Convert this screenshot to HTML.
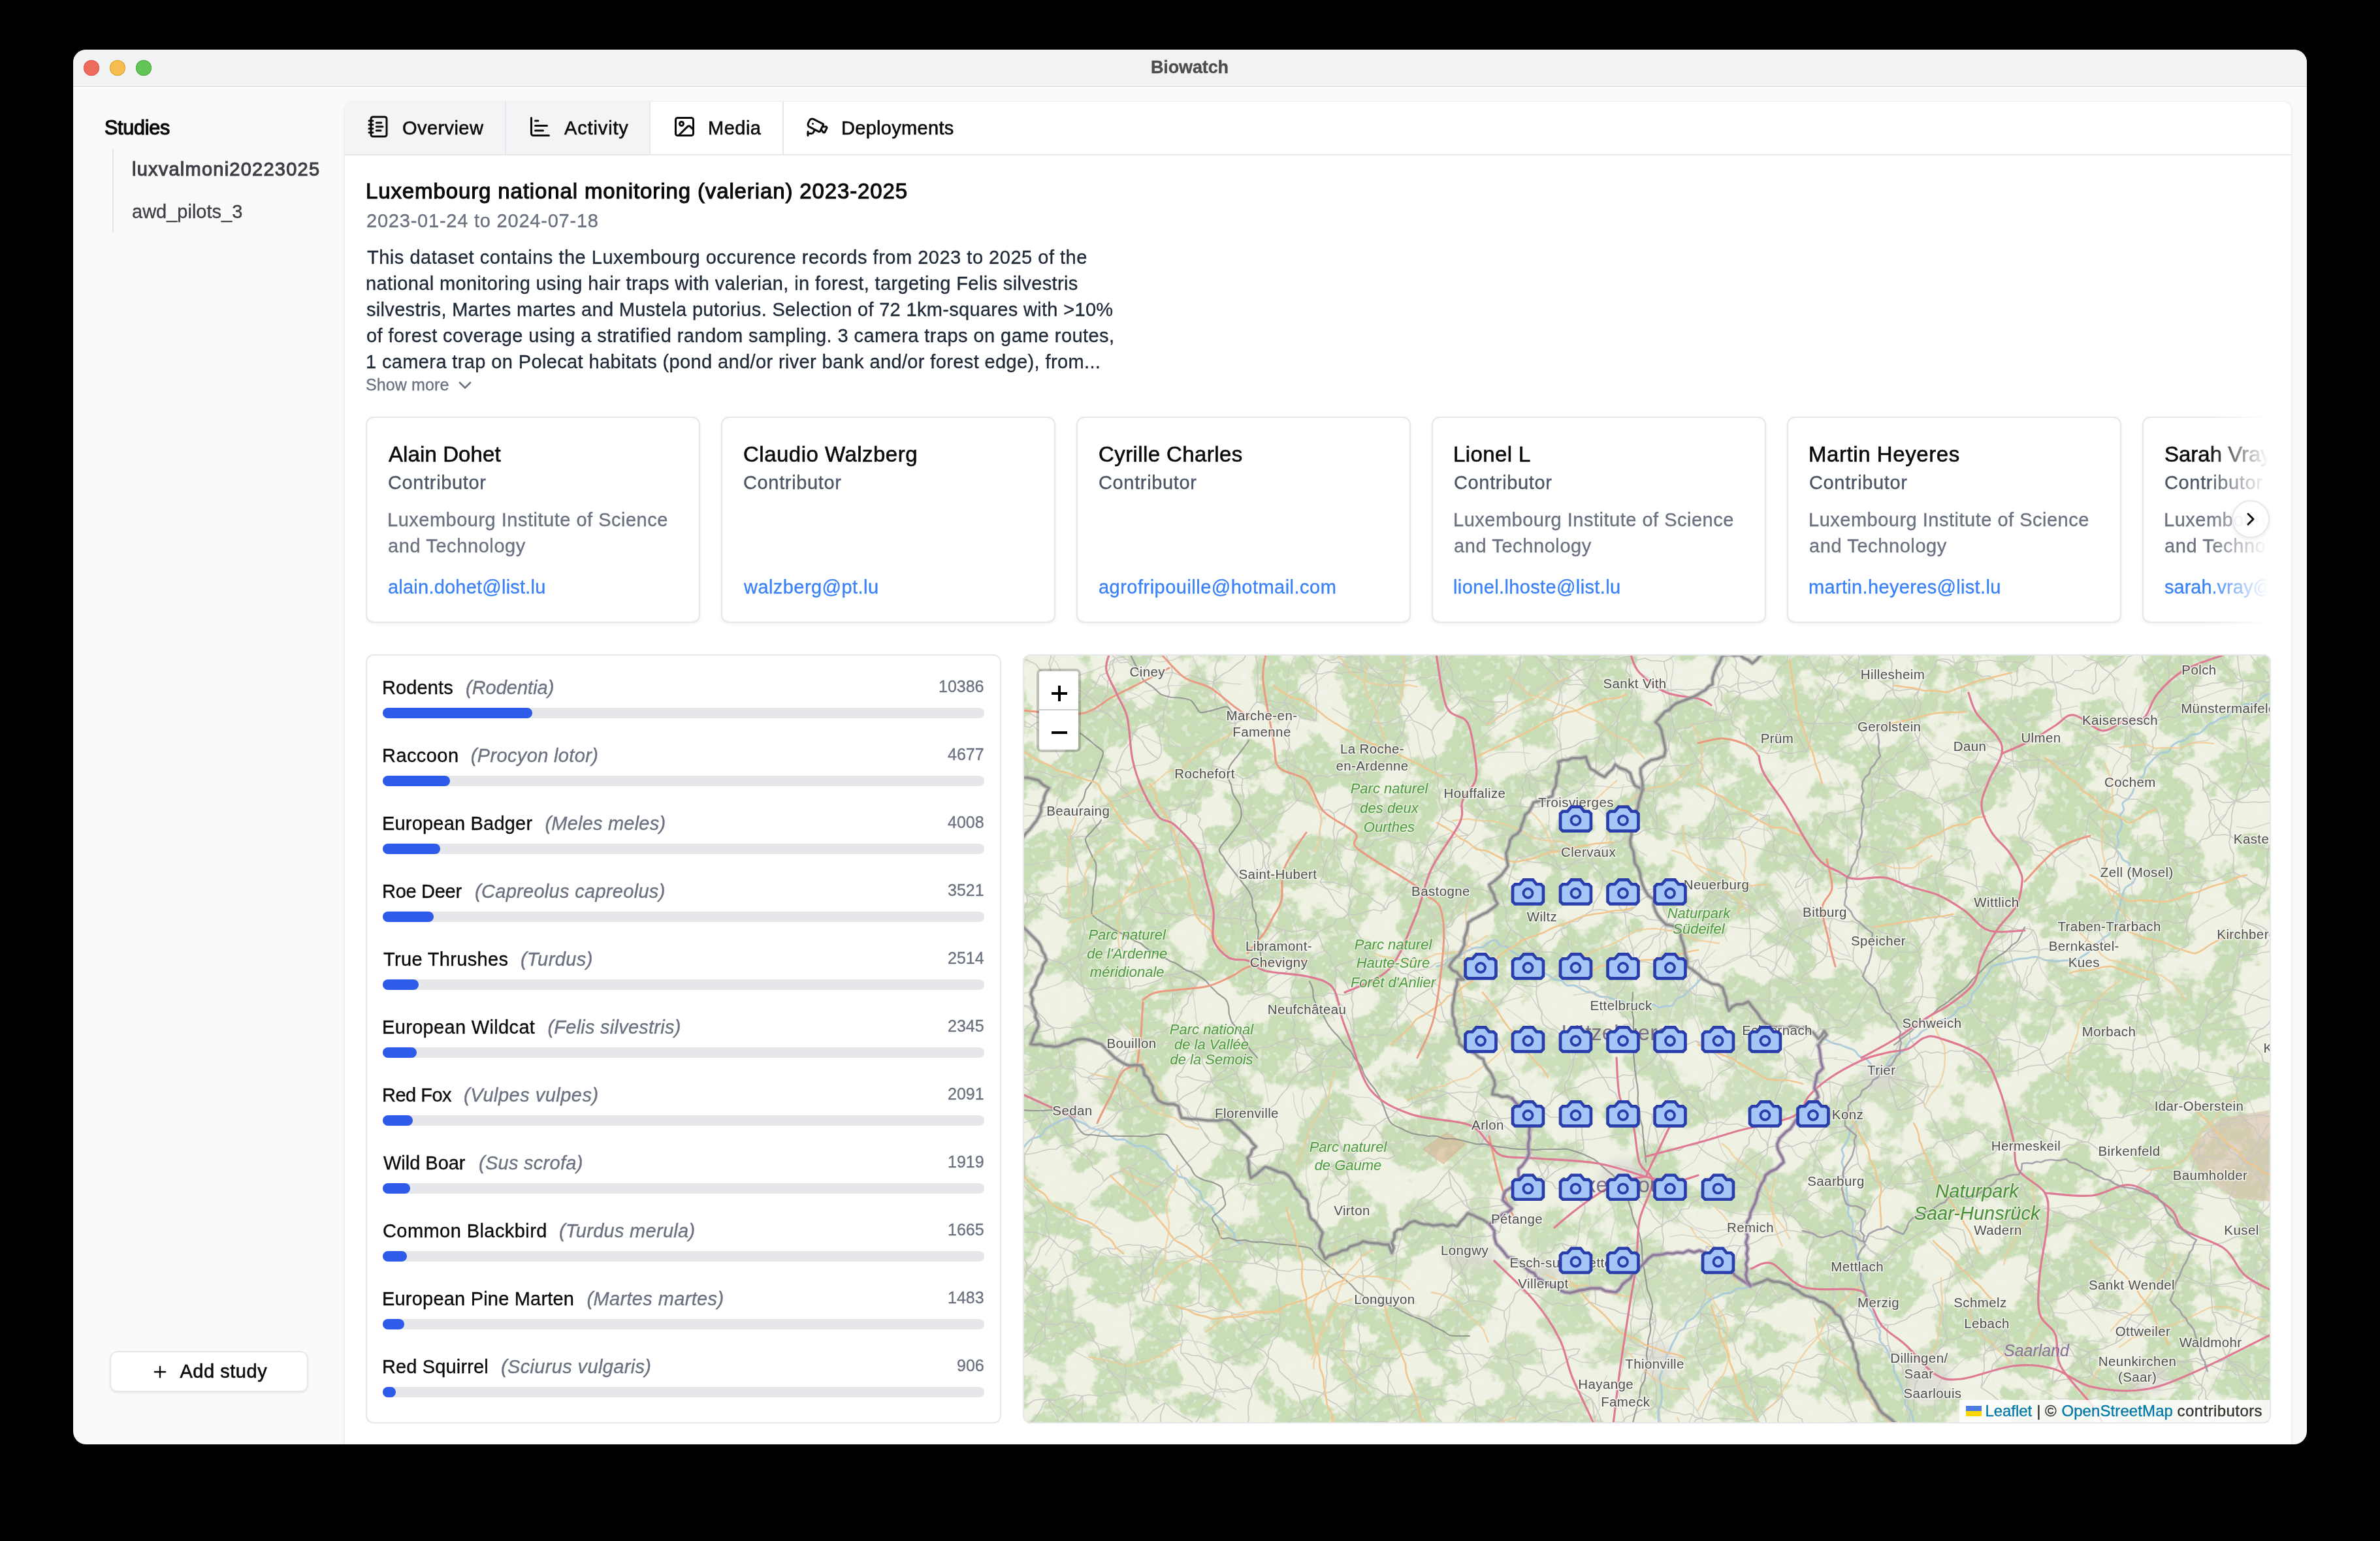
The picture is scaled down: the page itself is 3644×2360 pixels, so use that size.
<!DOCTYPE html>
<html><head><meta charset="utf-8"><title>Biowatch</title>
<style>
html,body{margin:0;padding:0;width:3644px;height:2360px;overflow:hidden;background:#000;}
#win{position:absolute;will-change:transform;left:112px;top:76px;width:3420px;height:2136px;border-radius:20px;overflow:hidden;background:#fafafa;}
.t{position:absolute;white-space:pre;font-family:"Liberation Sans",sans-serif;}
</style></head><body>
<div id="win">
<div style="position:absolute;left:0px;top:0px;width:3420px;height:56px;background:#f2f2f2;"></div>
<div style="position:absolute;left:0px;top:56px;width:3420px;height:1px;background:#d9d9d9;"></div>
<div style="position:absolute;left:16px;top:16px;width:24px;height:24px;border-radius:50%;background:#ee6a5f;box-shadow:inset 0 0 0 1px #d65a50"></div>
<div style="position:absolute;left:56px;top:16px;width:24px;height:24px;border-radius:50%;background:#f5be4f;box-shadow:inset 0 0 0 1px #d9a23c"></div>
<div style="position:absolute;left:96px;top:16px;width:24px;height:24px;border-radius:50%;background:#61c454;box-shadow:inset 0 0 0 1px #4fa843"></div>
<div style="position:absolute;left:60px;top:152px;width:2px;height:128px;background:#e4e4e7;"></div>
<div style="position:absolute;left:56px;top:1993px;width:304px;height:63px;background:#fff;border:2px solid #e5e7eb;border-radius:12px;box-sizing:border-box;box-shadow:0 2px 3px rgba(0,0,0,0.06);"></div>
<svg style="position:absolute;left:119.3px;top:2010.5px" width="28" height="28" viewBox="0 0 24 24" fill="none" stroke="#0a0a0a" stroke-width="2" stroke-linecap="round"><path d="M5 12h14"/><path d="M12 5v14"/></svg>
<div style="position:absolute;left:416px;top:80px;width:2980px;height:2084px;background:#fff;border-radius:12px 12px 0 0;box-shadow:0 0 0 1px rgba(0,0,0,0.03),0 2px 8px rgba(0,0,0,0.06);"></div>
<div style="position:absolute;left:416px;top:80px;width:467px;height:80px;background:#f3f4f6;border-radius:12px 0 0 0;"></div>
<div style="position:absolute;left:416px;top:160px;width:2980px;height:2px;background:#e5e7eb;"></div>
<div style="position:absolute;left:661px;top:80px;width:2px;height:80px;background:#e5e7eb;"></div>
<div style="position:absolute;left:882px;top:80px;width:2px;height:80px;background:#e5e7eb;"></div>
<div style="position:absolute;left:1086px;top:80px;width:2px;height:80px;background:#e5e7eb;"></div>
<svg style="position:absolute;left:449.5px;top:100px" width="36" height="36" viewBox="0 0 24 24" fill="none" stroke="#0a0a0a" stroke-width="2" stroke-linecap="round" stroke-linejoin="round"><path d="M2 6h4"/><path d="M2 10h4"/><path d="M2 14h4"/><path d="M2 18h4"/><rect width="16" height="20" x="4" y="2" rx="2"/><path d="M9.5 8h5"/><path d="M9.5 12H16"/><path d="M9.5 16H14"/></svg>
<svg style="position:absolute;left:697px;top:100px" width="36" height="36" viewBox="0 0 24 24" fill="none" stroke="#0a0a0a" stroke-width="2" stroke-linecap="round" stroke-linejoin="round"><path d="M3 3v16a2 2 0 0 0 2 2h16"/><path d="M7 16h8"/><path d="M7 11h12"/><path d="M7 6h3"/></svg>
<svg style="position:absolute;left:918px;top:100px" width="36" height="36" viewBox="0 0 24 24" fill="none" stroke="#0a0a0a" stroke-width="2" stroke-linecap="round" stroke-linejoin="round"><rect width="18" height="18" x="3" y="3" rx="2" ry="2"/><circle cx="9" cy="9" r="2"/><path d="m21 15-3.086-3.086a2 2 0 0 0-2.828 0L6 21"/></svg>
<svg style="position:absolute;left:1122px;top:100px" width="36" height="36" viewBox="0 0 24 24" fill="none" stroke="#0a0a0a" stroke-width="2" stroke-linecap="round" stroke-linejoin="round"><path d="M16.75 12h3.632a1 1 0 0 1 .894 1.447l-2.034 4.069a1 1 0 0 1-1.708.134l-2.124-2.97"/><path d="M17.106 9.053a1 1 0 0 1 .447 1.341l-3.106 6.211a1 1 0 0 1-1.342.447L3.61 12.3a2.92 2.92 0 0 1-1.3-3.91L3.69 5.6a2.92 2.92 0 0 1 3.92-1.3z"/><path d="M2 19h3.76a2 2 0 0 0 1.8-1.1L9 15"/><path d="M2 21v-4"/><path d="M7 9h.01"/></svg>
<svg style="position:absolute;left:584.0px;top:498.0px" width="32" height="32" viewBox="0 0 24 24" fill="none" stroke="#6b7280" stroke-width="2" stroke-linecap="round" stroke-linejoin="round"><path d="m6 9 6 6 6-6"/></svg>
<div style="position:absolute;left:448px;top:562px;width:2913px;height:330px;overflow:hidden"><div style="position:absolute;left:0px;top:0px;width:512px;height:316px;box-sizing:border-box;border:2px solid #e5e7eb;border-radius:12px;background:#fff;box-shadow:0 2px 4px rgba(0,0,0,0.05)"></div>
<div style="position:absolute;left:544px;top:0px;width:512px;height:316px;box-sizing:border-box;border:2px solid #e5e7eb;border-radius:12px;background:#fff;box-shadow:0 2px 4px rgba(0,0,0,0.05)"></div>
<div style="position:absolute;left:1088px;top:0px;width:512px;height:316px;box-sizing:border-box;border:2px solid #e5e7eb;border-radius:12px;background:#fff;box-shadow:0 2px 4px rgba(0,0,0,0.05)"></div>
<div style="position:absolute;left:1632px;top:0px;width:512px;height:316px;box-sizing:border-box;border:2px solid #e5e7eb;border-radius:12px;background:#fff;box-shadow:0 2px 4px rgba(0,0,0,0.05)"></div>
<div style="position:absolute;left:2176px;top:0px;width:512px;height:316px;box-sizing:border-box;border:2px solid #e5e7eb;border-radius:12px;background:#fff;box-shadow:0 2px 4px rgba(0,0,0,0.05)"></div>
<div style="position:absolute;left:2720px;top:0px;width:512px;height:316px;box-sizing:border-box;border:2px solid #e5e7eb;border-radius:12px;background:#fff;box-shadow:0 2px 4px rgba(0,0,0,0.05)"></div>
<div class="t" style="left:35.00px;top:33.00px;height:50px;line-height:50px;font-size:33px;font-weight:400;letter-spacing:0.100px;color:#0a0a0a;-webkit-text-stroke:0.6000000000000001px #0a0a0a;">Alain Dohet</div>
<div class="t" style="left:34.00px;top:79.40px;height:44px;line-height:44px;font-size:29px;font-weight:400;letter-spacing:0.650px;color:#4b5563;-webkit-text-stroke:0.35px #4b5563;">Contributor</div>
<div class="t" style="left:33.00px;top:136.00px;height:44px;line-height:44px;font-size:29px;font-weight:400;letter-spacing:0.500px;color:#6b7280;-webkit-text-stroke:0.35px #6b7280;">Luxembourg Institute of Science</div>
<div class="t" style="left:34.00px;top:176.00px;height:44px;line-height:44px;font-size:29px;font-weight:400;letter-spacing:0.592px;color:#6b7280;-webkit-text-stroke:0.35px #6b7280;">and Technology</div>
<div class="t" style="left:34.00px;top:239.40px;height:44px;line-height:44px;font-size:29px;font-weight:400;letter-spacing:0.222px;color:#3b82f6;-webkit-text-stroke:0.35px #3b82f6;">alain.dohet@list.lu</div>
<div class="t" style="left:578.00px;top:33.00px;height:50px;line-height:50px;font-size:33px;font-weight:400;letter-spacing:0.487px;color:#0a0a0a;-webkit-text-stroke:0.6000000000000001px #0a0a0a;">Claudio Walzberg</div>
<div class="t" style="left:578.00px;top:79.40px;height:44px;line-height:44px;font-size:29px;font-weight:400;letter-spacing:0.650px;color:#4b5563;-webkit-text-stroke:0.35px #4b5563;">Contributor</div>
<div class="t" style="left:579.00px;top:239.40px;height:44px;line-height:44px;font-size:29px;font-weight:400;letter-spacing:0.438px;color:#3b82f6;-webkit-text-stroke:0.35px #3b82f6;">walzberg@pt.lu</div>
<div class="t" style="left:1122.00px;top:33.00px;height:50px;line-height:50px;font-size:33px;font-weight:400;letter-spacing:0.400px;color:#0a0a0a;-webkit-text-stroke:0.6000000000000001px #0a0a0a;">Cyrille Charles</div>
<div class="t" style="left:1122.00px;top:79.40px;height:44px;line-height:44px;font-size:29px;font-weight:400;letter-spacing:0.650px;color:#4b5563;-webkit-text-stroke:0.35px #4b5563;">Contributor</div>
<div class="t" style="left:1122.00px;top:239.40px;height:44px;line-height:44px;font-size:29px;font-weight:400;letter-spacing:0.480px;color:#3b82f6;-webkit-text-stroke:0.35px #3b82f6;">agrofripouille@hotmail.com</div>
<div class="t" style="left:1665.00px;top:33.00px;height:50px;line-height:50px;font-size:33px;font-weight:400;letter-spacing:0.400px;color:#0a0a0a;-webkit-text-stroke:0.6000000000000001px #0a0a0a;">Lionel L</div>
<div class="t" style="left:1666.00px;top:79.40px;height:44px;line-height:44px;font-size:29px;font-weight:400;letter-spacing:0.650px;color:#4b5563;-webkit-text-stroke:0.35px #4b5563;">Contributor</div>
<div class="t" style="left:1665.00px;top:136.00px;height:44px;line-height:44px;font-size:29px;font-weight:400;letter-spacing:0.500px;color:#6b7280;-webkit-text-stroke:0.35px #6b7280;">Luxembourg Institute of Science</div>
<div class="t" style="left:1666.00px;top:176.00px;height:44px;line-height:44px;font-size:29px;font-weight:400;letter-spacing:0.592px;color:#6b7280;-webkit-text-stroke:0.35px #6b7280;">and Technology</div>
<div class="t" style="left:1665.00px;top:239.40px;height:44px;line-height:44px;font-size:29px;font-weight:400;letter-spacing:0.375px;color:#3b82f6;-webkit-text-stroke:0.35px #3b82f6;">lionel.lhoste@list.lu</div>
<div class="t" style="left:2209.00px;top:33.00px;height:50px;line-height:50px;font-size:33px;font-weight:400;letter-spacing:0.569px;color:#0a0a0a;-webkit-text-stroke:0.6000000000000001px #0a0a0a;">Martin Heyeres</div>
<div class="t" style="left:2210.00px;top:79.40px;height:44px;line-height:44px;font-size:29px;font-weight:400;letter-spacing:0.650px;color:#4b5563;-webkit-text-stroke:0.35px #4b5563;">Contributor</div>
<div class="t" style="left:2209.00px;top:136.00px;height:44px;line-height:44px;font-size:29px;font-weight:400;letter-spacing:0.500px;color:#6b7280;-webkit-text-stroke:0.35px #6b7280;">Luxembourg Institute of Science</div>
<div class="t" style="left:2210.00px;top:176.00px;height:44px;line-height:44px;font-size:29px;font-weight:400;letter-spacing:0.592px;color:#6b7280;-webkit-text-stroke:0.35px #6b7280;">and Technology</div>
<div class="t" style="left:2209.00px;top:239.40px;height:44px;line-height:44px;font-size:29px;font-weight:400;letter-spacing:0.333px;color:#3b82f6;-webkit-text-stroke:0.35px #3b82f6;">martin.heyeres@list.lu</div>
<div class="t" style="left:2754.00px;top:33.00px;height:50px;line-height:50px;font-size:33px;font-weight:400;letter-spacing:0.000px;color:#0a0a0a;-webkit-text-stroke:0.6000000000000001px #0a0a0a;">Sarah Vray</div>
<div class="t" style="left:2754.00px;top:79.40px;height:44px;line-height:44px;font-size:29px;font-weight:400;letter-spacing:0.650px;color:#4b5563;-webkit-text-stroke:0.35px #4b5563;">Contributor</div>
<div class="t" style="left:2753.00px;top:136.00px;height:44px;line-height:44px;font-size:29px;font-weight:400;letter-spacing:0.500px;color:#6b7280;-webkit-text-stroke:0.35px #6b7280;">Luxembourg Institute of Science</div>
<div class="t" style="left:2754.00px;top:176.00px;height:44px;line-height:44px;font-size:29px;font-weight:400;letter-spacing:0.592px;color:#6b7280;-webkit-text-stroke:0.35px #6b7280;">and Technology</div>
<div class="t" style="left:2754.00px;top:239.40px;height:44px;line-height:44px;font-size:29px;font-weight:400;letter-spacing:0.000px;color:#3b82f6;-webkit-text-stroke:0.35px #3b82f6;">sarah.vray@list.lu</div><div style="position:absolute;left:2820px;top:0;width:93px;height:330px;background:linear-gradient(to right,rgba(255,255,255,0),#fff)"></div></div>
<div style="position:absolute;left:3305px;top:690px;width:58px;height:58px;border-radius:50%;background:rgba(255,255,255,0.82);border:2px solid #e5e7eb;box-sizing:border-box;box-shadow:0 2px 6px rgba(0,0,0,0.08)"></div>
<svg style="position:absolute;left:3318.0px;top:703.0px" width="32" height="32" viewBox="0 0 24 24" fill="none" stroke="#0a0a0a" stroke-width="2.2" stroke-linecap="round" stroke-linejoin="round"><path d="m9 18 6-6-6-6"/></svg>
<div style="position:absolute;left:448px;top:926px;width:973px;height:1178px;background:#fff;border:2px solid #e5e7eb;border-radius:12px;box-sizing:border-box;"></div>
<div style="position:absolute;left:474px;top:1008px;width:921px;height:16px;background:#e5e7eb;border-radius:8px;"></div>
<div style="position:absolute;left:474px;top:1008px;width:228.83985645933012px;height:16px;background:#2f5bea;border-radius:8px;"></div>
<div style="position:absolute;left:474px;top:1112px;width:921px;height:16px;background:#e5e7eb;border-radius:8px;"></div>
<div style="position:absolute;left:474px;top:1112px;width:103.05064593301438px;height:16px;background:#2f5bea;border-radius:8px;"></div>
<div style="position:absolute;left:474px;top:1216px;width:921px;height:16px;background:#e5e7eb;border-radius:8px;"></div>
<div style="position:absolute;left:474px;top:1216px;width:88.3102392344498px;height:16px;background:#2f5bea;border-radius:8px;"></div>
<div style="position:absolute;left:474px;top:1320px;width:921px;height:16px;background:#e5e7eb;border-radius:8px;"></div>
<div style="position:absolute;left:474px;top:1320px;width:77.57992822966503px;height:16px;background:#2f5bea;border-radius:8px;"></div>
<div style="position:absolute;left:474px;top:1424px;width:921px;height:16px;background:#e5e7eb;border-radius:8px;"></div>
<div style="position:absolute;left:474px;top:1424px;width:55.39220095693781px;height:16px;background:#2f5bea;border-radius:8px;"></div>
<div style="position:absolute;left:474px;top:1528px;width:921px;height:16px;background:#e5e7eb;border-radius:8px;"></div>
<div style="position:absolute;left:474px;top:1528px;width:51.6685406698565px;height:16px;background:#2f5bea;border-radius:8px;"></div>
<div style="position:absolute;left:474px;top:1632px;width:921px;height:16px;background:#e5e7eb;border-radius:8px;"></div>
<div style="position:absolute;left:474px;top:1632px;width:46.072033492822925px;height:16px;background:#2f5bea;border-radius:8px;"></div>
<div style="position:absolute;left:474px;top:1736px;width:921px;height:16px;background:#e5e7eb;border-radius:8px;"></div>
<div style="position:absolute;left:474px;top:1736px;width:42.2822727272727px;height:16px;background:#2f5bea;border-radius:8px;"></div>
<div style="position:absolute;left:474px;top:1840px;width:921px;height:16px;background:#e5e7eb;border-radius:8px;"></div>
<div style="position:absolute;left:474px;top:1840px;width:36.68576555023924px;height:16px;background:#2f5bea;border-radius:8px;"></div>
<div style="position:absolute;left:474px;top:1944px;width:921px;height:16px;background:#e5e7eb;border-radius:8px;"></div>
<div style="position:absolute;left:474px;top:1944px;width:32.67566985645931px;height:16px;background:#2f5bea;border-radius:8px;"></div>
<div style="position:absolute;left:474px;top:2048px;width:921px;height:16px;background:#e5e7eb;border-radius:8px;"></div>
<div style="position:absolute;left:474px;top:2048px;width:19.96234449760766px;height:16px;background:#2f5bea;border-radius:8px;"></div>
<div style="position:absolute;left:1454px;top:926px;width:1911px;height:1178px;overflow:hidden;border-radius:12px;"><svg style="position:absolute;left:0;top:0" width="1911" height="1178" viewBox="1566 1002 1911 1178"><rect x="1566" y="1002" width="1911" height="1178" fill="#eff1e3"/><defs><filter id="fo1" x="1566" y="1002" width="1911" height="1178" filterUnits="userSpaceOnUse" color-interpolation-filters="sRGB"><feTurbulence type="fractalNoise" baseFrequency="0.014" numOctaves="6" seed="11" result="n"/><feColorMatrix in="n" type="matrix" values="0 0 0 0 0.784  0 0 0 0 0.863  0 0 0 0 0.714  14 0 0 0 -5.95" result="f"/><feComposite in="f" in2="SourceGraphic" operator="in"/></filter><filter id="fo2" x="1566" y="1002" width="1911" height="1178" filterUnits="userSpaceOnUse" color-interpolation-filters="sRGB"><feTurbulence type="fractalNoise" baseFrequency="0.014" numOctaves="6" seed="11" result="n"/><feColorMatrix in="n" type="matrix" values="0 0 0 0 0.784  0 0 0 0 0.863  0 0 0 0 0.714  14 0 0 0 -6.4" result="f"/><feComposite in="f" in2="SourceGraphic" operator="in"/></filter><filter id="fo3" x="1566" y="1002" width="1911" height="1178" filterUnits="userSpaceOnUse" color-interpolation-filters="sRGB"><feTurbulence type="fractalNoise" baseFrequency="0.014" numOctaves="6" seed="11" result="n"/><feColorMatrix in="n" type="matrix" values="0 0 0 0 0.784  0 0 0 0 0.863  0 0 0 0 0.714  14 0 0 0 -7.0" result="f"/><feComposite in="f" in2="SourceGraphic" operator="in"/></filter><filter id="speck" x="1566" y="1002" width="1911" height="1178" filterUnits="userSpaceOnUse" color-interpolation-filters="sRGB"><feTurbulence type="fractalNoise" baseFrequency="0.09" numOctaves="2" seed="5" result="n"/><feColorMatrix in="n" type="matrix" values="0 0 0 0 0.95  0 0 0 0 0.96  0 0 0 0 0.92  12 0 0 0 -6.9" result="f"/><feComposite in="f" in2="SourceGraphic" operator="in"/></filter><filter id="bl" x="-50%" y="-50%" width="200%" height="200%"><feGaussianBlur stdDeviation="60"/></filter><filter id="ub" x="-50%" y="-50%" width="200%" height="200%"><feGaussianBlur stdDeviation="6"/></filter><mask id="mdense" maskUnits="userSpaceOnUse" x="1566" y="1002" width="1911" height="1178"><g filter="url(#bl)" fill="#fff"><ellipse cx="1850" cy="1380" rx="320" ry="280"/><ellipse cx="2080" cy="1150" rx="200" ry="150"/><ellipse cx="1720" cy="1200" rx="220" ry="260"/><ellipse cx="1950" cy="1100" rx="200" ry="120"/><ellipse cx="2250" cy="1060" rx="320" ry="90"/><ellipse cx="3200" cy="1640" rx="260" ry="120"/><ellipse cx="3250" cy="1700" rx="230" ry="200"/><ellipse cx="2800" cy="1150" rx="200" ry="150"/></g></mask><mask id="msparse" maskUnits="userSpaceOnUse" x="1566" y="1002" width="1911" height="1178"><g filter="url(#bl)" fill="#fff"><ellipse cx="2480" cy="1760" rx="230" ry="220"/><ellipse cx="2450" cy="2050" rx="120" ry="150"/><ellipse cx="2860" cy="1660" rx="80" ry="80"/></g></mask></defs><rect x="1566" y="1002" width="1911" height="1178" fill="#fff" filter="url(#fo2)"/><rect x="1566" y="1002" width="1911" height="1178" fill="#fff" filter="url(#fo1)" mask="url(#mdense)"/><rect x="1566" y="1002" width="1911" height="1178" fill="#eef1e2" opacity="0.6" mask="url(#msparse)"/><rect x="1566" y="1002" width="1911" height="1178" fill="#fff" filter="url(#fo3)" mask="url(#msparse)"/><rect x="1566" y="1002" width="1911" height="1178" fill="#fff" filter="url(#speck)" opacity="0.45"/><path d="M2179 1760 L2215 1735 L2243 1752 L2210 1782Z" fill="#d8b190" opacity="0.55" stroke="#d9a97f" stroke-width="2"/><g fill="#dcd9d3" opacity="0.7" filter="url(#ub)"><ellipse cx="2485" cy="1805" rx="38" ry="30"/><ellipse cx="2880" cy="1650" rx="30" ry="22"/><ellipse cx="2250" cy="1925" rx="40" ry="18"/><ellipse cx="2370" cy="1945" rx="35" ry="15"/><ellipse cx="2540" cy="2085" rx="25" ry="30"/><ellipse cx="2950" cy="2110" rx="35" ry="40"/><ellipse cx="3290" cy="2110" rx="30" ry="25"/><ellipse cx="2278" cy="1735" rx="15" ry="12"/><ellipse cx="3060" cy="1395" rx="18" ry="12"/><ellipse cx="2750" cy="1405" rx="15" ry="12"/><ellipse cx="1645" cy="1705" rx="25" ry="15"/></g><path d="M2540 2180C2540 2178 2539 2173 2539 2170C2539 2167 2539 2163 2539 2160C2540 2157 2542 2153 2543 2150C2544 2147 2544 2143 2545 2140C2545 2137 2544 2133 2544 2130C2544 2127 2543 2123 2543 2120C2542 2117 2541 2113 2541 2110C2542 2106 2543 2103 2545 2100C2547 2097 2550 2094 2551 2091C2552 2087 2550 2083 2551 2079C2552 2075 2554 2072 2556 2069C2557 2066 2559 2063 2560 2059C2562 2056 2563 2053 2565 2050C2567 2046 2568 2043 2570 2040C2572 2037 2576 2037 2579 2034C2581 2032 2581 2027 2583 2025C2586 2022 2589 2021 2592 2019C2595 2017 2597 2014 2599 2012C2601 2009 2603 2006 2605 2004C2607 2001 2610 1999 2612 1996C2615 1994 2617 1992 2620 1990C2623 1988 2627 1987 2630 1986C2633 1984 2636 1982 2639 1981C2643 1980 2647 1981 2650 1980C2653 1978 2656 1975 2659 1974C2662 1972 2667 1974 2670 1973C2674 1972 2678 1970 2680 1969" fill="none" stroke="#a6c9dc" stroke-width="3" stroke-linecap="round" stroke-linejoin="round" opacity="0.9"/><path d="M2794 1591C2796 1592 2801 1595 2805 1597C2809 1599 2814 1599 2818 1600C2822 1602 2826 1604 2830 1605C2834 1606 2837 1607 2840 1609C2842 1611 2844 1615 2846 1617C2849 1619 2853 1619 2856 1621C2859 1623 2861 1626 2863 1628C2866 1631 2867 1635 2870 1637C2873 1639 2877 1641 2880 1640C2883 1639 2886 1635 2888 1632C2891 1629 2892 1625 2894 1622C2896 1619 2899 1617 2903 1615C2906 1613 2911 1612 2914 1610C2917 1607 2918 1603 2920 1600C2922 1597 2924 1594 2927 1592C2929 1590 2933 1590 2936 1587C2938 1585 2940 1582 2942 1580C2945 1578 2948 1577 2951 1575C2954 1574 2957 1572 2960 1570C2963 1568 2966 1565 2970 1563C2973 1562 2978 1562 2981 1560C2985 1559 2988 1557 2991 1554C2994 1551 2996 1546 2999 1544C3002 1542 3007 1542 3010 1540C3013 1538 3015 1535 3017 1532C3019 1529 3018 1525 3020 1522C3022 1519 3025 1517 3027 1514C3029 1512 3031 1509 3033 1506C3035 1503 3037 1500 3039 1497C3041 1495 3043 1492 3045 1489C3046 1486 3047 1482 3050 1480C3053 1478 3057 1478 3060 1477C3063 1476 3067 1476 3070 1475C3073 1474 3077 1473 3080 1472C3083 1471 3086 1469 3090 1469C3093 1468 3097 1468 3100 1468C3103 1468 3107 1467 3110 1466C3113 1466 3117 1465 3120 1466C3123 1466 3127 1469 3130 1470C3133 1471 3137 1471 3140 1471C3143 1472 3147 1472 3150 1472C3153 1472 3157 1471 3160 1471C3163 1471 3167 1471 3170 1471C3173 1471 3177 1471 3180 1470C3183 1469 3186 1466 3189 1464C3192 1462 3195 1461 3198 1458C3200 1455 3201 1451 3204 1449C3207 1446 3210 1445 3213 1443C3216 1441 3219 1439 3221 1436C3224 1434 3228 1433 3230 1430C3232 1427 3230 1422 3231 1419C3233 1416 3237 1414 3239 1411C3241 1408 3240 1404 3241 1400C3242 1397 3244 1394 3245 1390C3246 1387 3247 1384 3247 1380C3248 1377 3249 1374 3250 1370C3251 1366 3252 1362 3255 1359C3257 1356 3263 1355 3266 1352C3268 1348 3271 1343 3270 1340C3269 1337 3264 1336 3262 1334C3260 1331 3262 1325 3260 1322C3258 1320 3253 1319 3251 1317C3248 1314 3248 1311 3246 1308C3244 1305 3240 1303 3240 1300C3240 1297 3244 1294 3244 1290C3244 1287 3241 1283 3242 1280C3242 1277 3245 1274 3247 1270C3248 1267 3249 1264 3249 1260C3249 1257 3245 1253 3246 1250C3246 1246 3251 1244 3252 1240C3252 1237 3249 1233 3250 1230C3251 1227 3256 1226 3259 1223C3261 1220 3263 1217 3265 1214C3266 1211 3267 1207 3269 1204C3270 1200 3272 1197 3274 1195C3277 1192 3281 1190 3282 1187C3284 1184 3284 1179 3285 1176C3287 1173 3290 1170 3292 1168C3295 1165 3297 1162 3300 1160C3303 1158 3305 1154 3308 1153C3311 1152 3317 1153 3320 1151C3323 1150 3323 1144 3326 1142C3329 1139 3332 1138 3335 1136C3338 1135 3343 1135 3346 1133C3349 1131 3351 1127 3354 1126C3357 1124 3362 1125 3365 1124C3368 1123 3371 1121 3374 1118C3377 1116 3378 1112 3381 1110C3384 1108 3388 1107 3391 1106C3394 1104 3397 1101 3400 1100C3403 1099 3408 1099 3411 1097C3413 1095 3415 1090 3418 1088C3421 1086 3425 1087 3429 1086C3432 1084 3434 1080 3437 1079C3440 1077 3445 1079 3448 1078C3452 1077 3455 1076 3458 1074C3461 1072 3463 1068 3466 1066C3469 1064 3474 1063 3476 1062" fill="none" stroke="#a6c9dc" stroke-width="3" stroke-linecap="round" stroke-linejoin="round" opacity="0.9"/><path d="M2930 2180C2930 2178 2929 2173 2928 2169C2927 2166 2926 2162 2924 2159C2922 2156 2918 2154 2917 2151C2916 2147 2918 2143 2917 2139C2917 2136 2914 2133 2913 2129C2912 2126 2911 2123 2909 2119C2908 2116 2906 2113 2905 2110C2903 2106 2901 2103 2900 2100C2899 2097 2900 2092 2899 2089C2898 2086 2895 2083 2894 2079C2892 2076 2892 2072 2890 2069C2889 2066 2886 2063 2884 2060C2881 2057 2878 2054 2878 2051C2877 2047 2879 2042 2879 2039C2878 2035 2875 2033 2873 2029C2872 2026 2872 2022 2871 2019C2869 2016 2868 2012 2866 2009C2864 2006 2861 2003 2860 2000C2859 1997 2861 1993 2861 1989C2860 1986 2859 1983 2857 1980C2856 1977 2852 1974 2852 1970C2851 1967 2854 1963 2853 1960C2853 1956 2851 1953 2850 1950C2849 1947 2848 1943 2848 1940C2847 1937 2849 1933 2848 1930C2847 1926 2842 1924 2842 1920C2841 1917 2843 1913 2842 1910C2842 1907 2840 1904 2838 1900C2837 1897 2836 1894 2836 1890C2835 1887 2837 1883 2837 1880C2837 1876 2837 1873 2836 1870C2835 1866 2831 1864 2830 1860C2829 1857 2830 1853 2830 1850C2830 1847 2829 1843 2829 1840C2828 1837 2828 1833 2828 1830C2828 1827 2827 1823 2827 1820C2827 1817 2829 1813 2828 1810C2827 1806 2823 1804 2822 1800C2821 1797 2823 1793 2823 1790C2823 1787 2820 1784 2820 1780C2820 1777 2823 1773 2823 1770C2823 1766 2819 1763 2820 1760C2821 1757 2825 1754 2826 1751C2828 1747 2830 1744 2831 1740C2832 1737 2832 1733 2833 1729C2835 1726 2838 1723 2840 1720C2842 1717 2844 1713 2845 1710C2847 1707 2849 1702 2850 1700" fill="none" stroke="#a6c9dc" stroke-width="3" stroke-linecap="round" stroke-linejoin="round" opacity="0.9"/><path d="M1566 1760C1567 1758 1570 1753 1573 1750C1575 1748 1578 1745 1582 1743C1585 1742 1590 1742 1593 1740C1596 1737 1597 1733 1600 1730C1603 1727 1606 1726 1609 1724C1613 1722 1616 1720 1619 1719C1622 1717 1626 1715 1629 1714C1633 1713 1637 1712 1640 1712C1643 1712 1647 1715 1650 1717C1653 1718 1657 1719 1660 1721C1664 1722 1666 1726 1669 1727C1673 1729 1677 1729 1680 1730C1684 1731 1688 1732 1691 1733C1694 1735 1697 1738 1700 1740C1703 1742 1706 1744 1709 1745C1713 1746 1717 1744 1721 1745C1724 1746 1727 1749 1730 1750C1733 1752 1736 1754 1739 1755C1743 1756 1747 1754 1750 1755C1754 1756 1757 1758 1760 1760C1763 1762 1766 1763 1769 1765C1772 1767 1773 1771 1776 1773C1779 1775 1782 1776 1785 1778C1787 1781 1788 1785 1791 1787C1793 1790 1796 1791 1799 1794C1801 1796 1802 1800 1805 1802C1808 1803 1813 1803 1816 1805C1819 1807 1820 1811 1822 1813C1824 1816 1827 1818 1830 1820C1833 1822 1836 1823 1838 1826C1840 1829 1839 1834 1841 1837C1842 1840 1846 1841 1849 1844C1851 1846 1854 1848 1856 1850C1858 1853 1859 1857 1861 1859C1863 1862 1866 1864 1868 1866C1871 1869 1873 1871 1875 1874C1877 1876 1879 1879 1882 1881C1884 1884 1887 1886 1889 1888C1890 1891 1890 1896 1891 1899C1893 1902 1899 1904 1900 1905" fill="none" stroke="#a6c9dc" stroke-width="3" stroke-linecap="round" stroke-linejoin="round" opacity="0.9"/><path d="M2200 1480C2202 1479 2208 1479 2211 1477C2214 1475 2216 1471 2220 1469C2223 1468 2227 1468 2231 1466C2234 1465 2237 1462 2240 1460C2243 1458 2246 1456 2250 1455C2253 1453 2256 1452 2260 1451C2263 1451 2268 1452 2271 1450C2274 1449 2276 1445 2280 1443C2283 1441 2287 1439 2290 1440C2293 1441 2294 1446 2297 1448C2299 1450 2304 1449 2307 1450C2310 1452 2312 1455 2315 1457C2317 1459 2321 1460 2323 1462C2326 1464 2327 1468 2330 1470C2333 1472 2338 1472 2341 1474C2344 1477 2346 1480 2350 1483C2353 1485 2356 1487 2360 1489C2363 1490 2367 1491 2370 1493C2374 1495 2377 1499 2380 1500C2383 1501 2387 1500 2391 1502C2394 1503 2396 1508 2399 1509C2402 1511 2407 1508 2410 1509C2414 1510 2417 1512 2420 1514C2423 1516 2426 1518 2429 1519C2433 1520 2437 1519 2440 1520C2443 1521 2446 1525 2449 1526C2452 1527 2457 1526 2460 1527C2463 1527 2466 1529 2470 1530C2473 1531 2477 1532 2480 1533C2484 1534 2487 1535 2490 1536C2494 1537 2497 1540 2500 1540C2503 1540 2507 1538 2510 1539C2513 1539 2517 1541 2520 1541C2523 1541 2527 1537 2530 1538C2533 1538 2537 1542 2540 1543C2543 1543 2547 1541 2550 1541C2553 1540 2557 1542 2560 1540C2563 1538 2564 1532 2567 1530C2570 1527 2575 1527 2578 1525C2581 1523 2583 1519 2586 1517C2589 1514 2592 1512 2595 1509C2598 1506 2602 1501 2603 1500" fill="none" stroke="#a6c9dc" stroke-width="3" stroke-linecap="round" stroke-linejoin="round" opacity="0.9"/><path d="M3351 1760 L3400 1712 L3476 1700 L3476 1840 L3420 1835 L3370 1800Z" fill="#d9c2ac" opacity="0.6"/><path d="M3083 1873 3095 1874 3105 1881 3117 1882M2308 1074 2303 1082 2296 1089 2289 1096 2282 1102 2276 1109M2030 1010 2041 1011 2051 1005 2062 1007 2073 1004 2083 1004M3200 1598 3192 1602 3184 1608 3176 1613 3165 1612 3158 1618 3149 1623 3142 1628 3132 1631M1924 1075 1935 1075 1945 1073 1955 1076 1965 1076M1551 1526 1553 1536 1553 1547 1560 1555 1559 1566 1564 1575 1565 1586M1729 1603 1738 1599 1746 1595 1754 1590 1764 1588 1771 1581 1781 1580 1789 1574 1798 1572M1965 1076 1971 1067 1979 1062 1988 1058 1992 1049 2000 1044 2009 1039 2015 1032M2201 1187 2202 1196 2201 1205 2205 1214 2203 1223 2205 1232 2209 1241 2207 1250M1862 1099 1872 1102 1882 1106 1892 1109M3498 1536 3498 1546 3501 1556 3502 1567 3502 1577M3445 1596 3451 1602 3458 1609 3463 1616 3465 1626 3475 1630 3480 1637 3486 1644 3489 1653M1665 1650 1674 1653 1683 1652 1693 1653 1702 1654 1711 1653M3335 2084 3324 2089 3316 2097 3307 2104 3297 2108M2123 1247 2124 1258 2124 1269 2126 1280M3243 2140 3241 2150 3246 2160 3246 2170 3244 2181M1856 1173 1866 1175 1875 1179 1884 1183 1894 1187 1903 1193M2080 1302 2078 1311 2074 1319 2077 1329 2073 1338 2070 1346 2069 1355M1569 1768 1579 1767 1588 1765 1598 1762 1607 1760 1617 1760 1625 1754 1635 1754M1791 1241 1801 1240 1809 1233 1820 1233 1828 1228M3379 1734 3385 1742 3395 1743 3399 1753 3410 1754 3414 1764 3422 1767 3429 1774 3437 1778M1635 1754 1646 1758 1655 1765 1664 1772M2069 1355 2066 1364 2065 1373 2069 1383 2066 1391 2064 1400M1740 1304 1750 1304 1759 1302 1769 1301 1779 1299 1788 1296 1798 1292M1567 1815 1575 1824 1585 1829 1590 1840 1599 1846M2017 1428 2021 1437 2024 1446 2028 1456 2037 1463 2038 1473 2044 1482M3262 1832 3268 1840 3275 1846 3279 1856 3286 1862 3293 1869 3294 1880 3301 1887 3309 1894 3314 1902M3083 1422 3074 1427 3067 1434 3058 1439 3050 1445 3041 1450 3033 1454M2083 1004 2090 1012 2097 1019 2104 1027 2112 1033 2118 1041 2127 1047M1742 1332 1747 1339 1753 1346 1760 1352 1763 1361 1770 1367M1982 1476 1984 1487 1984 1498 1979 1508 1976 1519 1979 1529M1625 1405 1634 1407 1643 1404 1652 1406 1661 1406M3100 1958 3108 1965 3114 1973 3123 1979 3130 1986 3136 1995M3449 1888 3458 1883 3468 1882 3477 1878 3488 1878 3496 1872M3034 2034 3042 2039 3051 2042 3058 2049 3068 2052 3075 2059M3383 1970 3392 1968 3401 1967 3410 1966 3419 1964 3428 1962 3437 1966 3446 1962M1628 1477 1639 1470 1651 1464M1836 1607 1840 1617 1841 1628 1846 1637 1853 1645 1855 1656M1913 1609 1908 1618 1903 1626 1896 1634 1893 1644M1551 1526 1559 1532 1566 1539 1576 1541 1583 1549 1592 1553M1801 1647 1800 1657 1804 1667 1802 1677 1804 1687M2729 2138 2721 2146 2713 2152 2705 2158 2697 2166 2691 2174M1657 2138 1652 2146 1645 2152 1637 2158 1634 2167 1627 2174 1622 2182M3387 2009 3397 2011 3405 2016 3413 2022 3422 2024 3431 2028M2201 1187 2211 1187 2222 1188 2232 1185 2243 1186M1855 1656 1849 1664 1845 1674 1843 1684 1837 1693 1833 1702 1831 1712M1903 1250 1909 1258 1916 1265 1920 1274 1928 1280 1934 1288 1941 1295 1946 1303M3335 2084 3344 2087 3354 2085 3363 2085 3372 2090 3382 2090M3204 2106 3213 2112 3222 2117 3229 2125 3237 2131 3243 2140M2771 1751 2775 1760 2780 1769 2785 1778 2790 1787 2790 1798 2794 1807 2801 1815M3243 2140 3254 2137 3260 2127 3269 2122 3277 2116 3288 2114 3297 2108M2080 1302 2089 1298 2099 1295 2106 1286 2116 1284 2126 1280M1727 1788 1733 1796 1735 1807 1741 1815 1745 1825 1753 1832M1925 1275 1925 1285 1933 1294 1934 1304 1935 1314 1936 1324 1940 1334 1942 1343M2731 1851 2730 1863 2735 1873 2736 1884M3186 2189 3195 2185 3205 2184 3215 2187 3225 2186 3235 2185 3244 2181M2126 1280 2136 1283 2146 1286 2156 1287 2165 1292 2176 1290 2185 1296M3491 1433 3482 1435 3474 1439 3468 1448 3459 1451 3450 1452 3443 1458 3434 1462 3427 1467M2017 1428 2025 1424 2033 1420 2042 1416 2047 1407 2057 1406 2064 1400M1573 1945 1569 1954 1565 1963 1561 1972 1561 1983 1553 1991 1552 2001M2487 1006 2492 1016 2489 1027 2496 1036 2495 1047 2499 1056M2355 1457 2350 1466 2346 1475 2340 1484 2332 1490 2325 1498 2321 1507M3474 1929 3475 1938 3474 1948 3479 1956 3479 1965 3482 1974 3483 1983 3484 1992 3481 2001 3485 2010M3431 2028 3440 2031 3448 2035 3458 2037 3465 2043 3474 2047 3482 2050 3492 2051 3499 2057M2321 1507 2314 1514 2308 1522 2301 1529 2296 1538 2288 1543 2281 1551 2272 1556 2268 1565 2261 1572M1917 1520 1927 1524 1938 1522 1948 1524 1958 1529 1969 1527 1979 1529M2149 971 2158 974 2167 978 2176 981 2185 986 2193 992 2202 994 2212 996M2376 1097 2377 1108 2384 1117 2384 1128 2389 1137 2390 1148M1979 1529 1988 1528 1998 1528 2007 1527 2016 1524 2026 1526 2034 1521 2044 1522M2448 1128 2448 1138 2443 1148 2443 1158 2444 1169 2443 1179 2440 1189M2087 1029 2098 1033 2107 1037 2118 1040 2127 1047M2336 1186 2336 1196 2330 1205 2333 1216 2329 1225 2327 1235M1557 1649 1562 1657 1568 1665 1576 1670 1579 1680 1587 1686 1590 1695 1597 1703 1604 1709M2217 1674 2208 1677 2199 1680 2190 1681 2181 1683 2172 1686 2163 1689M1913 1609 1922 1607 1931 1604 1940 1604 1949 1601 1957 1596 1966 1595 1974 1591 1983 1589M1801 1647 1809 1650 1819 1649 1828 1653 1837 1655 1846 1656 1855 1656M3371 2122 3377 2130 3377 2141 3385 2148 3387 2158 3391 2166 3391 2177 3395 2186 3401 2194 3403 2204 3408 2212M3382 1226 3386 1237 3382 1248 3383 1258 3384 1269 3387 1279M1855 1656 1865 1655 1875 1652 1884 1647 1893 1644M3431 1706 3436 1715 3444 1721 3452 1727 3456 1736 3463 1743 3471 1749M3320 1313 3321 1324 3315 1333 3319 1344 3317 1354M1804 1687 1810 1694 1818 1699 1822 1708 1831 1712M2922 2186 2931 2188 2941 2187 2950 2192 2959 2191 2968 2195 2977 2199 2987 2198 2996 2200M3246 1362 3244 1372 3252 1380 3253 1390 3252 1400 3255 1409M1708 1008 1703 1016 1706 1027 1703 1036 1696 1043 1696 1053 1696 1063 1690 1071 1688 1080 1685 1089M3114 1848 3105 1853 3100 1862 3092 1868 3083 1873M3437 1778 3441 1787 3448 1794 3455 1801 3462 1808 3468 1815 3473 1824 3479 1831M2014 1913 2015 1925 2022 1935 2024 1947M1955 1945 1955 1954 1954 1963 1958 1972 1959 1981 1959 1991 1960 2000 1959 2009 1960 2018 1960 2027M2212 996 2212 1006 2216 1015 2221 1024 2224 1033 2224 1043 2233 1050 2235 1060 2237 1069M2094 1464 2088 1472 2087 1483 2083 1492 2080 1502 2076 1511 2071 1520M2969 1997 2973 2006 2976 2015 2974 2025 2977 2034 2980 2043 2981 2052M1885 2010 1889 2019 1897 2026 1901 2036 1906 2044 1911 2053 1918 2060M1573 1945 1581 1950 1588 1956 1596 1961 1606 1962 1613 1969M2895 996 2886 999 2879 1008 2870 1011 2862 1018 2855 1025 2846 1028M2487 1006 2498 1005 2507 1011 2518 1008 2528 1012 2538 1012 2548 1013M2892 2061 2894 2071 2904 2077 2906 2087 2913 2094 2914 2105 2920 2113M1892 1109 1888 1117 1883 1125 1879 1133 1872 1140 1870 1149 1867 1158 1858 1164 1856 1173M3058 1589 3058 1600 3061 1610 3061 1620 3061 1631 3059 1641M2499 1056 2508 1054 2517 1055 2526 1060 2535 1060 2544 1056 2554 1058M2081 1185 2085 1194 2092 1200 2098 1208 2101 1217 2110 1222 2112 1231 2119 1238 2123 1247M2448 1128 2455 1120 2464 1116 2471 1109 2477 1101M2336 1186 2343 1180 2353 1178 2359 1169 2368 1165 2374 1158 2382 1153 2390 1148M1988 1643 1981 1650 1975 1657 1971 1667 1964 1674 1958 1682 1953 1691 1944 1697M2512 2116 2520 2124 2521 2136 2528 2144 2535 2153M1828 1228 1823 1237 1817 1245 1817 1257 1808 1263 1807 1274 1802 1283 1798 1292M2945 1688 2948 1697 2956 1703 2958 1713 2963 1721 2966 1730 2973 1738 2976 1747M2447 2190 2458 2195 2463 2206 2473 2210M3382 1226 3393 1224 3403 1229 3413 1229 3423 1227M2918 1777 2911 1785 2904 1793 2897 1801 2894 1812 2887 1819M2327 1235 2337 1236 2347 1236 2357 1236M3479 1831 3476 1840 3473 1848 3466 1855 3460 1862 3458 1872 3453 1880 3449 1888M3320 1313 3328 1308 3338 1308 3345 1299 3355 1299 3363 1295 3370 1286 3379 1284 3387 1279M2865 1847 2862 1856 2855 1862 2849 1869 2842 1875 2839 1884M1748 1907 1754 1915 1764 1919 1770 1928M2552 1415 2549 1423 2553 1433 2549 1442 2552 1451 2551 1460 2548 1469 2547 1478M2202 1333 2212 1337 2220 1343 2229 1349 2239 1353 2247 1359M2014 1913 2024 1912 2032 1905 2042 1903 2052 1900 2061 1896 2070 1892 2080 1889M2502 1473 2499 1482 2496 1490 2490 1497 2488 1506 2485 1515 2477 1521 2474 1530 2471 1538M2627 973 2625 983 2627 993 2626 1003 2629 1012 2626 1022 2629 1032 2633 1042 2630 1052M1955 1945 1965 1946 1974 1947 1985 1944 1995 1944 2004 1945 2014 1945 2024 1947M2094 1464 2101 1470 2112 1471 2121 1474 2130 1478 2138 1482 2145 1490 2155 1492M3498 1536 3491 1543 3485 1551 3478 1559 3473 1568 3466 1574 3456 1579 3451 1588 3445 1596M1885 2010 1894 2014 1904 2013 1913 2017 1922 2020 1931 2023 1942 2020 1950 2027 1960 2027M2044 1522 2057 1524 2071 1520M2621 2129 2629 2134 2636 2140 2643 2145 2650 2152 2660 2155 2668 2158 2675 2165 2684 2169 2691 2174M1634 1191 1628 1198 1626 1207 1626 1217 1619 1224 1618 1233 1614 1241M3243 2140 3234 2144 3230 2154 3223 2159 3216 2166 3207 2170 3202 2178 3191 2181 3186 2189M3058 1589 3067 1593 3078 1592 3087 1595 3096 1597 3105 1602 3114 1603 3123 1607M1552 1225 1549 1235 1546 1244 1544 1253 1544 1263 1540 1273 1541 1283 1536 1291M2042 1602 2050 1598 2060 1596 2067 1591 2075 1585M2471 1161 2474 1170 2480 1179 2489 1184 2492 1195 2501 1200 2505 1210M3379 1734 3374 1742 3375 1752 3366 1759 3368 1770 3360 1776 3358 1786 3356 1794M3031 1641 3040 1641 3050 1642 3059 1641M3481 1228 3482 1237 3478 1246 3479 1255 3479 1265 3477 1274 3475 1283 3476 1292 3473 1301M1988 1643 2000 1641 2010 1636 2021 1631M2843 2178 2852 2182 2862 2180 2872 2182 2882 2182 2892 2181 2902 2187 2912 2187 2922 2186M3295 1790 3307 1795 3315 1804 3325 1811M3415 1280 3413 1290 3415 1299 3420 1308 3420 1317 3419 1327 3420 1336M2017 1428 2011 1436 2004 1443 1998 1451 1996 1462 1987 1467 1982 1476M2918 1777 2927 1774 2935 1770 2944 1767 2950 1759 2960 1758 2966 1749 2976 1747M3378 1349 3371 1357 3368 1366 3366 1376 3361 1385 3355 1393 3352 1402 3349 1411M2865 1847 2871 1837 2879 1829 2887 1819M2142 1908 2138 1919 2138 1931M3298 1413 3298 1422 3299 1432 3295 1442 3296 1451 3295 1461 3297 1471M2552 1415 2562 1414 2569 1406 2578 1406 2586 1400 2595 1399M3028 1013 3027 1022 3025 1031M3185 1970 3188 1979 3195 1986 3203 1993 3205 2003M3419 971 3426 978 3434 984 3439 992 3443 1000 3449 1008 3455 1015 3461 1023 3470 1028 3474 1037 3481 1043M3071 2034 3075 2046 3075 2059M2502 1473 2511 1473 2520 1473 2529 1476 2538 1476 2547 1478M2385 1010 2392 1016 2397 1024 2406 1027 2412 1034 2419 1040 2425 1047 2432 1053M3297 1471 3298 1480 3299 1490 3306 1499 3303 1509 3308 1518M1913 1609 1906 1615 1899 1621 1890 1625 1882 1630 1877 1638 1869 1643 1862 1650 1855 1656M2627 973 2638 978 2651 978M3136 1995 3141 2003 3144 2011 3144 2021 3151 2028 3149 2039 3155 2046 3158 2055M3040 2069 3037 2078 3038 2088 3038 2097 3035 2106 3035 2116 3033 2125M3273 1525 3273 1534 3270 1543 3273 1553 3273 1562 3271 1571 3271 1581 3269 1590 3266 1599 3266 1609M1855 1656 1845 1659 1837 1664 1829 1671 1820 1675 1811 1680 1804 1687M2012 1189 2007 1196 2000 1202 1996 1211 1992 1219 1986 1226M1634 1191 1644 1191 1653 1187 1662 1180 1672 1182 1681 1177 1691 1175M3097 1709 3101 1718 3106 1725 3114 1730 3118 1739 3126 1744 3129 1753 3136 1760M2565 1119 2575 1115 2585 1115 2594 1109 2604 1108 2614 1105 2624 1104M1727 1788 1718 1794 1707 1796 1698 1802 1690 1809M2036 1709 2039 1718 2045 1726 2049 1734 2049 1744 2051 1754 2056 1762 2061 1770 2064 1779M1986 1226 1979 1233 1972 1240 1964 1245 1954 1249 1949 1258 1941 1263 1934 1270 1925 1275M1552 1225 1561 1228 1569 1231 1578 1233 1588 1234 1596 1237 1606 1236 1614 1241M1805 1791 1797 1797 1790 1803 1782 1808 1775 1815 1768 1822 1759 1826 1753 1832M3379 1734 3389 1732 3395 1723 3407 1723 3413 1713 3424 1713 3431 1706M1838 1345 1841 1353 1842 1363 1847 1371 1848 1380 1855 1387 1857 1396 1861 1404M1607 1895 1601 1903 1593 1910 1590 1920 1586 1929 1580 1937 1573 1945M3295 1790 3306 1788 3315 1792 3325 1795 3336 1792 3345 1794 3356 1794M3415 1280 3423 1286 3433 1289 3445 1289 3454 1293 3463 1298 3473 1301M3262 1832 3271 1829 3279 1824 3289 1824 3297 1819 3306 1814 3316 1816 3325 1811M1718 1451 1720 1460 1724 1469 1723 1479 1725 1488 1728 1497 1730 1506 1730 1515M3378 1349 3389 1349 3400 1344 3409 1338 3420 1336M2222 1818 2228 1828 2236 1836 2242 1845 2251 1852M2965 1874 2972 1880 2976 1889 2984 1895 2992 1901 2998 1909 3002 1919 3010 1924 3014 1934 3021 1940M1613 1969 1603 1971 1596 1979 1587 1983 1577 1985 1570 1992 1562 1998 1552 2001M3185 1868 3194 1871 3201 1876 3208 1883 3217 1885 3223 1894 3231 1897 3240 1901 3248 1905 3255 1911M1791 1492 1792 1503 1797 1513 1795 1524M1659 1512 1661 1522 1665 1531 1671 1540 1676 1549 1677 1559 1682 1568M1922 991 1922 1000 1923 1009 1926 1019 1925 1028 1926 1037 1926 1047 1924 1056 1925 1066 1924 1075M1613 1574 1614 1584 1616 1593 1617 1603 1622 1612 1623 1621 1625 1631M3028 1013 3037 1012 3047 1011 3056 1013 3066 1014 3076 1013 3085 1014 3095 1015M1858 1044 1857 1053 1861 1062 1860 1072 1863 1081 1864 1090 1862 1099M3185 1970 3196 1968 3206 1962 3215 1956 3225 1953 3236 1952M2448 1128 2439 1132 2428 1133 2419 1137 2410 1143 2400 1146 2390 1148M3297 1471 3306 1467 3315 1465 3322 1457 3333 1458 3341 1452 3350 1448M1557 1649 1555 1659 1554 1669 1556 1679 1552 1688 1553 1698 1549 1708 1548 1718 1549 1728M2802 2071 2807 2080 2808 2090 2814 2098 2816 2108 2822 2117 2826 2126 2827 2136M1781 1098 1782 1108 1780 1117 1775 1125 1776 1135 1778 1144 1778 1153 1774 1162M3371 2122 3372 2131 3366 2140 3368 2150 3364 2158 3363 2167 3357 2176 3355 2185 3356 2194 3352 2203 3351 2212M3273 1525 3285 1522 3297 1522 3308 1518M2729 2138 2734 2145 2739 2153 2743 2162 2749 2169 2759 2173 2761 2183 2767 2190M3499 2057 3491 2062 3486 2069 3483 2079 3476 2085 3469 2090 3465 2099 3458 2105 3451 2111M1549 1728 1553 1736 1559 1743 1562 1752 1565 1760 1569 1768M1636 1287 1642 1295 1645 1304 1647 1314 1650 1323 1653 1332 1657 1340 1664 1348M3033 2125 3041 2130 3050 2136 3058 2143 3066 2150 3076 2154M2249 1279 2243 1285 2239 1294 2230 1298 2224 1305 2221 1314 2214 1320 2208 1326 2202 1333M3481 1709 3480 1719 3476 1729 3475 1740 3471 1749M1572 1371 1582 1375 1588 1384 1600 1385 1608 1392 1617 1398 1625 1405M2938 2189 2948 2189 2958 2190 2967 2194 2976 2197 2987 2195 2996 2200M1925 1275 1930 1286 1942 1292 1946 1303M3437 1778 3431 1786 3427 1796 3424 1806 3421 1816 3418 1826 3413 1835M2247 1359 2243 1369 2239 1378 2233 1386 2225 1394 2223 1405 2219 1414 2212 1422M1790 1399 1800 1402 1810 1398 1820 1402 1830 1400 1840 1403 1851 1403 1861 1404M3413 1835 3417 1844 3421 1851 3428 1858 3431 1867 3439 1873 3443 1881 3449 1888M3314 1902 3317 1912 3314 1923 3316 1933 3318 1943M2748 1360 2757 1356 2763 1348 2772 1345 2779 1338 2787 1333M3386 1907 3385 1916 3383 1925 3384 1934 3385 1943 3385 1952 3386 1961 3383 1970M2334 991 2331 1000 2327 1009 2327 1019 2323 1028 2319 1037 2315 1046 2313 1055 2308 1064 2308 1074M1960 2027 1952 2034 1945 2043 1933 2045 1925 2052 1918 2060M1791 1492 1801 1492 1811 1488 1820 1488 1830 1487 1840 1489M1659 1512 1669 1515 1679 1515 1689 1513 1700 1512 1710 1515 1720 1512 1730 1515M3318 1943 3312 1951 3314 1961 3308 1969 3306 1978 3302 1986 3298 1994 3295 2003 3294 2012M2237 1069 2245 1075 2251 1082 2255 1091 2262 1097 2268 1104 2276 1109M1922 991 1933 989 1942 984 1951 979 1961 976 1972 975M2158 1096 2151 1104 2150 1113 2148 1122 2141 1130 2138 1139 2140 1149 2134 1157M2042 1602 2035 1608 2025 1612 2018 1618 2011 1625 2004 1631 1997 1638 1988 1643M1613 1574 1623 1575 1633 1573 1643 1574 1653 1570 1662 1569 1672 1566 1682 1568M3264 2014 3259 2023 3254 2031 3248 2039 3242 2047 3239 2057M2192 1119 2194 1129 2197 1138 2193 1148 2199 1158 2196 1168 2197 1177 2201 1187M2081 1185 2077 1194 2077 1203 2076 1212 2072 1221 2071 1230M1809 2005 1818 2005 1828 2007 1837 2010 1847 2009 1857 2006 1866 2009 1876 2007 1885 2010M1682 1568 1690 1575 1698 1580 1705 1587 1714 1592 1721 1599 1729 1603M3198 2071 3200 2080 3199 2089 3202 2098 3204 2106M2336 1186 2346 1189 2354 1196 2365 1195 2373 1201 2383 1202 2392 1207 2401 1213 2410 1214M3263 1674 3272 1678 3280 1684 3290 1688 3297 1696M1625 1631 1631 1637 1642 1637 1649 1642 1656 1649 1665 1650M2217 1674 2225 1680 2233 1685 2239 1692 2247 1698 2255 1703M3295 2196 3304 2201 3314 2200 3323 2203 3333 2207 3342 2209 3351 2212M1549 1728 1558 1725 1566 1720 1576 1717 1585 1715 1594 1710 1604 1709M2043 1292 2041 1303 2033 1311 2030 1321 2026 1330 2026 1341 2021 1351M1748 1907 1746 1916 1750 1926 1748 1936 1749 1946 1746 1955M2552 1415 2544 1420 2541 1431 2532 1436 2529 1445 2523 1453 2514 1458 2509 1467 2502 1473M1780 1913 1770 1928M3437 1778 3447 1773 3456 1765 3463 1757 3471 1749M1899 1407 1901 1417 1908 1425 1910 1435 1910 1445 1916 1454M3114 1848 3122 1852 3132 1851 3141 1854 3149 1858 3159 1859 3166 1865 3176 1866 3185 1868M1746 1955 1749 1964 1749 1974 1748 1983 1751 1992M3372 1828 3382 1831 3392 1834 3402 1836 3413 1835M1967 1424 1968 1435 1973 1445 1979 1455 1981 1465 1982 1476M1840 1489 1836 1500 1830 1510M2030 1010 2039 1015 2050 1014 2058 1020 2068 1022 2078 1024 2087 1029M1659 2026 1664 2035 1670 2044 1675 2054 1682 2062 1685 2073M3314 1902 3323 1900 3332 1904 3341 1904 3350 1907 3359 1906 3368 1906 3377 1907 3386 1907M2651 978 2647 987 2646 997 2643 1006 2642 1016 2636 1024 2638 1035 2632 1043 2630 1052M2249 969 2259 969 2268 973 2278 974 2286 979 2295 984 2305 986 2315 986 2324 990 2334 991M1916 1454 1918 1463 1916 1473 1916 1482 1914 1492 1919 1501 1916 1511 1917 1520M1795 1524 1796 1533 1795 1543 1799 1552 1797 1562 1798 1572M1965 1076 1975 1078 1983 1084 1990 1091 2000 1093 2007 1098 2015 1104M3386 1907 3395 1905 3404 1903 3413 1899 3421 1895 3430 1893 3439 1888 3449 1888M2334 991 2342 994 2350 999 2360 998 2368 1003 2377 1007 2385 1010M2205 1035 2212 1041 2217 1049 2225 1055 2231 1062 2237 1069M2417 1598 2416 1607 2411 1616 2409 1625 2408 1634 2405 1643 2402 1652 2396 1660 2396 1670M3318 1943 3326 1949 3337 1949 3346 1955 3355 1959 3364 1963 3373 1968 3383 1970M1553 2153 1555 2162 1560 2171 1568 2178 1570 2187M2237 1069 2247 1068 2257 1069 2267 1074 2277 1074 2287 1075 2298 1075 2308 1074M2158 1096 2164 1104 2174 1108 2183 1113 2192 1119M1606 2143 1607 2154 1614 2162 1619 2171 1622 2182M3264 2014 3274 2014 3284 2014 3294 2012M3502 2125 3497 2134 3488 2141 3485 2152 3477 2160 3473 2170M1711 1653 1712 1663 1714 1672 1715 1681 1717 1690 1721 1698M2296 1713 2288 1720 2282 1729 2277 1739 2270 1747 2265 1756M1908 1695 1920 1694 1932 1696 1944 1697M3198 2071 3208 2067 3219 2066 3229 2061 3239 2057M2540 1173 2532 1179 2525 1187 2519 1195 2511 1202 2505 1210M2366 1301 2372 1310 2381 1316 2385 1326 2394 1332M1691 1726 1684 1734 1680 1744 1677 1755 1670 1763 1664 1772M1853 1748 1863 1752 1873 1754 1881 1762 1892 1762 1901 1768 1910 1773M1740 1304 1742 1314 1747 1323 1750 1332 1755 1341 1760 1350 1767 1358 1770 1367M3142 2119 3150 2115 3159 2113 3168 2112 3177 2110 3186 2110 3196 2109 3204 2106M2071 1230 2080 1231 2089 1235 2097 1238 2107 1238 2114 1246 2123 1247M2298 1370 2301 1379 2303 1388 2307 1396 2305 1406 2308 1415 2313 1423M1798 1292 1805 1299 1808 1309 1814 1315 1819 1324 1825 1331 1831 1338 1838 1345M1784 1812 1792 1816 1798 1823 1805 1829 1813 1833 1821 1838 1828 1844 1834 1850 1843 1854M2430 1308 2422 1316 2411 1319 2403 1327 2394 1332M2043 1292 2053 1293 2061 1300 2070 1302 2080 1302M2251 1852 2245 1860 2239 1868 2232 1875 2227 1883 2222 1892M2313 1423 2309 1432 2304 1441 2298 1449M1599 1846 1601 1856 1603 1866 1601 1876 1605 1886 1607 1895M3449 1888 3455 1895 3459 1904 3464 1913 3466 1922 3474 1929M1780 1913 1789 1910 1795 1900 1803 1894 1814 1892 1822 1886 1828 1877 1837 1872M2021 1351 2030 1351 2040 1351 2050 1354 2059 1357 2069 1355M3185 1970 3176 1972 3169 1978 3162 1985 3153 1989 3144 1990 3136 1995M1899 1407 1908 1410 1919 1409 1928 1413 1937 1419 1948 1418 1957 1422 1967 1424M2385 1010 2388 1019 2387 1029 2393 1037 2394 1046M1746 1955 1751 1947 1758 1941 1766 1936 1770 1928M1628 1477 1634 1484 1639 1492 1645 1499 1651 1506 1659 1512M1967 1424 1977 1427 1987 1426 1997 1423 2007 1425 2017 1428M2192 1512 2194 1521 2202 1528 2206 1537 2208 1546 2210 1556 2215 1564 2221 1572M3446 1962 3454 1969 3457 1979 3466 1985 3472 1994 3480 2001 3485 2010M2444 1012 2443 1023 2438 1033 2433 1042 2432 1053M2078 2005 2071 2011 2069 2021 2062 2027 2058 2035 2051 2042 2048 2050 2039 2055 2035 2063M2308 1074 2308 1084 2304 1094M1551 1526 1558 1533 1565 1540 1575 1543 1581 1551 1590 1555 1596 1564 1604 1570 1613 1574M2267 1554 2263 1563 2261 1572M1916 1454 1926 1455 1935 1460 1944 1464 1953 1469 1964 1467 1972 1474 1982 1476M3075 2059 3070 2068 3066 2076 3058 2083 3051 2090 3049 2101 3043 2108 3038 2117 3033 2125M1795 1524 1804 1520 1813 1518 1821 1511 1830 1510M3387 2009 3392 2017 3394 2027 3394 2036 3399 2045 3404 2053 3403 2063 3406 2072 3410 2080M2394 1046 2389 1056 2388 1067 2386 1077 2381 1087 2376 1097M1751 1992 1761 1994 1770 1998 1780 1998 1790 1999 1800 2000 1809 2005M2937 1133 2928 1136 2921 1143 2914 1150 2905 1153 2899 1162 2890 1166 2883 1172M3335 2084 3341 2093 3350 2098 3358 2105 3363 2115 3371 2122M1685 2073 1693 2079 1703 2080 1712 2087 1722 2089M1553 2153 1564 2153 1575 2150 1584 2144 1595 2143 1606 2143M2883 1172 2878 1180 2878 1190 2875 1199 2870 1208 2870 1217 2865 1226 2865 1235M2161 1662 2160 1675 2163 1689M1798 1572 1805 1579 1815 1584 1820 1593 1828 1600 1836 1607M3243 2140 3248 2149 3258 2152 3264 2160 3271 2166 3275 2176 3284 2180 3286 2191 3295 2196M2243 1186 2245 1196 2250 1205 2258 1212 2262 1222 2266 1231 2272 1240M1606 2143 1616 2145 1626 2141 1636 2138 1646 2136 1657 2138M2105 1724 2099 1732 2094 1741 2086 1747 2083 1757 2077 1765 2068 1770 2064 1779M1965 1760 1962 1769 1957 1777 1959 1787 1951 1794 1952 1804 1949 1813M2207 1250 2203 1259 2200 1269 2193 1277 2187 1285 2185 1296M1570 2187 1580 2185 1590 2185 1601 2186 1611 2182 1622 2182M3408 2212 3416 2207 3423 2201 3432 2196 3441 2191 3450 2187 3456 2179 3465 2176 3473 2170M2768 1315 2765 1324 2762 1334 2759 1343 2752 1351 2748 1360M2366 1301 2375 1303 2384 1302 2393 1307 2402 1305 2411 1306 2421 1306 2430 1308M2034 1790 2033 1801 2027 1810 2023 1820 2022 1830 2019 1840 2017 1851M1691 1726 1699 1720 1706 1712 1712 1703 1721 1698M2069 1355 2075 1362 2083 1368 2093 1369 2100 1376 2107 1381 2116 1386 2122 1393M1907 1902 1911 1910 1914 1919 1920 1926 1922 1935M1791 1492 1782 1494 1775 1501 1766 1504 1757 1507 1748 1510 1738 1510 1730 1515M2162 1346 2155 1353 2150 1362 2142 1369 2137 1378 2127 1383 2122 1393M2741 1430 2733 1437 2725 1443 2716 1448 2707 1453 2698 1457 2690 1463 2680 1466M1841 1927 1838 1936 1837 1946 1840 1956 1836 1966 1836 1976 1836 1986 1835 1995M2044 1482 2051 1488 2055 1497 2060 1504 2064 1513 2071 1520M2270 1470 2281 1465 2288 1455 2298 1449M1809 2005 1810 2015 1808 2024 1805 2034 1807 2044 1811 2053 1808 2063 1808 2072M2714 1042 2717 1051 2721 1059 2728 1066 2728 1076 2735 1083 2738 1092 2740 1101M2385 1010 2395 1010 2405 1013 2415 1009 2424 1011 2434 1011 2444 1012M1836 1607 1844 1612 1851 1620 1860 1624 1870 1626 1876 1635 1886 1636 1893 1644M1722 2089 1724 2100 1723 2110 1723 2120 1720 2131M2444 1012 2454 1008 2465 1009 2477 1010 2487 1006M2419 2066 2414 2074 2404 2077 2399 2085 2391 2090 2383 2096 2377 2103 2369 2108M2651 1102 2653 1111 2663 1116 2665 1125 2673 1131 2674 1142 2681 1148M2538 1613 2532 1621 2527 1628 2519 1634 2511 1639 2505 1646M1657 2138 1658 2148 1657 2158 1656 2168 1659 2178 1659 2188M2740 1101 2735 1108 2730 1116 2723 1122 2720 1130 2714 1137 2711 1146 2706 1154M2394 1046 2403 1049 2413 1048 2423 1049 2432 1053M2606 1170 2608 1180 2614 1189 2621 1197 2624 1206 2627 1216M2276 1109 2287 1106 2293 1097 2304 1094M1855 1656 1861 1664 1869 1669 1878 1673 1884 1680 1892 1685 1902 1687 1908 1695M2221 1572 2231 1572 2241 1570 2251 1574 2261 1572M2098 1109 2104 1117 2108 1126 2114 1134 2122 1141 2130 1148 2134 1157M1720 2131 1725 2139 1727 2148 1731 2157 1738 2165 1742 2174 1745 2183M3335 2084 3344 2085 3354 2082 3363 2080 3373 2084 3382 2080 3391 2078 3401 2083 3410 2080M2532 1212 2531 1222 2536 1231 2534 1241 2537 1250 2537 1259 2538 1269M1804 1687 1810 1695 1817 1702 1820 1712 1827 1719 1837 1724 1842 1732 1847 1741 1853 1748M2161 1662 2170 1666 2179 1668 2189 1669 2198 1670 2208 1671 2217 1674M2036 1709 2046 1713 2056 1711 2066 1713 2075 1719 2085 1723 2095 1723 2105 1724M2627 1216 2626 1225 2624 1234 2620 1242 2616 1250 2617 1260 2614 1269 2608 1276 2608 1286M1727 1788 1737 1790 1745 1798 1755 1801 1764 1806 1774 1810 1784 1812M2105 1724 2113 1719 2121 1713 2131 1710 2137 1703 2145 1697 2156 1695 2163 1689M1805 1791 1809 1800 1814 1807 1818 1815 1824 1823 1830 1830 1833 1839 1839 1846 1843 1854M2034 1790 2043 1784 2054 1784 2064 1779M2505 1364 2501 1372 2495 1379 2491 1388 2487 1397M1607 1895 1615 1902 1621 1909 1631 1913 1640 1917 1648 1923 1653 1932 1662 1936M2185 1296 2194 1292 2203 1288 2213 1290 2221 1284 2230 1281 2240 1280 2249 1279M1695 1911 1701 1920 1711 1923 1718 1928 1725 1936 1733 1941 1738 1950 1746 1955M2238 1948 2244 1956 2244 1965 2248 1974 2248 1983 2250 1992M1907 1902 1917 1900 1927 1900 1937 1897 1948 1900 1958 1897M2162 1346 2172 1344 2182 1339 2192 1337 2202 1333M2355 1457 2356 1466 2357 1475 2357 1484 2353 1493 2352 1502 2353 1511M2237 1069 2232 1078 2225 1084 2216 1089 2210 1097 2203 1103 2197 1111 2192 1119M2188 2020 2193 2028 2192 2038 2198 2046 2197 2056 2202 2065M2432 1053 2438 1060 2445 1066 2451 1073 2456 1082 2466 1086 2473 1092 2477 1101M1841 1927 1850 1930 1859 1931 1868 1928 1877 1932 1886 1932 1895 1932 1904 1934 1913 1935 1922 1935M3212 1014 3203 1016 3195 1022 3187 1027 3177 1027 3171 1035 3162 1039 3154 1044 3145 1045M2791 982 2801 985 2812 986 2823 983 2833 985 2844 986M2129 2080 2126 2089 2130 2099 2125 2108 2126 2118 2125 2127 2125 2137M1809 2005 1817 2001 1826 1999 1835 1995M2353 1511 2352 1522 2354 1531 2356 1541 2361 1550 2360 1560 2363 1569M3198 2071 3192 2077 3183 2081 3177 2088 3170 2095 3161 2099 3155 2106 3149 2113 3142 2119M2448 1128 2455 1136 2458 1145 2464 1153 2471 1161M1835 1995 1844 2001 1855 2000 1864 2006 1875 2007 1885 2010M2297 1598 2302 1608 2305 1618 2307 1628 2313 1638 2318 1647M2217 1674 2206 1679 2196 1684 2185 1687M3410 2080 3418 2086 3428 2086 3436 2091 3443 2098 3451 2103 3459 2106 3468 2109 3476 2114 3484 2119 3494 2119 3502 2125M1808 2072 1817 2073 1826 2076 1835 2076 1844 2080 1853 2082 1861 2087 1871 2086M1657 2138 1666 2136 1675 2137 1684 2138 1693 2133 1702 2134 1711 2132 1720 2131M2740 1101 2750 1103 2759 1105 2768 1108 2778 1108M2263 1672 2261 1682 2260 1693 2255 1703M2844 1727 2834 1727 2825 1732 2816 1734 2807 1736 2798 1741 2790 1746 2780 1747 2771 1751M2681 1148 2693 1150 2706 1154M2720 2214 2730 2211 2739 2204 2749 2201 2759 2196 2767 2190M2627 1216 2633 1224 2638 1231 2641 1240 2646 1248M2325 1313 2335 1318 2345 1320 2355 1321 2366 1321 2375 1324 2384 1331 2394 1332M2538 1269 2546 1272 2555 1275 2563 1278 2573 1276 2582 1277 2590 1283 2600 1283 2608 1286M1967 1424 1957 1427 1950 1434 1943 1442 1934 1445 1925 1450 1916 1454M2505 1364 2514 1362 2523 1363 2532 1361 2541 1360M2438 1394 2448 1393 2458 1394 2468 1398 2477 1398 2487 1397M2895 996 2893 1006 2897 1016 2896 1026 2897 1036 2899 1046 2898 1056M1830 1510 1826 1518 1820 1527 1818 1537 1810 1544 1808 1554 1803 1563 1798 1572M2155 1492 2165 1496 2173 1503 2182 1508 2192 1512M2044 1522 2046 1532 2054 1539 2060 1547 2062 1557 2067 1566 2069 1576 2075 1585M2795 1465 2789 1472 2781 1477 2776 1485 2768 1490 2760 1495 2756 1505 2747 1509M2355 1457 2364 1458 2374 1458 2383 1460 2391 1466 2400 1469 2409 1466 2418 1471M2188 2020 2196 2014 2207 2013 2214 2006 2225 2006 2232 1998 2242 1997 2250 1992M2664 1604 2658 1612 2658 1623 2653 1632M2321 1507 2332 1509 2342 1510 2353 1511M1606 2143 1598 2148 1594 2158 1589 2166 1584 2174 1576 2180 1570 2187M2898 1056 2901 1065 2908 1071 2914 1078 2919 1086 2922 1095M2778 1108 2775 1118 2772 1129 2770 1140 2767 1151M2129 2080 2139 2081 2147 2073 2157 2076 2166 2073 2175 2071 2185 2071 2193 2066 2202 2065M2042 1602 2049 1610 2054 1620 2061 1628 2069 1635M2981 2052 2977 2060 2970 2066 2964 2073 2961 2082 2953 2087 2948 2095 2942 2102 2938 2110M2261 1572 2269 1580 2279 1585 2289 1590 2297 1598M2920 2113 2919 2122 2921 2131 2920 2140 2922 2149 2919 2159 2924 2168 2920 2177 2922 2186M1828 1228 1830 1237 1830 1246 1838 1254 1835 1264 1841 1272 1842 1281 1844 1290 1847 1298M2217 1674 2226 1674 2235 1672 2245 1673 2254 1673 2263 1672M2263 1672 2272 1667 2281 1662 2291 1659 2299 1654 2310 1653 2318 1647M2709 1248 2709 1258 2710 1267 2714 1276 2717 1285 2715 1296 2718 1305M2075 2176 2085 2177 2094 2179 2104 2178 2114 2177 2124 2178 2134 2180 2144 2179M3249 1712 3259 1708 3269 1707 3278 1703 3287 1699 3297 1696M1742 1332 1743 1341 1743 1351 1746 1360 1744 1370 1747 1380 1748 1389M1599 1846 1591 1852 1583 1858 1573 1862 1566 1869 1558 1877 1549 1882M1549 1882 1551 1892 1556 1900 1561 1908 1566 1917 1567 1926 1572 1935 1573 1945M1910 1773 1916 1780 1923 1786 1928 1794 1937 1799 1943 1805 1949 1813M2617 1366 2612 1375 2607 1383 2599 1390 2595 1399M3496 1872 3490 1881 3486 1890 3484 1900 3480 1910 3480 1921 3474 1929M2413 1908 2420 1916 2421 1928 2428 1937 2433 1947M3446 1962 3446 1972 3439 1980 3440 1990 3437 1999 3437 2009 3432 2018 3431 2028M2444 1012 2437 1020 2427 1024 2418 1027 2409 1033 2401 1038 2394 1046M2267 1554 2257 1557 2248 1560 2239 1564 2230 1570 2221 1572M3231 1031 3237 1039 3238 1049 3238 1059 3242 1068 3249 1076 3251 1085 3257 1094 3259 1103 3261 1113M2747 1509 2754 1516 2761 1523 2767 1531 2776 1536M2630 1052 2636 1061 2636 1073 2644 1081 2648 1091 2651 1102M2965 1011 2974 1009 2983 1010 2992 1015 3001 1015 3010 1009 3019 1014 3028 1013M2846 1028 2853 1035 2864 1036 2873 1040 2882 1045 2890 1050 2898 1056M3382 2090 3377 2100 3373 2110 3371 2122M2243 1186 2236 1192 2231 1200 2230 1210 2225 1218 2219 1225 2216 1234 2214 1243 2207 1250M2565 1119 2572 1125 2575 1134 2585 1139 2589 1147 2595 1155 2599 1164 2606 1170M3502 1577 3498 1586 3500 1596 3496 1605 3497 1615 3494 1624 3495 1634 3490 1643 3489 1653M2898 1056 2908 1058 2918 1056 2928 1055 2938 1057M2778 1108 2788 1108 2798 1108 2809 1108 2819 1106 2829 1110 2840 1107M2396 1670 2400 1679 2404 1689 2410 1697 2415 1706 2420 1715 2422 1725M3420 1649 3420 1659 3426 1668 3424 1678 3428 1687 3429 1697 3431 1706M2920 2113 2938 2110M2185 1296 2183 1304 2180 1314 2173 1320 2172 1330 2168 1339 2162 1346M2615 1719 2624 1721 2634 1718 2642 1722 2651 1722 2660 1721 2669 1725 2678 1727 2687 1726M1798 1292 1808 1292 1817 1297 1827 1297 1837 1300 1847 1298M1907 1902 1898 1906 1888 1909 1879 1914 1869 1914 1860 1920 1851 1925 1841 1927M2064 1400 2067 1410 2071 1419 2077 1427 2083 1436 2084 1446 2089 1455 2094 1464M2542 1766 2551 1762 2561 1760 2571 1762 2580 1755 2589 1754 2599 1753M3026 1358 3031 1368 3032 1378 3029 1390 3036 1400 3036 1411M2653 1285 2662 1286 2671 1291 2680 1295 2689 1298 2699 1301 2708 1304 2718 1305M1958 1897 1952 1907 1944 1913 1937 1920 1931 1929 1922 1935M1549 1882 1558 1886 1569 1887 1579 1887 1589 1888 1598 1892 1607 1895M2044 1482 2046 1492 2044 1502 2045 1512 2044 1522M2505 1834 2516 1833 2527 1832 2538 1831 2549 1832M2969 1402 2962 1408 2961 1418 2956 1426 2953 1434 2946 1441 2941 1449 2937 1457M2617 1366 2627 1364 2637 1364 2647 1366 2657 1364M1979 1529 1979 1539 1979 1549 1979 1559 1983 1569 1979 1579 1983 1589M3446 1962 3451 1952 3462 1947 3466 1937 3474 1929M3273 1525 3278 1533 3280 1543 3287 1550 3292 1559 3294 1569 3299 1577 3302 1586 3305 1596M1983 1589 1983 1598 1987 1606 1983 1616 1984 1625 1985 1634 1988 1643M2098 1109 2096 1118 2092 1127 2089 1137 2090 1147 2090 1157 2086 1166 2081 1175 2081 1185M1549 1728 1551 1737 1555 1747 1556 1757 1557 1767 1562 1776 1562 1786 1566 1795 1564 1806 1567 1815M2035 2063 2041 2071 2049 2079 2056 2086 2065 2092 2071 2100 2077 2108M1893 1644 1898 1654 1897 1665 1904 1674 1906 1684 1908 1695M2630 1052 2639 1049 2649 1053 2658 1047 2667 1046 2677 1046 2686 1043 2696 1047 2705 1044 2714 1042M1784 2148 1775 2154 1766 2160 1759 2167 1752 2175 1745 2183M3382 2090 3391 2087 3401 2085 3410 2080M1979 2119 1983 2129 1989 2138 1991 2148 1997 2157 2001 2167M1831 1712 1836 1722 1841 1731 1848 1739 1853 1748M3297 2108 3306 2109 3315 2114 3325 2112 3334 2114 3343 2119 3353 2117 3362 2121 3371 2122M2646 1248 2640 1257 2631 1264 2625 1273 2614 1276 2608 1286M1805 1791 1797 1798 1791 1805 1784 1812M3420 1649 3430 1652 3440 1648 3450 1652 3460 1651 3469 1653 3479 1650 3489 1653M3244 2181 3255 2183 3265 2185 3275 2188 3284 2195 3295 2196M2541 1360 2532 1363 2526 1370 2518 1375 2510 1380 2504 1388 2497 1394 2487 1397M1695 1911 1685 1915 1680 1925 1672 1931 1662 1936M3095 1287 3105 1289 3113 1293 3120 1303 3131 1302 3140 1307 3147 1314M2064 1400 2074 1401 2084 1399 2093 1396 2103 1393 2113 1395 2122 1393M1613 1969 1608 1978 1609 1989 1606 1999 1601 2008 1602 2018 1599 2028M2548 1013 2549 1022 2552 1031 2552 1040 2550 1049 2554 1058M3026 1358 3036 1358 3045 1362 3053 1370 3063 1370M1791 1492 1801 1497 1812 1498 1822 1503 1830 1510M2418 1471 2409 1476 2403 1483 2394 1487 2386 1493 2378 1497 2370 1503 2361 1506 2353 1511M2044 1482 2053 1476 2063 1474 2073 1470 2084 1469 2094 1464M2499 1056 2497 1067 2492 1075 2484 1082 2479 1091 2477 1101M2969 1402 2979 1406 2989 1403 2998 1405 3008 1405 3017 1408 3026 1410 3036 1411M2129 2080 2119 2082 2113 2092 2102 2092 2094 2098 2085 2103 2077 2108M1599 2028 1600 2039 1600 2051M1858 1044 1861 1053 1868 1060 1871 1068 1877 1075 1881 1083 1885 1092 1888 1100 1892 1109M3485 2010 3486 2020 3492 2028 3494 2038 3499 2047 3499 2057M2907 1458 2917 1458 2927 1459 2937 1457M1559 2086 1558 2095 1556 2105 1559 2115 1556 2124 1553 2134 1551 2143 1553 2153M3410 2080 3417 2088 3428 2091 3436 2097 3442 2107 3451 2111M2477 1101 2476 1111 2474 1121 2476 1131 2475 1141 2475 1151 2471 1161M2125 2137 2117 2141 2112 2149 2104 2154 2098 2161 2090 2166 2084 2172 2075 2176M1983 1589 1992 1592 2003 1591 2012 1598 2022 1600 2032 1602 2042 1602M3499 2057 3497 2067 3498 2076 3503 2086 3502 2096 3501 2105 3503 2115 3502 2125M2440 1189 2433 1196 2425 1202 2419 1210 2410 1214M2098 1109 2108 1107 2118 1107 2128 1105 2138 1100 2147 1096 2158 1096M2012 1189 2022 1188 2032 1190 2042 1187 2052 1186 2062 1188 2071 1186 2081 1185M2325 1313 2319 1322 2315 1331 2312 1342 2310 1352 2306 1362 2298 1370M1986 1226 1996 1227 2005 1230 2014 1234 2023 1241 2034 1240 2042 1246M2218 1793 2212 1800 2206 1807 2201 1815 2195 1822 2188 1829 2180 1834 2172 1839 2169 1848 2161 1854M1805 1791 1812 1786 1819 1779 1826 1774 1833 1767 1839 1760 1847 1755 1853 1748M2247 1359 2247 1369 2247 1378 2245 1387 2243 1396M1753 1832 1760 1827 1767 1820 1775 1815 1784 1812M2212 1422 2210 1432 2215 1440 2218 1450 2216 1459 2216 1468M2656 1794 2666 1790 2673 1781 2681 1775 2690 1769 2699 1764 2707 1758M3413 1835 3420 1840 3429 1844 3438 1847 3445 1852 3455 1853 3463 1858 3470 1864 3479 1867 3488 1868 3496 1872M1695 1911 1706 1913 1716 1908 1726 1906 1737 1907 1748 1907M2155 1492 2157 1501 2154 1510 2153 1519 2153 1528 2156 1537M2607 1832 2616 1830 2626 1830 2635 1824 2646 1827 2654 1819 2664 1818 2674 1819 2683 1816M2334 991 2340 997 2346 1004 2355 1008 2361 1015 2367 1022 2373 1028 2380 1034 2385 1042 2394 1046M1960 2027 1958 2036 1957 2045 1949 2052 1946 2061 1942 2069 1942 2079M1613 1969 1622 1966 1629 1957 1638 1953 1647 1949 1654 1941 1662 1936M2548 1013 2557 1009 2565 1002 2574 999 2584 997 2592 991 2601 987 2609 980 2619 978 2627 973M2216 1468 2214 1478 2207 1486 2203 1495 2197 1503 2192 1512M2071 1520 2069 1529 2072 1538 2070 1548 2071 1557 2073 1566 2072 1576 2075 1585M2237 1069 2247 1071 2256 1075 2264 1082 2274 1085 2284 1089 2294 1092 2304 1094M1552 2001 1560 2006 1568 2010 1576 2015 1583 2020 1591 2025 1599 2028M2898 1056 2889 1060 2884 1069 2878 1077 2871 1083 2862 1088 2856 1096 2849 1103 2840 1107M3212 1014 3220 1024 3231 1031M2156 1537 2151 1546 2145 1554 2138 1562 2132 1569 2128 1579 2121 1586M2042 1602 2037 1609 2030 1615 2025 1623 2021 1631M1599 2028 1609 2028 1619 2029 1629 2024 1639 2024 1649 2026 1659 2026M2938 1057 2931 1066 2932 1077 2928 1087 2922 1095M1860 2130 1857 2140 1851 2148 1842 2155 1839 2164 1835 2173 1829 2181M2075 1585 2071 1595 2070 1605 2073 1615 2071 1625 2069 1635M1942 2079 1939 2088 1935 2096 1927 2102 1923 2110 1919 2118 1915 2127M1915 2127 1917 2136 1913 2145 1911 2155 1911 2164 1912 2174 1909 2183 1910 2192M1559 2086 1567 2079 1576 2073 1582 2063 1592 2058 1600 2051M2535 2153 2527 2159 2516 2158 2508 2162 2499 2167 2490 2170 2484 2178 2473 2178 2466 2185 2455 2185 2447 2190M3075 1133 3084 1137 3091 1142 3097 1150 3105 1155 3115 1158 3122 1163M2021 1631 2022 1641 2025 1650 2025 1661 2029 1670 2031 1680 2035 1689 2034 1700 2036 1709M2071 1230 2079 1235 2085 1242 2092 1248 2101 1253 2104 1263 2112 1268 2119 1274 2126 1280M2709 1248 2700 1252 2692 1257 2685 1264 2678 1271 2668 1273 2662 1282 2653 1285M2440 1189 2447 1181 2456 1175 2462 1166 2471 1161M1944 1697 1950 1705 1953 1714 1956 1723 1954 1734 1961 1741 1965 1750 1965 1760M2043 1292 2048 1301 2048 1311 2052 1320 2055 1329 2063 1337 2063 1347 2069 1355M3451 2111 3461 2115 3472 2114 3482 2117 3492 2121 3502 2125M2357 1236 2366 1232 2374 1227 2383 1223 2393 1222 2402 1218 2410 1214M1910 1773 1906 1783 1903 1793 1898 1802 1896 1813M3351 2212 3361 2211 3370 2209 3380 2213 3389 2214 3398 2211 3408 2212M2325 1313 2336 1312 2346 1309 2355 1304 2366 1301M1843 1854 1841 1864 1837 1872M1780 1913 1788 1918 1797 1916 1806 1917 1814 1923 1823 1925 1833 1923 1841 1927M3241 1216 3250 1222 3261 1224 3272 1224 3281 1230 3291 1232 3300 1237M2021 1351 2027 1357 2034 1364 2039 1372 2044 1381 2050 1388 2058 1393 2064 1400M2657 1364 2647 1366 2640 1376 2630 1378 2622 1385 2612 1388 2604 1394 2595 1399M2247 1359 2258 1361 2268 1362 2278 1365 2288 1370 2298 1370M2487 1914 2481 1921 2471 1922 2462 1926 2455 1931 2447 1936 2441 1943 2433 1947M3193 1279 3203 1284 3213 1287 3223 1291 3232 1295 3241 1302M2212 1422 2222 1418 2227 1408 2234 1401 2243 1396M1837 1872 1835 1882 1841 1890 1837 1900 1843 1909 1841 1918 1841 1927M2651 978 2651 988 2655 997 2655 1006 2659 1015 2657 1025 2663 1034 2661 1044 2661 1053 2665 1062M2471 1538 2477 1546 2483 1553 2491 1559 2496 1568M2155 1492 2164 1487 2173 1486 2182 1484 2191 1481 2199 1475 2208 1474 2216 1468M2748 989 2745 998 2737 1003 2736 1013 2728 1019 2722 1026 2718 1034 2714 1042M2630 1052 2631 1063 2625 1073 2628 1084 2627 1094 2624 1104M2216 1468 2227 1466 2238 1468 2249 1468 2259 1470 2270 1470M2417 1598 2424 1605 2427 1614 2433 1621 2439 1627 2445 1635 2449 1643 2455 1650M1685 2073 1688 2082 1695 2089 1698 2099 1705 2106 1712 2113 1717 2121 1720 2131M2665 1062 2661 1072 2655 1081 2652 1091 2651 1102M2565 1119 2562 1128 2555 1136 2555 1147 2550 1155 2546 1165 2540 1173M1918 2060 1927 2065 1936 2070 1942 2079M2156 1537 2164 1530 2173 1524 2183 1518 2192 1512M2396 1670 2388 1676 2379 1682 2373 1690 2365 1697 2356 1702M1606 2143 1612 2151 1621 2155 1630 2161 1638 2166 1644 2175 1653 2180 1659 2188M2258 2152 2251 2158 2244 2163 2237 2169 2233 2178 2225 2183 2217 2188 2212 2195M1860 2130 1869 2127 1878 2127 1888 2131 1897 2129 1906 2126 1915 2127M2075 1585 2084 1588 2093 1588 2102 1584 2112 1585 2121 1586M2296 1713 2301 1722 2308 1728 2316 1734 2322 1742 2329 1748 2336 1755M2540 1173 2536 1182 2535 1192 2533 1202 2532 1212M1777 2186 1787 2186 1798 2182 1808 2181 1819 2180 1829 2181M3116 1223 3114 1233 3111 1242 3106 1250 3103 1259 3102 1269 3097 1278 3095 1287M2021 1631 2030 1633 2040 1632 2050 1635 2059 1634 2069 1635M2505 1210 2504 1220 2504 1230 2504 1240 2502 1250 2501 1260 2500 1271 2496 1280M2430 1308 2437 1317 2440 1328 2449 1336 2454 1345M2251 1852 2251 1863 2253 1874 2252 1885 2255 1896M1910 1773 1919 1772 1928 1769 1938 1768 1946 1763 1955 1761 1965 1760M2313 1423 2320 1428 2328 1433 2335 1439 2340 1448 2347 1453 2355 1457M3063 1370 3058 1379 3054 1387 3045 1393 3040 1401 3036 1411M2222 1892 2224 1902 2222 1911 2221 1921 2220 1931 2224 1940 2223 1950 2222 1960M1843 1854 1850 1847 1860 1844 1866 1836 1874 1832 1880 1824 1888 1818 1896 1813M2454 1345 2453 1356 2451 1366 2446 1375 2440 1384 2438 1394M2907 1458 2900 1465 2894 1472 2888 1480 2883 1489 2877 1496 2872 1505 2864 1511M1896 1813 1907 1812 1917 1815 1928 1815 1938 1812 1949 1813M2138 1931 2137 1941 2136 1951 2135 1960 2132 1970 2131 1980 2129 1989 2126 1998M2390 1423 2382 1429 2377 1438 2368 1442 2361 1449 2355 1457M2222 1960 2217 1968 2215 1978 2207 1985 2202 1993 2200 2003 2192 2010 2188 2020M1837 1872 1845 1878 1855 1878 1863 1885 1873 1885 1881 1890 1889 1896 1897 1900 1907 1902M2078 2005 2076 2015 2081 2024 2079 2034 2082 2044 2081 2054 2084 2064 2081 2073M2267 1554 2272 1563 2277 1572 2284 1581 2292 1588 2297 1598M2035 2063 2033 2073 2032 2083 2031 2094 2032 2104 2030 2114 2030 2124 2026 2134M2748 989 2759 985 2770 988 2780 981 2791 982M2937 1133 2940 1144 2946 1153 2952 1163M2630 1052 2639 1053 2647 1060 2656 1058 2665 1062M2417 1598 2426 1593 2435 1593 2444 1588 2452 1584 2461 1580 2470 1578 2480 1577 2487 1569 2496 1568M2081 2073 2077 2085 2081 2097 2077 2108M2665 1062 2675 1058 2685 1057 2695 1052 2705 1048 2714 1042M2883 1172 2888 1181 2896 1187 2902 1195 2908 1203 2916 1209M2161 1662 2168 1672 2175 1680 2185 1687M2396 1670 2406 1667 2416 1665 2425 1659 2434 1655 2444 1651 2455 1650M2026 2134 2018 2141 2012 2150 2008 2160 2001 2167M2624 1104 2637 1103 2651 1102M2865 1235 2864 1245 2857 1252 2856 1262 2850 1269 2851 1280 2847 1288 2843 1296M2105 1724 2110 1732 2116 1739 2118 1749 2126 1755 2132 1762 2135 1771M2455 1650 2465 1650 2475 1651 2485 1646 2495 1647 2505 1646M2296 1713 2306 1713 2316 1711 2326 1707 2336 1707 2346 1704 2356 1702M2207 1250 2215 1256 2225 1260 2232 1268 2239 1275 2249 1279M2952 1163 2947 1171 2939 1178 2936 1187 2929 1194 2923 1202 2916 1209M2540 1173 2549 1174 2559 1173 2568 1172 2578 1173 2587 1172 2596 1168 2606 1170M2768 1315 2778 1324 2787 1333M2034 1790 2043 1795 2047 1804 2054 1811 2062 1816M2656 1794 2646 1798 2640 1807 2632 1814 2624 1820 2615 1826 2607 1832M2356 1702 2366 1705 2374 1711 2385 1711 2394 1714 2403 1718 2412 1723 2422 1725M2265 1756 2275 1755 2285 1759 2295 1758 2306 1754 2316 1756 2326 1753 2336 1755M2843 1296 2844 1306 2846 1315 2845 1325 2842 1335 2843 1344M2505 1210 2518 1211 2532 1212M2707 1758 2705 1768 2696 1776 2694 1787 2689 1796 2688 1807 2683 1816M2607 1832 2599 1838 2590 1842 2585 1851 2574 1852 2569 1862 2561 1868 2552 1871 2545 1877M2336 1755 2344 1761 2348 1770 2358 1772 2363 1780 2370 1786M2430 1308 2437 1304 2447 1303 2454 1297 2463 1296 2471 1290 2480 1289 2487 1283 2496 1280M1907 1902 1914 1907 1920 1914 1928 1919 1933 1928 1941 1932 1949 1937 1955 1945M2251 1852 2261 1852 2270 1849 2279 1849 2288 1847 2298 1846 2307 1844 2316 1840M2496 1280 2507 1278 2516 1272 2527 1269 2538 1269M2741 1430 2739 1440 2735 1448 2730 1457 2726 1465 2721 1473 2718 1483 2711 1490M2791 982 2797 991 2806 997 2816 1000 2823 1008 2830 1016 2840 1020 2846 1028M2222 1892 2233 1892 2244 1895 2255 1896M1599 2028 1594 2036 1586 2044 1584 2054 1579 2063 1571 2070 1563 2076 1559 2086M2255 1896 2265 1893 2276 1894 2287 1891 2296 1887M2711 1490 2720 1495 2729 1500 2739 1503 2747 1509M2390 1423 2399 1420 2405 1412 2415 1411 2423 1405 2430 1399 2438 1394M2844 986 2841 997 2847 1007 2845 1018 2846 1028M2222 1960 2230 1954 2238 1948M2078 2005 2088 2006 2097 2000 2106 2001 2116 1998 2126 1998M3025 1031 3034 1036 3046 1035 3054 1043 3065 1042 3074 1046 3084 1050M2682 1551 2680 1560 2678 1569 2674 1578 2669 1586 2670 1596 2664 1604M2298 1449 2308 1449 2317 1451 2327 1453 2336 1457 2345 1458 2355 1457M3410 2080 3414 2089 3423 2094 3427 2102 3429 2111 3434 2119 3440 2126 3447 2133 3451 2141 3456 2149 3464 2154 3470 2161 3473 2170M2538 1613 2544 1621 2551 1629 2555 1637 2558 1647 2563 1655 2570 1662 2574 1671M1808 2072 1815 2079 1821 2086 1829 2093 1834 2101 1840 2108 1844 2118 1852 2124 1860 2130M2807 1053 2804 1063 2795 1070 2792 1080 2786 1088 2783 1099 2778 1108M2740 1101 2745 1109 2749 1118 2752 1127 2757 1135 2761 1144 2767 1151M2126 1998 2135 2000 2144 2004 2153 2006 2161 2013 2170 2015 2179 2018 2188 2020M2035 2063 2044 2066 2053 2068 2063 2069 2073 2069 2081 2073M2505 1646 2500 1654 2502 1665 2494 1672 2494 1682 2492 1691 2488 1699M2081 2073 2091 2078 2101 2073 2110 2080 2119 2080 2129 2080M1979 2119 1988 2122 1998 2125 2007 2129 2017 2131 2026 2134M2574 1671 2568 1679 2557 1681 2550 1687 2544 1695 2537 1702 2529 1707M2422 1725 2422 1737 2424 1748 2425 1760M2026 2134 2036 2132 2044 2127 2051 2121 2060 2117 2068 2111 2077 2108M1910 2192 1920 2189 1930 2190 1939 2183 1950 2183 1960 2184 1970 2180M2865 1235 2872 1229 2883 1228 2890 1222 2900 1220 2907 1212 2916 1209M1970 2180 1979 2173 1990 2170 2001 2167M2916 1209 2926 1212 2935 1218 2944 1223 2955 1222 2964 1228 2973 1232M3241 1302 3237 1312 3226 1317 3222 1326 3215 1334M2843 1296 2853 1297 2863 1297 2872 1300 2881 1305 2891 1304 2901 1308M2541 1360 2547 1368 2557 1371 2564 1378 2572 1383 2581 1386 2589 1391 2595 1399M2787 1333 2796 1334 2805 1338 2815 1339 2824 1340 2834 1344 2843 1344M3113 1424 3107 1432 3099 1438 3091 1444 3084 1451 3076 1457M2741 1430 2749 1424 2758 1421 2768 1417 2777 1414 2787 1412 2796 1407 2806 1406M2188 2020 2196 2025 2200 2034 2209 2039 2212 2048 2221 2052 2226 2060 2235 2064 2240 2073M3212 1014 3208 1024 3209 1034 3209 1044 3203 1053 3205 1063M2806 1406 2816 1410 2826 1412 2837 1411 2846 1415M2680 1466 2689 1471 2694 1480 2705 1482 2711 1490M3272 995 3267 1003 3258 1006 3253 1014 3246 1020 3238 1025 3231 1031M2891 2029 2882 2031 2873 2035 2864 2037 2856 2043 2848 2046 2839 2049M3145 1045 3148 1053 3149 1063 3149 1072 3155 1080 3155 1089 3156 1098M2632 1530 2640 1533 2647 1540 2658 1538 2665 1544 2675 1545 2682 1551M2844 986 2854 991 2865 988 2875 993 2885 996 2895 996M3075 1133 3079 1143 3081 1154 3082 1165M2938 1613 2932 1621 2923 1624 2916 1631 2906 1634 2901 1644 2892 1648M2892 1648 2892 1657 2894 1666 2898 1674 2900 1683 2903 1691 2905 1700M2538 1613 2547 1609 2557 1604 2567 1602 2577 1602 2587 1598 2596 1594M2807 1053 2814 1046 2824 1046 2831 1039 2839 1035 2846 1028M3012 1179 3017 1187 3019 1197 3024 1205 3029 1213M2369 2108 2379 2111 2387 2114 2394 2121 2403 2124 2412 2128 2420 2132 2428 2137 2436 2142M2263 1672 2270 1679 2278 1687 2283 1696 2290 1704 2296 1713M2596 1594 2606 1597 2616 1596 2625 1598 2635 1601 2644 1604 2654 1603 2664 1604M2844 1727 2841 1736 2843 1745 2843 1755 2842 1764 2844 1773 2845 1782M2973 1232 2976 1242 2975 1253 2976 1263 2976 1273 2978 1284 2976 1294M2318 1647 2325 1654 2327 1664 2335 1670 2341 1677 2345 1686 2351 1694 2356 1702M2318 2187 2328 2185 2338 2182 2347 2178 2357 2175 2366 2169M2574 1671 2587 1669 2600 1672M1602 1369 1595 1375 1592 1385 1587 1393 1577 1397 1571 1405 1567 1413M2488 1699 2499 1700 2509 1702 2520 1703 2529 1707M1745 2183 1754 2184 1764 2181 1773 2184 1782 2180 1792 2180 1801 2183 1810 2181 1820 2182 1829 2181M2976 1294 2973 1305 2971 1316 2966 1326 2964 1336M2218 1793 2223 1801 2228 1809 2235 1817 2239 1825 2244 1834 2246 1844 2251 1852M2161 1854 2171 1858 2178 1866 2186 1873 2195 1877 2204 1882 2214 1885 2222 1892M2366 1808 2376 1811 2382 1820 2393 1821 2401 1827 2409 1832 2417 1838 2426 1843M2846 1415 2845 1425 2845 1435 2842 1444 2838 1453 2837 1463 2838 1473M1770 1928 1766 1936 1765 1946 1765 1956 1757 1964 1759 1975 1755 1983 1751 1992M2665 1062 2658 1069 2649 1075 2643 1082 2636 1089 2632 1099 2624 1104M2965 1011 2974 1012 2983 1015 2990 1022 2998 1025 3009 1022 3016 1030 3025 1031M2604 2012 2604 2022 2600 2031 2598 2041 2601 2051 2597 2061 2595 2070M3212 1014 3221 1013 3229 1009 3237 1004 3247 1006 3255 999 3263 996 3272 995M3418 1515 3412 1523 3406 1530 3399 1536 3393 1543 3385 1550 3379 1557 3372 1564 3368 1572M2328 1974 2336 1966 2338 1954 2342 1945 2348 1935 2355 1927M2530 2069 2531 2079 2533 2088 2532 2097 2530 2107 2534 2116 2536 2125 2536 2134 2536 2144 2535 2153M3272 995 3282 990 3293 989 3302 983 3312 980 3322 978M3145 1045 3155 1047 3165 1051 3174 1055 3185 1055 3195 1059 3205 1063M2776 1536 2776 1547 2782 1556 2784 1566 2787 1576M2840 1107 2847 1114 2851 1123 2855 1132 2860 1141 2864 1149 2872 1156 2879 1163 2883 1172M2250 1992 2260 1992 2269 1994 2278 1997 2286 2002 2295 2005 2303 2008M3205 1063 3213 1057 3216 1046 3225 1039 3231 1031M3442 1166 3439 1174 3436 1183 3432 1191 3433 1201 3428 1209 3425 1218 3423 1227M2356 1702 2353 1711 2347 1719 2347 1729 2344 1738 2340 1747 2336 1755M2731 1605 2732 1614 2734 1623 2733 1632 2737 1641M2892 1648 2900 1652 2909 1654 2918 1654 2927 1656 2936 1658 2945 1660 2953 1663M2202 2065 2211 2068 2221 2068 2230 2073 2240 2073M3156 1098 3164 1104 3173 1108 3183 1111 3190 1117 3199 1122 3206 1128M2866 1189 2874 1192 2884 1193 2891 1200 2900 1201 2908 1205 2916 1209M1664 1772 1670 1778 1673 1788 1680 1793 1687 1800 1690 1809M3082 1165 3092 1167 3102 1164 3112 1165 3122 1163M2973 1232 2982 1227 2992 1225 3001 1221 3010 1218 3019 1214 3029 1213M3115 2198 3125 2197 3135 2194 3145 2192 3156 2195 3166 2194 3175 2188 3186 2189M2793 1248 2802 1253 2806 1263 2814 1269 2820 1276 2829 1282 2836 1289 2843 1296M2505 1834 2512 1841 2519 1848 2527 1854 2531 1863 2538 1870 2545 1877M2617 1366 2626 1368 2635 1372 2644 1377 2652 1382 2662 1383 2672 1385 2681 1389M3317 1354 3316 1364 3308 1373 3307 1383 3304 1393 3299 1402 3298 1413M2976 1294 2986 1296 2997 1297 3008 1301 3018 1302M2801 1815 2810 1821 2820 1823 2827 1831 2838 1833 2846 1839 2856 1843 2865 1847M3255 1409 3248 1417 3243 1426 3240 1435 3238 1445 3231 1453M2912 1360 2920 1354 2930 1352 2937 1346 2947 1345 2955 1340 2964 1336M2487 1914 2496 1916 2502 1924 2510 1930 2518 1934 2526 1938 2535 1941 2543 1947M2736 1884 2746 1885 2756 1887 2766 1888 2776 1891M2846 1415 2855 1418 2864 1419 2873 1423 2881 1428 2890 1431 2899 1432 2908 1434M3322 978 3321 988 3325 997 3324 1007 3319 1016 3320 1026 3322 1036 3318 1045 3322 1055 3323 1065 3320 1074M2654 1945 2663 1947 2672 1948 2680 1952 2690 1951 2698 1955 2707 1957M3148 1542 3145 1552 3140 1560 3139 1571 3136 1580 3133 1589 3129 1598 3123 1607M2795 1465 2806 1465 2816 1469 2827 1469 2838 1473M3386 995 3383 1005 3379 1015 3371 1022 3367 1031 3363 1041 3359 1050M2604 2012 2614 2012 2624 2015 2633 2016 2643 2012 2653 2016 2663 2013 2672 2016M3382 2090 3390 2093 3398 2097 3407 2099 3417 2099 3424 2106 3434 2106 3443 2106 3451 2111M2308 2081 2317 2084 2326 2087 2333 2095 2343 2097 2352 2099 2360 2106 2369 2108M3320 1074 3315 1085 3306 1093 3302 1104M2258 2152 2267 2157 2274 2163 2283 2168 2293 2170 2301 2176 2308 2183 2318 2187M3261 1113 3264 1123 3262 1134 3265 1145 3263 1155 3264 1166M3442 1166 3452 1169 3462 1170 3472 1174 3482 1172 3492 1176 3502 1178M2272 1240 2266 1247 2261 1254 2259 1263 2256 1272 2249 1279M2731 1605 2741 1601 2750 1596 2760 1593 2768 1585 2779 1583 2787 1576M1622 2182 1631 2181 1641 2183 1650 2187 1659 2188M2064 1779 2062 1788 2062 1797 2066 1807 2062 1816M1721 1698 1731 1699 1740 1694 1749 1696 1758 1691 1767 1690 1777 1693 1786 1689 1795 1688 1804 1687M2185 1296 2190 1305 2196 1313 2196 1324 2202 1333M3095 1287 3103 1291 3110 1298 3114 1309 3125 1311 3131 1318 3135 1329 3144 1333M2017 1851 2019 1861 2017 1871 2015 1882 2012 1892 2015 1903 2014 1913M2473 2210 2483 2210 2491 2206 2501 2207 2509 2202 2518 2202 2527 2199 2536 2198 2545 2196 2555 2196M1958 1897 1959 1907 1957 1917 1956 1926 1958 1936 1955 1945M3387 1279 3396 1279 3406 1278 3415 1280M3317 1354 3327 1351 3337 1355 3347 1352 3357 1351 3367 1352 3378 1349M1543 994 1546 1003 1544 1013 1545 1022 1547 1032 1548 1041 1545 1051 1545 1060 1545 1069 1547 1079 1549 1088 1549 1097 1546 1107 1549 1116M2839 1884 2842 1894 2838 1905 2842 1914 2841 1924 2845 1934 2847 1944 2845 1954M1778 979 1779 990 1785 1000 1788 1010 1793 1019 1795 1030M2844 986 2837 993 2837 1004 2830 1011 2824 1019 2823 1029 2816 1036 2814 1046 2807 1053M3255 1409 3265 1412 3276 1413 3287 1413 3298 1413M3504 1015 3507 1025 3502 1034 3504 1043 3505 1053 3502 1062 3502 1071 3500 1081 3502 1090M2763 1971 2768 1979 2776 1986 2776 1997 2781 2005 2787 2012 2794 2019 2798 2028M3190 1455 3201 1454 3211 1452 3221 1454 3231 1453M3095 1015 3102 1022 3111 1026 3121 1028 3129 1033 3136 1041 3145 1045M1983 1589 1988 1596 1997 1601 2000 1612 2006 1619 2013 1625 2021 1631M3322 978 3331 981 3341 980 3350 983 3358 990 3367 992 3377 992 3386 995M1871 2086 1870 2095 1866 2104 1862 2112 1862 2121 1860 2130M3148 1542 3156 1540 3166 1541 3174 1537 3183 1535 3192 1533 3201 1532 3211 1534M3386 995 3393 988 3401 981 3412 978 3419 971M1784 2148 1781 2157 1777 2166 1777 2176 1777 2186M3320 1074 3327 1068 3337 1066 3344 1061 3350 1052 3359 1050M2646 1248 2649 1257 2650 1266 2654 1275 2653 1285M2529 1707 2530 1717 2526 1726 2525 1736 2523 1745 2523 1755 2521 1764 2518 1773 2514 1782 2513 1792M3261 1113 3271 1109 3282 1109 3291 1104 3302 1104M2425 1760 2419 1767 2411 1773 2403 1777 2398 1786 2389 1790 2380 1795 2373 1801 2366 1808M2163 1689 2174 1691 2185 1687M3059 1641 3068 1638 3078 1641 3087 1640 3096 1637 3105 1633 3114 1632 3123 1631 3132 1631M2272 1240 2281 1240 2290 1240 2300 1237 2309 1234 2318 1234 2327 1235M1536 1291 1539 1301 1544 1309 1546 1318 1551 1327 1555 1336 1560 1344 1561 1354 1567 1362 1572 1371M2064 1779 2074 1780 2084 1778 2094 1773 2104 1776 2114 1773 2125 1775 2135 1771M2541 1360 2541 1369 2545 1378 2546 1387 2548 1396 2553 1405 2552 1415M3473 1301 3471 1311 3472 1322 3471 1332 3472 1342 3470 1352 3468 1362M2017 1851 2023 1843 2031 1838 2040 1833 2049 1830 2055 1821 2062 1816M2487 1397 2489 1406 2489 1416 2495 1425 2494 1435 2497 1444 2500 1454 2501 1463 2502 1473M2976 1747 2983 1754 2988 1761 2990 1771 3000 1776 3002 1787 3009 1793M1958 1897 1968 1898 1976 1903 1986 1905 1996 1905 2004 1911 2014 1913M2418 1471 2417 1481 2421 1490 2419 1499 2418 1509M2887 1819 2897 1821 2906 1813 2916 1813 2927 1813 2937 1810 2947 1809M3349 1411 3347 1421 3350 1430 3352 1439 3350 1448M1922 1935 1933 1938 1944 1941 1955 1945M1543 994 1553 997 1560 1004 1568 1009 1577 1013 1586 1017 1592 1026 1601 1031 1610 1035M2839 1884 2848 1885 2855 1893 2865 1893 2874 1897 2883 1898 2893 1900 2900 1906 2909 1909M1748 1030 1758 1028 1767 1030 1776 1030 1786 1031 1795 1030M2554 1058 2556 1068 2557 1078 2558 1088 2560 1099 2562 1109 2565 1119M2125 2137 2128 2146 2134 2153 2137 2162 2143 2169 2144 2179M1685 1089 1695 1093 1702 1099 1709 1107 1717 1113 1726 1117 1734 1123M1871 2086 1878 2081 1887 2078 1896 2076 1903 2069 1912 2067 1918 2060M3082 1165 3073 1170 3067 1179 3058 1184 3052 1193 3043 1198 3035 1204 3029 1213M3451 2111 3453 2120 3460 2127 3463 2136 3465 2144 3468 2153 3469 2162 3473 2170M2186 2143 2179 2148 2174 2157 2165 2160 2160 2169 2153 2174 2144 2179M2255 1703 2259 1713 2260 1724 2261 1735 2264 1745 2265 1756M2845 1782 2836 1786 2830 1792 2823 1799 2814 1802 2810 1811 2801 1815M1745 2183 1755 2185 1766 2183 1777 2186M2646 1248 2655 1246 2664 1247 2673 1245 2682 1251 2691 1246 2700 1249 2709 1248M2218 1793 2220 1806 2222 1818M1614 1241 1623 1240 1632 1243 1641 1244 1650 1241 1659 1239 1669 1241M3018 1302 3011 1308 3004 1314 2995 1316 2988 1322 2980 1327 2973 1333 2964 1336M2608 1286 2619 1284 2630 1283 2641 1284 2653 1285M2161 1854 2160 1864 2154 1872 2149 1881 2147 1890 2144 1899 2142 1908M2080 1889 2079 1900 2080 1909 2084 1919 2084 1929 2087 1938 2086 1948 2088 1958M2487 1397 2497 1399 2505 1403 2516 1402 2524 1408 2534 1409 2543 1410 2552 1415M2024 1947 2029 1957 2030 1969 2035 1979 2039 1989M2707 1957 2701 1965 2695 1973 2690 1981 2687 1991 2681 1999 2676 2007 2672 2016M2965 1011 2962 1022 2956 1031 2946 1038 2941 1047 2938 1057M3420 1336 3430 1341 3440 1345 3449 1352 3459 1356 3468 1362M3255 1911 3265 1912 3275 1909 3285 1907 3294 1902 3304 1904 3314 1902M2088 1958 2087 1968 2087 1977 2083 1987 2081 1996 2078 2005M2530 2069 2527 2079 2524 2089 2520 2098 2514 2106 2512 2116M2156 1537 2165 1540 2172 1545 2180 1550 2188 1555 2197 1558 2204 1565 2214 1565 2221 1572M2938 1057 2935 1067 2941 1076 2940 1086 2936 1095 2940 1105 2938 1114 2940 1124 2937 1133M2418 1509 2428 1512 2436 1519 2444 1525 2455 1526 2462 1534 2471 1538M3011 1540 3019 1546 3024 1555 3030 1563 3040 1567 3044 1576 3052 1582 3058 1589M1942 2079 1950 2084 1956 2090 1959 2100 1966 2107 1973 2113 1979 2119M2554 1058 2563 1056 2573 1056 2582 1057 2592 1056 2601 1055 2611 1057 2621 1054 2630 1052M2125 2137 2135 2139 2146 2137 2156 2139 2166 2138 2176 2140 2186 2143M2363 1569 2372 1575 2382 1578 2389 1585 2398 1590 2409 1592 2417 1598M2615 1719 2610 1727 2610 1737 2603 1744 2599 1753M2866 1189 2866 1198 2868 1207 2864 1217 2867 1226 2865 1235M2793 1248 2792 1258 2784 1266 2782 1276 2778 1286 2776 1296 2772 1305 2768 1315M2255 1703 2266 1703 2275 1707 2285 1710 2296 1713M2549 1832 2546 1843 2547 1855 2546 1866 2545 1877M2218 1793 2226 1786 2233 1780 2240 1772 2248 1766 2255 1760 2265 1756M2657 1364 2663 1374 2675 1379 2681 1389M2487 1914 2493 1921 2494 1931 2496 1941 2501 1949 2506 1958 2511 1966M2161 1854 2169 1848 2179 1845 2189 1841 2197 1835 2205 1830 2213 1822 2222 1818M2433 1947 2433 1957 2434 1967 2442 1976 2443 1986 2443 1997M2080 1889 2088 1894 2097 1897 2107 1897 2116 1901 2125 1902 2133 1907 2142 1908M2681 1389 2679 1398 2678 1408 2679 1418 2680 1428 2680 1437 2679 1447 2681 1457 2680 1466M2547 1478 2555 1487 2558 1498 2566 1506 2570 1517M2511 1966 2509 1976 2504 1985 2502 1995 2500 2005 2500 2016M2748 989 2756 995 2760 1005 2770 1008 2774 1018 2780 1026 2787 1032 2793 1040 2802 1044 2807 1053M2024 1947 2034 1947 2042 1952 2052 1952 2061 1951 2070 1953 2079 1956 2088 1958M1678 971 1687 975 1692 984 1699 989 1706 996 1711 1003 1720 1007 1728 1012 1736 1016 1740 1026 1748 1030M2600 1469 2603 1479 2610 1486 2615 1495 2616 1505 2623 1513 2627 1522 2632 1530M2088 1958 2096 1953 2103 1947 2112 1943 2121 1939 2129 1934 2138 1931M2308 2081 2313 2089 2317 2097 2316 2108 2322 2115 2327 2123 2328 2133 2333 2141M3320 1074 3312 1081 3302 1083 3294 1089 3288 1098 3279 1103 3269 1106 3261 1113M3123 1607 3115 1610 3107 1615 3099 1620 3090 1622 3083 1628 3074 1631 3068 1639 3059 1641M2360 2065 2360 2076 2362 2087 2366 2098 2369 2108M2039 1989 2048 1996 2058 1998 2068 2000 2078 2005M2258 2152 2259 2162 2259 2172 2261 2182 2266 2191 2266 2201M2496 1568 2495 1578 2499 1587 2502 1597 2503 1607 2503 1617 2502 1627 2506 1636 2505 1646M2455 1650 2460 1659 2464 1668 2473 1674 2477 1683 2481 1692 2488 1699M2333 2141 2332 2151 2327 2159 2321 2168 2320 2177 2318 2187M2922 1095 2927 1104 2931 1113 2932 1124 2937 1133M3026 1730 3017 1736 3006 1736 2996 1742 2986 1745 2976 1747M2505 1210 2510 1218 2515 1226 2522 1234 2525 1243 2530 1251 2535 1259 2538 1269M2866 1189 2874 1180 2883 1172M2336 1755 2342 1764 2344 1774 2353 1780 2357 1790 2361 1799 2366 1808M2793 1248 2802 1244 2811 1247 2820 1244 2829 1243 2838 1240 2847 1238 2856 1237 2865 1235M2251 1852 2258 1859 2266 1864 2272 1871 2280 1877 2288 1883 2296 1887M3009 1793 3000 1795 2991 1797 2983 1801 2974 1803 2964 1803 2955 1805 2947 1809M1729 1219 1737 1225 1746 1228 1757 1226 1765 1231 1774 1235 1782 1238 1791 1241M2599 1753 2606 1761 2614 1767 2623 1772 2632 1776 2641 1781 2649 1787 2656 1794M2718 1305 2728 1309 2738 1311 2749 1309 2758 1314 2768 1315M2370 1786 2371 1797 2366 1808M2222 1892 2227 1901 2228 1910 2229 1920 2231 1930 2237 1938 2238 1948M2549 1832 2559 1834 2568 1833 2578 1832 2587 1834 2597 1832 2607 1832M2454 1345 2461 1353 2468 1361 2472 1370 2475 1380 2480 1390 2487 1397M1778 979 1771 986 1768 996 1763 1004 1760 1014 1754 1022 1748 1030M3036 1411 3034 1421 3033 1432 3034 1443 3033 1454M2909 1909 2901 1914 2893 1920 2886 1927 2877 1932 2868 1935 2861 1943 2852 1947 2845 1954M2763 1971 2753 1975 2745 1983 2732 1982 2724 1989M2487 1914 2493 1906 2504 1904 2513 1900 2521 1894 2529 1888 2536 1881 2545 1877M2390 1423 2393 1432 2401 1438 2402 1448 2407 1456 2413 1463 2418 1471M2937 1457 2940 1467 2942 1477 2938 1487 2942 1496 2944 1506 2944 1516 2943 1526M2222 1960 2229 1968 2238 1974 2243 1984 2250 1992M3095 1015 3089 1023 3088 1033 3089 1042 3084 1050M2681 1389 2688 1395 2695 1401 2702 1406 2710 1410 2718 1415 2725 1421 2734 1424 2741 1430M2892 1548 2901 1556 2909 1564 2917 1572M2547 1478 2557 1475 2568 1475 2579 1471 2590 1473 2600 1469M3144 976 3146 986 3146 996 3142 1005 3142 1015 3142 1025 3142 1035 3145 1045M2511 1966 2518 1961 2528 1958 2536 1953 2543 1947M2748 989 2758 987 2767 991 2777 985 2787 989 2796 990 2806 988 2815 990 2825 985 2834 987 2844 986M2378 1998 2387 1995 2397 1999 2406 2000 2415 1997 2425 2000 2434 1994 2443 1997M2728 2091 2721 2097 2711 2096 2703 2100 2695 2104 2687 2108 2679 2113M2443 1997 2452 2001 2462 2003 2472 2006 2481 2011 2491 2012 2500 2016M2308 2081 2316 2077 2325 2074 2335 2076 2343 2071 2351 2066 2360 2065M2917 1572 2917 1583 2909 1590 2907 1600 2902 1609 2904 1620 2895 1628 2893 1637 2892 1648M2570 1517 2579 1517 2588 1518 2596 1524 2605 1524 2614 1525 2623 1527 2632 1530M2786 1658 2788 1667 2792 1676 2792 1686 2790 1696 2792 1706 2794 1715 2797 1725M2026 2134 2031 2142 2039 2147 2047 2151 2054 2158 2062 2163 2068 2170 2075 2176M3037 1135 3031 1143 3029 1153 3025 1163 3015 1169 3012 1179M2360 2065 2370 2068 2380 2068 2390 2066 2400 2068 2409 2066 2419 2066M1614 1241 1607 1247 1597 1250 1589 1254 1583 1262 1576 1268 1567 1271 1561 1279 1552 1283 1544 1287 1536 1291M2822 1663 2823 1672 2827 1682 2833 1690 2836 1699 2837 1709 2842 1717 2844 1727M2496 1568 2502 1577 2511 1582 2519 1589 2526 1597 2532 1605 2538 1613M2715 1693 2714 1703 2712 1712 2711 1721 2712 1730 2710 1739 2707 1748 2707 1758M2333 2141 2339 2133 2347 2127 2356 2123 2362 2115 2369 2108M1669 1241 1662 1248 1657 1256 1651 1263 1648 1273 1641 1280 1636 1287M2212 2195 2221 2195 2230 2197 2238 2201 2247 2200 2257 2199 2266 2201M2797 1725 2790 1730 2783 1737 2778 1745 2771 1751M2656 1794 2664 1803 2675 1808 2683 1816M2266 2201 2275 2201 2284 2199 2291 2193 2300 2189 2308 2187 2318 2187M2901 1308 2905 1317 2908 1328 2907 1339 2909 1350 2912 1360M2741 1430 2750 1433 2758 1438 2765 1443 2773 1448 2780 1454 2789 1458 2795 1465M3468 1362 3461 1369 3459 1379 3454 1386 3446 1393 3441 1400 3436 1409M2370 1786 2378 1779 2387 1775 2398 1774 2407 1770 2415 1763 2425 1760M2612 1909 2612 1919 2609 1929 2611 1939 2614 1949 2612 1959 2613 1969M1543 994 1544 1003 1542 1012 1541 1021 1541 1030 1541 1039 1536 1048 1536 1057 1536 1066M3036 1411 3045 1414 3054 1416 3064 1417 3074 1418 3083 1422M2665 1908 2660 1917 2658 1926 2656 1936 2654 1945M3504 1015 3499 1026 3488 1033 3481 1043M2613 1969 2611 1980 2610 1991 2604 2001 2604 2012M2500 2016 2497 2024 2497 2033 2498 2043 2496 2051M1536 1066 1540 1076 1541 1086 1541 1097 1548 1106 1549 1116M3434 1043 3434 1053 3433 1063 3433 1072 3432 1082 3436 1092 3433 1102M3095 1015 3103 1012 3109 1005 3114 996 3122 991 3131 988 3139 983 3144 976M3033 1454 3043 1457 3054 1454 3065 1457 3076 1457M2892 1548 2901 1544 2909 1541 2917 1536 2927 1535 2933 1527 2943 1526M2536 2022 2534 2032 2532 2041 2530 2050 2530 2060 2530 2069M2807 1053 2814 1060 2814 1070 2821 1077 2824 1085 2831 1092 2837 1099 2840 1107M3481 1043 3484 1053 3490 1062 3492 1072 3500 1080 3502 1090M3144 976 3154 979 3162 984 3168 992 3177 997 3185 1002 3194 1007 3203 1010 3212 1014M2596 1594 2604 1600 2613 1604 2621 1610 2628 1616 2636 1623 2645 1626 2653 1632M2943 1526 2952 1528 2963 1528 2972 1532 2982 1535 2992 1536 3002 1536 3011 1540M3433 1102 3434 1111 3437 1120 3439 1129 3439 1138 3440 1147 3441 1157 3442 1166M3084 1050 3094 1051 3104 1046 3114 1045 3125 1049 3135 1045 3145 1045M2574 1671 2582 1677 2584 1687 2590 1693 2597 1699 2604 1705 2610 1711 2615 1719M2917 1572 2924 1579 2924 1590 2929 1597 2932 1607 2938 1613M2786 1658 2795 1658 2804 1657 2813 1660 2822 1663M2436 2142 2439 2151 2440 2161 2441 2171 2443 2181 2447 2190M3365 1177 3369 1186 3373 1196 3373 1207 3379 1216 3382 1226M3037 1135 3047 1136 3056 1132 3065 1131 3075 1133M2606 2172 2616 2175 2625 2172 2635 2172 2644 2173 2654 2173 2663 2173 2672 2176 2682 2175 2691 2174M2822 1663 2832 1663 2842 1660 2852 1655 2862 1653 2872 1653 2882 1649 2892 1648M3300 1237 3305 1246 3307 1256 3308 1266 3313 1275 3312 1285 3314 1295 3320 1303 3320 1313M2952 1163 2962 1164 2972 1169 2983 1169 2992 1173 3002 1175 3012 1179M3193 1279 3196 1288 3201 1297 3206 1306 3210 1315 3213 1325 3215 1334M2797 1725 2806 1727 2816 1726 2825 1725 2835 1728 2844 1727M3241 1302 3244 1312 3240 1322 3243 1332 3243 1342 3243 1352 3246 1362M2513 1792 2521 1797 2525 1806 2531 1813 2537 1819 2545 1824 2549 1832M2707 1758 2716 1755 2725 1759 2734 1755 2744 1756 2753 1752 2762 1749 2771 1751M3006 1884 3009 1894 3010 1903 3015 1912 3015 1922 3019 1931 3021 1940M2683 1816 2692 1822 2699 1828 2706 1835 2714 1841 2724 1844 2731 1851M3113 1424 3118 1434 3120 1445 3123 1455M2391 1904 2396 1913 2407 1916 2410 1927 2420 1932 2427 1938 2433 1947M2731 1851 2741 1849 2748 1842 2758 1838 2767 1836 2775 1828 2784 1825 2793 1820 2801 1815M2959 1968 2962 1978 2966 1987 2969 1997M2612 1909 2622 1909 2633 1912 2643 1910 2654 1907 2665 1908M1543 994 1552 992 1562 995 1571 995 1580 994 1589 993 1598 998 1608 997M3203 1411 3200 1420 3198 1429 3196 1438 3190 1446 3190 1455M3076 1457 3080 1466 3082 1477 3085 1487 3092 1495 3093 1506 3098 1516M2328 1974 2335 1981 2346 1981 2354 1984 2362 1989 2370 1995 2378 1998M3272 995 3279 1002 3281 1012 3288 1018 3293 1026 3297 1034 3299 1044 3305 1051 3312 1058 3318 1065 3320 1074M2665 1908 2674 1907 2683 1904 2692 1900 2700 1894 2709 1892 2719 1891 2727 1887 2736 1884M2891 2029 2889 2040 2890 2051 2892 2061M1729 1603 1721 1609 1714 1615 1706 1622 1697 1626 1691 1635 1681 1638 1674 1646 1665 1650M2613 1969 2621 1964 2629 1958 2639 1957 2645 1948 2654 1945M2500 2016 2509 2020 2518 2020 2527 2020 2536 2022M3434 1043 3443 1042 3453 1044 3462 1043 3472 1045 3481 1043M2938 1613 2944 1622 2944 1633 2948 1643 2948 1653 2953 1663M2892 1648 2898 1655 2905 1661 2915 1665 2922 1671 2930 1676 2938 1682 2945 1688M3005 1610 3014 1616 3020 1624 3024 1634 3031 1641M1604 1709 1596 1716 1593 1726 1587 1733 1582 1742 1579 1751 1574 1760 1569 1768M3206 1128 3214 1134 3221 1141 3231 1144 3239 1149 3248 1154 3257 1158 3264 1166M2827 2136 2830 2147 2834 2157 2838 2168 2843 2178M3082 1165 3084 1175 3092 1181 3095 1191 3102 1198 3105 1207 3109 1216 3116 1223M2496 2051 2503 2058 2512 2061 2521 2066 2530 2069M3433 1102 3443 1101 3453 1097 3463 1094 3473 1095 3483 1093 3492 1092 3502 1090M3292 1156 3302 1156 3310 1164 3320 1161 3328 1169 3337 1171 3347 1169 3356 1172 3365 1177M2953 1663 2949 1675 2945 1688M1602 1369 1606 1379 1616 1385 1622 1394 1625 1405M2845 1782 2850 1791 2858 1796 2866 1800 2871 1809 2881 1812 2887 1819M2366 2169 2374 2174 2384 2175 2393 2178 2402 2178 2412 2178 2421 2182 2429 2187 2438 2190 2447 2190M2912 1360 2921 1365 2929 1372 2938 1376 2945 1384 2953 1390 2961 1396 2969 1402M1574 1454 1572 1463 1566 1471 1564 1480 1562 1490 1560 1499 1557 1508 1556 1518 1551 1526M3215 1334 3221 1343 3228 1350 3237 1356 3246 1362M2600 1469 2593 1476 2591 1486 2586 1494 2577 1500 2575 1509 2570 1517M2908 1434 2914 1442 2924 1444 2932 1449 2937 1457M1708 1008 1715 1015 1726 1014 1733 1019 1739 1028 1748 1030M2604 2012 2613 2018 2619 2026 2627 2033 2638 2036 2644 2045 2652 2051M1610 1035 1611 1045 1611 1056 1606 1065 1607 1076 1607 1086 1605 1096 1604 1106M2959 1968 2968 1964 2977 1960 2986 1957 2994 1951 3003 1947 3012 1943 3021 1940M3203 1411 3213 1410 3223 1410 3234 1410 3244 1412 3255 1409M3076 1457 3085 1456 3095 1457 3104 1458 3113 1454 3123 1455M1663 1065 1672 1071 1679 1080 1685 1089M3294 2012 3285 2017 3278 2025 3272 2033 3264 2039 3255 2044 3248 2051 3239 2057M1549 1116 1551 1126 1557 1135 1557 1145 1566 1152 1569 1162 1570 1172 1574 1181M2891 2029 2901 2028 2909 2024 2918 2021 2926 2014 2935 2011 2943 2006 2951 2003 2961 2002 2969 1997M2776 1536 2783 1544 2794 1547 2802 1554 2809 1562 2820 1564 2828 1571M3123 1455 3132 1453 3142 1454 3152 1457 3161 1455 3171 1458 3181 1452 3190 1455M3368 1572 3369 1583 3364 1593 3366 1604 3367 1614 3367 1624 3365 1635M2333 2141 2327 2149 2320 2154 2311 2157 2306 2165 2301 2173 2293 2177 2288 2185 2281 2191 2273 2196 2266 2201M3502 1090 3505 1100 3502 1109 3502 1119 3499 1129 3505 1139 3502 1148 3502 1158 3500 1168 3502 1178M3442 1166 3446 1174 3452 1182 3455 1190 3463 1196 3466 1205 3471 1212 3476 1220 3481 1228M2839 2049 2848 2050 2857 2053 2866 2054 2874 2058 2883 2061 2892 2061M2731 1605 2737 1612 2745 1618 2750 1627 2759 1630 2764 1640 2771 1646 2779 1651 2786 1658M3445 1596 3442 1605 3439 1614 3435 1623 3426 1630 3427 1641 3420 1649M3098 1516 3107 1519 3114 1525 3121 1531 3132 1531 3139 1538 3148 1542M3335 1669 3326 1673 3319 1679 3313 1687 3306 1692 3297 1696M2938 1613 2948 1610 2957 1613 2967 1611 2977 1614 2986 1609 2996 1610 3005 1610M2535 2153 2544 2154 2552 2160 2561 2163 2570 2164 2579 2167 2589 2165 2597 2171 2606 2172M1574 1181 1571 1191 1567 1200 1561 1208 1554 1215 1552 1225M2790 2114 2800 2117 2809 2124 2817 2131 2827 2136M2123 1247 2117 1255 2110 1261 2102 1269 2096 1277 2091 1285 2088 1296 2080 1302M3005 1610 3013 1604 3022 1601 3032 1601 3041 1597 3050 1593 3058 1589M3502 1178 3500 1187 3497 1195 3492 1203 3488 1211 3482 1218 3481 1228M3423 1227 3419 1237 3417 1248 3417 1258 3415 1269 3415 1280M2370 1786 2365 1795 2358 1802 2349 1806 2342 1813 2337 1821 2331 1828 2323 1834 2316 1840M2316 1840 2313 1850 2307 1859 2302 1867 2298 1877 2296 1887M2767 2190 2777 2189 2786 2188 2795 2184 2805 2185 2814 2181 2823 2179 2833 2178 2843 2178M2687 1726 2693 1733 2696 1742 2704 1748 2707 1758M1602 1369 1612 1368 1619 1361 1628 1357 1638 1359 1647 1356 1655 1352 1664 1348M3241 1793 3247 1802 3250 1813 3255 1823 3262 1832M2905 1700 2915 1699 2925 1696 2935 1692 2945 1688M3317 1354 3323 1361 3324 1371 3330 1379 3335 1387 3338 1396 3345 1403 3349 1411M2255 1896 2253 1905 2248 1913 2245 1921 2247 1931 2242 1939 2238 1948M3209 1854 3201 1859 3192 1861 3185 1868M3117 1882 3121 1891 3125 1899 3126 1910 3129 1919 3136 1926 3138 1936M2083 1004 2084 1017 2087 1029M1982 1476 1975 1484 1967 1490 1957 1492 1948 1496 1941 1502 1934 1510 1927 1516 1917 1520M1574 1454 1583 1457 1591 1463 1600 1467 1609 1470 1619 1473 1628 1477M3322 978 3326 987 3334 995 3338 1004 3339 1015 3344 1023 3351 1031 3352 1042 3359 1050M2015 1032 2015 1041 2017 1050 2017 1059 2014 1068 2015 1077 2016 1086 2015 1095 2015 1104M1678 971 1686 977 1689 987 1696 993 1701 1002 1708 1008M2943 1526 2937 1535 2934 1545 2927 1554 2921 1563 2917 1572M3386 995 3394 1001 3401 1008 3405 1017 3412 1024 3420 1030 3425 1039 3434 1043M3034 2034 3036 2043 3039 2051 3038 2060 3040 2069M1708 1008 1718 1007 1725 998 1734 995 1744 996 1752 990 1760 984 1770 983 1778 979M1974 1093 1976 1103 1971 1113 1972 1123 1974 1134 1974 1144 1969 1154 1970 1164M1610 1035 1619 1038 1629 1043 1635 1051 1645 1055 1655 1058 1663 1065M1836 1607 1829 1616 1820 1622 1814 1631 1809 1641 1801 1647M3418 1515 3427 1517 3436 1520 3445 1523 3454 1525 3462 1529 3471 1531 3480 1534 3490 1532 3498 1536M3320 1074 3330 1077 3338 1085 3348 1089 3358 1091M1903 1193 1901 1202 1902 1212 1905 1221 1902 1231 1903 1240 1903 1250M1549 1116 1559 1117 1568 1112 1577 1114 1586 1107 1595 1105 1604 1106M2822 1663 2817 1671 2813 1680 2813 1690 2809 1699 2803 1707 2801 1716 2797 1725M2077 2108 2075 2118 2077 2128 2074 2137 2076 2147 2074 2156 2077 2166 2075 2176M3261 1113 3269 1120 3273 1130 3282 1137 3286 1147 3292 1156M1970 1164 1970 1173 1973 1182 1976 1191 1981 1199 1983 1208 1982 1217 1986 1226M1604 1106 1614 1105 1622 1101 1631 1099 1641 1100 1649 1095 1658 1092 1667 1094 1676 1089 1685 1089M3445 1596 3454 1591 3463 1587 3473 1584 3484 1586 3492 1577 3502 1577M3335 1669 3342 1663 3347 1656 3351 1647 3357 1640 3365 1635M1903 1250 1910 1258 1918 1266 1925 1275M1574 1181 1584 1181 1594 1182 1604 1185 1613 1190 1624 1187 1634 1191M3026 1730 3036 1736 3041 1745 3051 1751 3058 1760M3365 1635 3373 1640 3383 1642 3392 1643 3401 1646 3411 1648 3420 1649M1847 1298 1845 1307 1846 1317 1840 1326 1843 1336 1838 1345M2901 1308 2894 1315 2886 1320 2876 1323 2867 1327 2859 1332 2850 1337 2843 1344M3198 1247 3204 1256 3211 1263 3218 1270 3224 1277 3230 1286 3237 1293 3241 1302M1770 1367 1773 1377 1779 1384 1784 1392 1790 1399M3423 1227 3433 1229 3442 1229 3452 1228 3461 1229 3471 1228 3481 1228M2316 1840 2324 1834 2333 1830 2342 1826 2351 1821 2359 1815 2366 1808M2806 1406 2802 1415 2801 1425 2803 1436 2797 1445 2798 1455 2795 1465M3241 1793 3250 1792 3259 1794 3268 1794 3277 1788 3286 1791 3295 1790M1748 1389 1745 1399 1738 1406 1734 1415 1729 1423 1725 1432 1724 1443 1718 1451M2839 1884 2847 1890 2849 1901 2858 1907 2863 1915 2872 1921 2879 1928 2883 1938M3209 1854 3218 1851 3227 1849 3235 1843 3245 1840 3254 1837 3262 1832M1651 1464 1655 1474 1656 1483 1655 1493 1656 1503 1659 1512M3117 1882 3126 1880 3136 1876 3146 1878 3156 1876 3165 1870 3175 1871 3185 1868M2083 1004 2092 1001 2100 996 2109 993 2116 987 2125 985 2132 979 2141 976 2149 971M1592 1553 1599 1560 1605 1569 1613 1574M2536 2022 2528 2028 2519 2033 2510 2038 2503 2045 2496 2051M3481 1043 3474 1049 3470 1058 3461 1063 3459 1074 3451 1079 3445 1087 3440 1095 3433 1102M1871 991 1870 1000 1867 1008 1862 1016 1860 1025 1862 1035 1858 1044M3431 2028 3428 2037 3424 2045 3423 2055 3416 2062 3413 2071 3410 2080M3100 1958 3110 1952 3119 1948 3128 1940 3138 1936M2432 1053 2424 1059 2416 1066 2408 1072 2399 1076 2394 1086 2386 1093 2376 1097M1871 2086 1879 2092 1886 2100 1891 2108 1900 2113 1906 2122 1915 2127M2015 1032 2024 1032 2033 1029 2042 1029 2051 1032 2060 1030 2069 1029 2078 1030 2087 1029M3298 1413 3308 1412 3318 1410 3328 1414 3339 1413 3349 1411M1565 1586 1566 1595 1562 1604 1561 1613 1559 1622 1562 1631 1557 1640 1557 1649M2798 2028 2807 2032 2813 2038 2823 2041 2832 2043 2839 2049M1734 1123 1742 1128 1749 1135 1753 1143 1759 1151 1766 1157 1774 1162M3034 2034 3043 2034 3052 2032 3061 2034 3071 2034M1784 2148 1790 2154 1797 2161 1805 2166 1813 2171 1822 2175 1829 2181M1974 1093 1985 1093 1994 1100 2005 1102 2015 1104M2436 2142 2428 2146 2419 2148 2409 2150 2400 2153 2393 2160 2383 2162 2374 2164 2366 2169M2728 2091 2738 2092 2745 2100 2754 2102 2763 2105 2772 2109 2782 2109 2790 2114M1691 1175 1696 1184 1702 1192 1709 1198 1714 1206 1722 1213 1729 1219M2600 1672 2600 1682 2608 1690 2608 1701 2613 1709 2615 1719M1903 1193 1912 1191 1920 1186 1927 1180 1937 1180 1945 1175 1952 1169 1962 1168 1970 1164M2077 2108 2084 2114 2093 2118 2100 2125 2109 2127 2117 2133 2125 2137M2679 2113 2683 2122 2683 2131 2691 2138 2690 2148 2694 2156 2699 2164 2703 2172 2705 2181 2708 2189 2713 2197 2717 2206 2720 2214M2529 1707 2534 1717 2534 1727 2537 1736 2538 1746 2542 1755 2542 1766M3040 2069 3052 2068 3063 2062 3075 2059M1970 1164 1977 1171 1986 1176 1995 1180 2005 1182 2012 1189M3489 1653 3490 1663 3485 1671 3485 1681 3484 1690 3482 1699 3481 1709M2513 1792 2513 1803 2509 1813 2507 1823 2505 1834M2426 1843 2427 1852 2423 1861 2419 1870 2418 1880 2417 1889 2416 1899 2413 1908M2922 2186 2938 2189M3356 1794 3359 1803 3363 1812 3369 1819 3372 1828M3246 1362 3237 1367 3235 1378 3228 1384 3220 1389 3216 1398 3207 1403 3203 1411M2391 1904 2381 1907 2375 1918 2362 1919 2355 1927M3255 1911 3263 1918 3272 1921 3282 1925 3292 1927 3300 1935 3308 1941 3318 1943M2328 1974 2320 1981 2317 1992 2311 2000 2303 2008M1748 1389 1759 1390 1768 1397 1779 1399 1790 1399M2212 996 2207 1006 2207 1016 2206 1026 2205 1035M3123 1455 3121 1465 3117 1473 3111 1481 3109 1490 3103 1497 3104 1508 3098 1516M3436 1409 3443 1415 3452 1418 3460 1423 3466 1430 3475 1433 3482 1440 3490 1444 3497 1450M1651 1464 1660 1460 1670 1459 1680 1460 1690 1459 1700 1457 1709 1452 1718 1451M2127 1047 2134 1054 2137 1064 2143 1071 2147 1080 2154 1087 2158 1096M2303 2008 2303 2017 2307 2026 2306 2035 2305 2044 2305 2054 2305 2063 2310 2072 2308 2081M1871 991 1882 990 1892 991 1902 994 1912 993 1922 991M3431 2028 3440 2024 3449 2022 3457 2017 3467 2017 3476 2014 3485 2010M2240 2073 2243 2081 2245 2090 2248 2099 2245 2109 2252 2116 2251 2126 2253 2135 2256 2143 2258 2152M3206 1128 3201 1135 3194 1142 3192 1151 3187 1159 3184 1168 3177 1174M1565 1586 1574 1581 1584 1582 1594 1580 1604 1578 1613 1574M3158 2055 3166 2061 3172 2069 3177 2078 3186 2083 3189 2093 3197 2100 3204 2106M3058 1589 3053 1597 3051 1608 3046 1616 3042 1625 3035 1632 3031 1641M2953 1663 2945 1668 2938 1677 2929 1681 2921 1688 2912 1693 2905 1700M2186 2143 2190 2151 2197 2159 2198 2169 2206 2176 2209 2185 2212 2195M3122 1163 3120 1173 3122 1184 3121 1193 3116 1203 3119 1213 3116 1223M3076 2154 3084 2160 3088 2170 3096 2175 3100 2185 3110 2190 3115 2198M2600 1672 2609 1668 2614 1659 2623 1656 2629 1648 2636 1641 2645 1637 2653 1632M3089 1252 3093 1264 3091 1276 3095 1287M2706 1154 2716 1153 2726 1150 2737 1154 2747 1153 2757 1151 2767 1151M1557 1649 1567 1647 1577 1645 1585 1639 1596 1640 1605 1635 1615 1636 1625 1631M2042 1246 2044 1255 2043 1264 2041 1274 2043 1283 2043 1292M3144 1731 3153 1734 3162 1737 3170 1743 3179 1744 3188 1748 3197 1749M3018 1302 3020 1311 3024 1320 3022 1330 3024 1339 3026 1348 3026 1358M1946 1303 1943 1313 1941 1323 1945 1334 1942 1343M2513 1792 2519 1784 2528 1779 2535 1773 2542 1766M2964 1336 2963 1346 2965 1355 2968 1364 2969 1373 2969 1383 2971 1392 2969 1402M3431 1706 3441 1710 3451 1708 3461 1707 3471 1710 3481 1709M1910 1360 1908 1369 1903 1378 1903 1388 1899 1397 1899 1407M2776 1891 2777 1900 2772 1909 2770 1917 2767 1926 2766 1935 2766 1944 2765 1953 2766 1963 2763 1971M2908 1434 2905 1446 2907 1458M2707 1957 2711 1969 2716 1980 2724 1989M2391 1904 2402 1908 2413 1908M1708 1008 1700 1014 1699 1024 1693 1031 1684 1035 1680 1044 1676 1052 1668 1057 1663 1065M2838 1473 2843 1480 2850 1487 2853 1497 2859 1504 2864 1511M3325 1811 3333 1817 3343 1819 3354 1819 3362 1827 3372 1828M2088 1958 2095 1964 2103 1970 2108 1977 2114 1984 2121 1990 2126 1998M2672 2016 2670 2027 2661 2033 2657 2042 2652 2051M1663 1065 1656 1073 1647 1078 1637 1081 1629 1088 1620 1092 1611 1098 1604 1106M1972 975 1980 981 1985 991 1988 1001 1997 1007 2004 1014 2007 1025 2015 1032M2212 996 2220 993 2227 987 2234 980 2241 975 2249 969M2595 2070 2599 2079 2602 2088 2608 2095 2610 2104 2615 2112 2615 2122 2621 2129M1924 1075 1935 1078 1945 1080 1954 1086 1965 1088 1974 1093M2864 1511 2858 1519 2853 1528 2848 1536 2845 1546 2837 1553 2833 1562 2828 1571M2127 1047 2136 1043 2146 1045 2156 1042 2166 1042 2175 1038 2185 1038 2194 1034 2205 1035M2652 2051 2656 2060 2658 2070 2664 2078 2666 2088 2674 2094 2673 2106 2679 2113M2535 2153 2541 2161 2541 2171 2544 2180 2550 2188 2555 2196M1665 1650 1671 1658 1679 1663 1685 1669 1692 1675 1699 1681 1707 1687 1714 1692 1721 1698M2240 2073 2250 2073 2259 2074 2269 2075 2278 2080 2289 2076 2298 2081 2308 2081M2621 2129 2617 2140 2613 2151 2609 2161 2606 2172M3502 1178 3495 1184 3488 1190 3479 1193 3470 1197 3461 1200 3456 1210 3446 1211 3440 1219 3432 1223 3423 1227M3206 1128 3216 1126 3225 1125 3234 1120 3243 1117 3252 1113 3261 1113M2737 1641 2735 1651 2727 1658 2725 1667 2721 1675 2718 1685 2715 1693M2186 2143 2195 2144 2204 2142 2213 2147 2222 2144 2231 2146 2240 2151 2249 2148 2258 2152M3423 1227 3416 1233 3411 1240 3407 1249 3401 1256 3397 1264 3392 1271 3387 1279M3122 1163 3131 1167 3141 1165 3150 1167 3158 1172 3168 1170 3177 1174M2687 1726 2684 1735 2678 1742 2678 1752 2670 1759 2667 1768 2662 1776 2658 1784 2656 1794M2081 1185 2091 1182 2099 1176 2107 1171 2117 1168 2124 1159 2134 1157M3241 1793 3237 1802 3230 1809 3225 1818 3225 1829 3218 1837 3215 1846 3209 1854M2144 2179 2154 2182 2163 2183 2172 2188 2183 2188 2192 2191 2202 2191 2212 2195M3089 1252 3095 1244 3104 1239 3110 1231 3116 1223M3295 1790 3291 1800 3282 1807 3274 1814 3270 1824 3262 1832M2042 1246 2051 1239 2062 1235 2071 1230M3117 1882 3115 1892 3114 1901 3109 1910 3106 1920 3108 1930 3104 1939 3104 1949 3100 1958M2964 1336 2972 1341 2982 1342 2991 1344 3000 1347 3009 1350 3018 1353 3026 1358M1910 1360 1921 1355 1933 1351 1942 1343M2776 1891 2784 1887 2794 1890 2803 1889 2812 1890 2821 1889 2830 1886 2839 1884M1748 1907 1758 1911 1770 1909 1780 1913M2545 1877 2545 1887 2547 1897 2546 1907 2543 1917 2541 1927 2546 1937 2543 1947M2511 1966 2515 1975 2517 1986 2521 1995 2525 2005 2533 2013 2536 2022M1861 1404 1870 1405 1880 1407 1889 1406 1899 1407M3034 2034 3025 2037 3017 2041 3008 2042 3000 2048 2991 2051 2981 2052M2707 1957 2716 1961 2725 1965 2734 1967 2744 1967 2753 1970 2763 1971M3211 1534 3212 1543 3206 1552 3203 1561 3206 1571 3206 1580 3204 1589 3200 1598M3419 971 3421 980 3426 989 3426 998 3426 1007 3427 1016 3428 1025 3430 1035 3434 1043M3071 2034 3066 2043 3059 2048 3054 2057 3047 2062 3040 2069M2672 2016 2680 2009 2690 2009 2698 2003 2708 2001 2715 1993 2724 1989M3297 1471 3292 1479 3287 1488 3287 1499 3279 1506 3277 1516 3273 1525M3123 1607 3127 1619 3132 1631M3359 1050 3357 1060 3358 1070 3359 1081 3358 1091M2595 2070 2605 2067 2615 2065 2623 2059 2633 2057 2642 2053 2652 2051M2864 1511 2869 1519 2875 1527 2880 1534 2888 1540 2892 1548M2333 2141 2342 2147 2350 2155 2356 2164 2366 2169M3302 1104 3301 1115 3301 1126 3295 1135 3297 1146 3292 1156M2938 2110 2933 2119 2931 2129 2931 2138 2930 2148 2931 2158 2923 2166 2924 2176 2922 2186M2787 1576 2797 1576 2808 1573 2818 1574 2828 1571M3264 1166 3257 1173 3258 1183 3251 1190 3247 1198 3243 1207 3241 1216M2621 2129 2630 2126 2640 2124 2650 2123 2660 2122 2669 2116 2679 2113M3097 1709 3090 1715 3084 1722 3081 1732 3074 1737 3071 1747 3062 1751 3058 1760M2737 1641 2747 1642 2756 1650 2766 1652 2776 1656 2786 1658M3198 1247 3196 1258 3195 1268 3193 1279M2555 2196 2563 2192 2573 2189 2580 2182 2590 2183 2597 2174 2606 2172M1770 1367 1761 1373 1755 1381 1748 1389M3009 1793 3015 1800 3022 1807 3029 1812 3035 1819 3042 1826M2687 1726 2693 1717 2702 1710 2706 1700 2715 1693M3147 1314 3145 1323 3144 1333M2947 1809 2950 1818 2952 1828 2952 1837 2957 1846 2961 1855 2961 1865 2965 1874M2909 1909 2902 1915 2896 1923 2890 1931 2883 1938M1592 1553 1586 1562 1577 1568 1570 1576 1565 1586M2845 1954 2843 1964 2846 1974 2843 1984 2843 1994 2846 2004 2843 2014M1795 1030 1791 1040 1788 1049 1791 1060 1788 1069 1785 1079 1782 1089 1781 1098M3083 1422 3080 1433 3080 1445 3076 1457M1922 991 1915 996 1908 1003 1903 1011 1895 1016 1888 1022 1881 1028 1873 1032 1866 1038 1858 1044M2798 2028 2800 2038 2798 2049 2801 2060 2802 2071M1734 1123 1733 1133 1728 1141 1722 1148 1717 1157 1714 1166 1711 1174 1708 1183M3211 1534 3219 1530 3229 1533 3238 1533 3246 1527 3255 1525 3264 1524 3273 1525M2843 2014 2842 2026 2841 2038 2839 2049M2728 2091 2731 2100 2726 2110 2727 2119 2727 2129 2729 2138M2802 2071 2800 2082 2795 2092 2795 2104 2790 2114M3037 1135 3045 1143 3056 1146 3066 1151 3071 1161 3082 1165M2679 2113 2681 2123 2680 2134 2687 2143 2684 2154 2687 2165 2691 2174M1708 1183 1716 1191 1716 1203 1725 1210 1729 1219M3359 1050 3368 1051 3378 1049 3387 1046 3396 1046 3405 1043 3415 1046 3424 1045 3434 1043M1614 1241 1619 1250 1621 1260 1625 1270 1632 1278 1636 1287M3200 1598 3210 1599 3219 1599 3229 1600 3237 1606 3247 1606 3256 1607 3266 1609M2729 2138 2728 2148 2726 2157 2723 2166 2722 2176 2726 2186 2722 2195 2723 2205 2720 2214M1669 1241 1672 1250 1676 1258 1679 1267 1684 1275M3302 1104 3311 1101 3320 1097 3330 1099 3339 1093 3348 1091 3358 1091M3132 1631 3139 1637 3147 1643 3157 1645 3163 1653 3170 1660 3179 1663M3264 1166 3274 1165 3282 1158 3292 1156M3481 1709 3477 1717 3471 1724 3467 1732 3462 1740 3458 1748 3454 1756 3446 1762 3443 1770 3437 1778M3356 1794 3345 1799 3334 1804 3325 1811M3097 1709 3106 1715 3115 1720 3126 1721 3134 1728 3144 1731M1572 1371 1573 1381 1567 1392 1571 1403 1567 1413M3198 1247 3207 1242 3215 1235 3223 1227 3232 1221 3241 1216M3009 1793 3017 1787 3026 1782 3033 1775 3041 1770 3051 1767 3058 1760M3255 1911 3249 1918 3246 1927 3243 1935 3242 1945 3236 1952M3147 1314 3155 1308 3164 1303 3170 1296 3180 1292 3186 1284 3193 1279M2731 1851 2737 1860 2746 1864 2753 1871 2759 1880 2769 1884 2776 1891M2612 1909 2619 1915 2624 1923 2632 1928 2641 1932 2646 1940 2654 1945M1567 1413 1568 1424 1571 1433 1571 1444 1574 1454M3436 1409 3433 1418 3434 1428 3432 1438 3428 1447 3429 1457 3427 1467M3042 1826 3051 1826 3059 1820 3068 1816 3078 1817 3087 1816 3095 1812M2909 1909 2917 1904 2925 1898 2932 1893 2940 1888 2950 1885 2957 1878 2965 1874M2249 969 2246 979 2238 986 2234 996 2226 1002 2219 1009 2214 1018 2210 1027 2205 1035M2127 1047 2125 1057 2118 1065 2115 1074 2110 1082 2108 1092 2102 1100 2098 1109M3491 1433 3497 1450M1608 997 1609 1006 1606 1016 1609 1026 1610 1035M3236 1952 3231 1960 3226 1969 3222 1978 3217 1987 3213 1996 3205 2003M1536 1066 1545 1070 1553 1076 1560 1083 1571 1085 1578 1093 1586 1098 1596 1100 1604 1106M2965 1874 2975 1875 2985 1880 2996 1881 3006 1884M2845 1954 2855 1952 2863 1944 2873 1942 2883 1938M2205 1035 2200 1044 2192 1050 2188 1059 2182 1066 2175 1073 2171 1082 2165 1090 2158 1096M1795 1030 1804 1033 1812 1037 1822 1034 1831 1037 1840 1040 1849 1043 1858 1044M3427 1467 3426 1477 3424 1486 3420 1496 3420 1505 3418 1515M3083 1422 3093 1424 3103 1422 3113 1424M3158 2055 3158 2065 3155 2074 3150 2082 3151 2092 3144 2100 3143 2109 3142 2119M2798 2028 2807 2025 2817 2025 2825 2020 2833 2014 2843 2014M1734 1123 1742 1116 1752 1112 1763 1109 1772 1105 1781 1098M3384 1530 3379 1540 3379 1552 3374 1563 3368 1572M3266 1609 3266 1618 3263 1627 3267 1637 3262 1646 3266 1655 3265 1665 3263 1674M2843 2014 2853 2017 2862 2020 2873 2021 2882 2027 2891 2029M3076 2154 3081 2162 3081 2173 3087 2181 3087 2192 3094 2199 3095 2209M2728 2091 2737 2086 2747 2088 2756 2085 2766 2082 2775 2080 2783 2074 2794 2075 2802 2071M1691 1175 1699 1181 1708 1183M3305 1596 3309 1605 3314 1614 3314 1624 3320 1632 3323 1642 3326 1651 3329 1661 3335 1669M3179 1663 3183 1673 3191 1680 3196 1688 3197 1699 3204 1707 3210 1716M2436 2142 2441 2150 2445 2159 2449 2168 2452 2178 2460 2184 2464 2194 2467 2203 2473 2210M3365 1177 3372 1183 3380 1188 3385 1197 3394 1201 3401 1208 3407 1215 3414 1222 3423 1227M2802 2071 2811 2065 2821 2061 2829 2053 2839 2049M2679 2113 2687 2117 2694 2124 2705 2124 2711 2132 2719 2136 2729 2138M1708 1183 1717 1178 1728 1180 1736 1173 1746 1172 1756 1170 1765 1167 1774 1162M2336 1186 2341 1196 2342 1207 2350 1215 2352 1226 2357 1236M3263 1674 3261 1684 3257 1693 3255 1703 3249 1712M3144 1731 3141 1741 3139 1750 3136 1760M2071 1230 2069 1240 2064 1248 2060 1257 2058 1267 2049 1273 2047 1283 2043 1292M1946 1303 1939 1310 1934 1318 1933 1329 1925 1335 1918 1342 1914 1351 1910 1360M1669 1241 1678 1239 1686 1235 1695 1233 1703 1227 1712 1226 1720 1222 1729 1219M3210 1716 3208 1728 3202 1738 3197 1749M3382 1226 3390 1234 3391 1246 3397 1254 3402 1263 3412 1270 3415 1280M2691 2174 2695 2183 2703 2190 2708 2199 2715 2205 2720 2214M1910 1360 1903 1366 1895 1371 1889 1378 1880 1383 1874 1390 1867 1397 1861 1404M1636 1287 1645 1282 1655 1281 1665 1281 1675 1280 1684 1275M3320 1313 3329 1317 3335 1326 3346 1327 3352 1336 3360 1342 3370 1343 3378 1349M1942 1343 1935 1350 1934 1361 1925 1367 1920 1374 1914 1382 1908 1390 1905 1399 1899 1407M1572 1371 1582 1368 1592 1372 1602 1369M3095 1812 3094 1822 3089 1832 3092 1843 3089 1853 3085 1863 3083 1873M1780 1913 1771 1920 1768 1931 1761 1940 1751 1945 1746 1955M3114 1848 3113 1860 3118 1871 3117 1882M3203 1411 3209 1419 3214 1427 3220 1436 3224 1446 3231 1453M3436 1409 3445 1414 3455 1416 3464 1420 3472 1426 3482 1428 3491 1433M2030 1010 2020 1019 2015 1032M1659 2026 1651 2029 1643 2034 1634 2037 1626 2043 1616 2041 1610 2050 1600 2051M1924 1075 1918 1082 1913 1090 1905 1095 1899 1102 1892 1109M1729 1603 1726 1613 1722 1624 1720 1634 1714 1643 1711 1653M1965 1076 1972 1083 1974 1093M1608 997 1616 993 1626 993 1634 987 1643 983 1651 978 1661 977 1670 975 1678 971M3205 2003 3215 2004 3225 2008 3235 2007 3244 2011 3255 2010 3264 2014M3427 1467 3435 1464 3444 1462 3454 1462 3462 1459 3471 1458 3480 1455 3489 1453 3497 1450M2892 2061 2896 2070 2907 2073 2912 2082 2920 2087 2923 2097 2930 2104 2938 2110M3158 2055 3169 2057 3179 2062 3188 2068 3198 2071M3005 1610 3015 1613 3024 1618 3032 1627 3041 1631 3050 1637 3059 1641M3384 1530 3393 1527 3400 1520 3409 1517 3418 1515M1604 1709 1607 1718 1613 1725 1617 1733 1623 1740 1630 1747 1635 1754M3266 1609 3275 1605 3286 1604 3294 1597 3305 1596M1856 1173 1853 1183 1848 1192 1843 1201 1839 1210 1833 1219 1828 1228M3305 1596 3314 1592 3322 1588 3333 1588 3341 1582 3350 1579 3360 1577 3368 1572M1569 1768 1569 1778 1568 1787 1569 1796 1568 1806 1567 1815M1791 1241 1790 1251 1795 1261 1793 1272 1794 1282 1798 1292M1691 1726 1681 1729 1672 1735 1664 1742 1654 1746 1645 1751 1635 1754M3263 1674 3273 1672 3283 1672 3293 1669 3304 1674 3314 1671 3324 1672 3335 1669M1740 1304 1738 1313 1739 1322 1742 1332M3095 2209 3106 2205 3115 2198M1567 1815 1564 1824 1565 1835 1557 1843 1555 1853 1555 1863 1555 1873 1549 1882M3210 1716 3219 1712 3229 1713 3239 1711 3249 1712M1664 1348 1666 1357 1666 1367 1660 1377 1665 1386 1659 1396 1661 1406M2918 1777 2924 1786 2931 1794 2937 1803 2947 1809M3479 1831 3485 1841 3490 1851 3492 1862 3496 1872M3136 1760 3146 1757 3156 1758 3166 1753 3177 1754 3187 1749 3197 1749M3197 1749 3206 1755 3214 1762 3219 1771 3228 1777 3234 1785 3241 1793M3095 1812 3100 1821 3102 1831 3111 1838 3114 1848M1661 1406 1658 1415 1661 1426 1658 1435 1656 1445 1654 1455 1651 1464M3383 1970 3385 1980 3386 1990 3387 1999 3387 2009M1972 975 1982 978 1989 984 1996 992 2005 994 2015 998 2021 1007 2030 1010" fill="none" stroke="#c6c6c1" stroke-width="1.7" stroke-linejoin="round" opacity="0.9"/><path d="M2185 1180 2180 1163 2175 1149 2172 1135 2170 1121 2162 1106M2365 1286 2350 1274 2335 1268 2319 1262 2309 1249 2297 1238M2324 2152 2343 2154 2366 2146 2387 2147 2404 2150 2421 2150M2278 1647 2291 1654 2304 1662 2320 1672 2336 1682 2349 1688 2362 1694 2374 1703M2257 1295 2275 1310 2294 1327 2306 1338 2321 1347 2336 1349 2350 1354M1881 1405 1892 1391 1904 1378 1918 1370 1930 1359 1954 1354 1970 1352 1986 1352 2001 1353 2015 1353 2028 1360 2042 1363 2055 1369M2472 1784 2488 1787 2504 1791 2517 1796 2530 1801 2549 1811 2565 1824 2577 1831 2591 1836 2604 1842 2620 1845 2636 1852 2657 1858 2675 1861 2694 1860 2708 1860 2722 1858 2736 1859M2515 1198 2496 1204 2476 1207 2453 1204 2427 1203 2414 1197 2402 1189 2388 1185 2367 1183M2009 1277 1988 1286 1977 1298 1965 1308 1946 1323 1934 1339 1925 1358 1910 1367 1896 1377 1882 1380 1869 1386 1854 1386 1840 1385 1825 1385M2867 1661 2858 1676 2849 1690 2848 1707 2851 1727 2857 1742 2872 1755 2897 1763M1615 2032 1604 2022 1595 2011 1586 1999 1578 1987 1569 1975 1556 1968 1544 1959 1537 1946 1529 1934M2162 1172 2159 1152 2153 1133 2144 1120 2143 1104 2140 1089 2132 1076 2126 1061 2114 1052 2101 1044 2093 1025 2082 1007 2076 985 2068 967M3041 1629 3045 1613 3052 1598 3061 1581 3073 1567 3080 1546 3084 1526 3088 1507 3088 1492 3085 1478M2963 2168 2962 2150 2963 2132 2969 2119 2976 2107 2989 2099 3000 2088 3011 2079 3037 2074 3056 2063 3071 2048M2759 2063 2780 2048 2797 2039 2816 2031 2834 2011 2851 1999 2864 1996 2878 1993 2895 1991M3374 1852 3356 1849 3338 1844 3320 1847 3307 1852 3294 1859 3282 1865 3263 1868 3248 1866 3234 1862 3219 1861 3195 1853 3177 1846 3162 1847 3148 1850 3133 1851M2808 1622 2828 1624 2843 1631 2857 1633 2872 1635 2895 1645 2912 1655 2931 1663 2949 1664 2968 1664M3282 1782 3287 1769 3292 1756 3295 1742 3302 1728 3305 1713 3311 1698 3317 1679 3314 1659 3309 1640 3303 1627 3294 1615 3288 1601 3285 1585M2189 1613 2177 1601 2162 1595 2147 1593 2133 1594M1619 2055 1633 2061 1646 2070 1661 2078 1677 2088 1690 2095 1704 2102 1717 2108 1731 2113 1743 2121 1759 2134 1776 2146M3367 1308 3352 1295 3339 1290 3325 1286 3303 1288 3289 1298 3273 1305M3064 2059 3076 2082 3088 2097 3100 2111 3113 2124 3132 2132 3151 2142 3168 2142 3186 2145 3204 2142 3221 2138 3247 2146 3272 2152M1742 1433 1735 1447 1731 1463 1724 1479 1718 1495 1703 1507 1690 1521 1673 1526 1659 1534M3055 1321 3063 1336 3069 1353 3068 1380 3066 1395 3065 1410 3064 1435 3067 1454 3069 1474 3078 1493 3088 1511M2080 1022 2100 1024 2120 1028 2140 1023 2159 1016 2183 1007 2196 1002 2210 999 2224 995 2241 986M2573 1283 2591 1292 2603 1304 2613 1318 2626 1335 2637 1348 2649 1361M2083 1949 2100 1940 2115 1930 2134 1921 2145 1913 2159 1907 2171 1901M1769 1967 1750 1976 1730 1982 1706 1980 1685 1984 1667 1994 1648 2004 1630 2009 1616 2004 1601 2002 1586 1999M3165 1019 3153 1008 3136 987 3127 976 3116 966 3108 953 3100 937 3089 923 3071 913M2080 1006 2066 1014 2051 1018 2039 1027 2027 1035 2016 1044 1998 1063 1992 1089 1989 1104 1985 1118M1950 1597 1968 1603 1993 1614 2009 1617 2026 1622 2040 1621 2054 1615 2069 1614 2088 1618M3272 1926 3262 1915 3252 1904 3239 1893 3224 1884 3205 1878 3186 1874 3172 1867 3159 1861 3142 1854 3126 1846M2532 2074 2538 2055 2546 2037 2554 2023 2566 2012 2581 2002 2597 1995 2618 1988 2632 1975 2643 1961 2656 1951 2669 1943M2766 1740 2755 1730 2748 1717 2734 1712 2722 1705 2709 1698 2698 1684 2686 1670 2675 1655 2662 1640 2649 1625 2641 1605M3012 1274 2996 1252 2984 1239 2974 1224 2968 1209 2961 1193 2957 1177 2945 1158 2936 1135M2651 1017 2663 1030 2675 1039 2688 1046 2705 1063 2719 1075 2732 1089 2739 1103 2743 1118M2162 1103 2142 1106 2123 1111 2109 1107 2095 1104 2074 1104 2055 1094 2039 1084M2567 2124 2580 2141 2595 2155 2606 2174 2609 2189 2610 2204 2619 2216 2627 2227 2635 2239 2649 2253 2669 2267 2678 2279M3001 1990 3008 2002 3017 2013 3025 2025 3044 2043 3056 2051 3067 2062 3079 2070 3098 2088M2384 1326 2401 1323 2419 1321 2438 1321 2451 1326 2463 1333M2169 1913 2180 1896 2191 1880 2202 1871 2209 1859 2220 1849 2234 1841 2249 1837 2265 1834 2279 1835 2294 1836 2309 1843 2326 1846M2113 1060 2132 1040 2144 1021 2156 1008 2169 997 2184 980M2489 1790 2509 1798 2520 1808 2529 1820 2541 1828 2554 1833 2565 1842 2571 1855 2580 1867 2596 1880 2620 1886 2642 1883 2657 1877 2672 1871M3262 1885 3241 1891 3225 1901 3209 1910 3194 1918 3181 1927 3166 1937 3153 1949 3137 1960 3122 1972 3105 1978M3280 1455 3278 1435 3272 1415 3274 1400 3270 1382 3264 1365 3264 1351 3267 1336 3269 1321 3270 1307 3272 1293 3273 1279M3144 2010 3165 2012 3179 2007 3194 2006 3208 2002 3225 1991 3240 1978 3259 1970 3277 1961M3276 1102 3286 1082 3299 1071 3312 1060 3324 1046M2047 1752 2031 1734 2026 1714 2016 1697 2006 1680M1568 1635 1583 1644 1599 1650 1609 1660 1619 1671 1638 1683 1646 1699 1657 1714 1668 1725M2518 1797 2498 1816 2490 1828 2480 1839 2466 1851 2452 1863 2434 1883 2429 1906M3181 1081 3162 1085 3142 1090 3123 1100 3100 1105 3085 1103 3071 1099M1924 1265 1915 1279 1905 1292 1891 1301 1882 1314 1874 1329 1866 1345 1857 1361 1855 1375 1853 1389 1845 1412 1845 1429 1852 1449M2813 1620 2787 1621 2762 1625 2749 1633 2729 1649 2711 1654M3409 1246 3385 1262 3377 1273 3370 1287 3366 1300 3359 1313 3353 1326 3350 1351 3343 1365M2351 1958 2351 1944 2350 1929 2355 1913 2355 1896M2723 1430 2720 1448 2720 1467 2718 1481 2714 1495 2709 1508 2710 1526 2707 1545 2702 1564 2701 1583 2691 1597 2676 1608 2663 1615 2650 1620M3050 1932 3059 1920 3068 1909 3071 1895 3074 1881 3075 1866 3074 1849 3074 1831 3066 1810 3065 1796 3066 1781 3069 1765 3074 1750M2544 1463 2558 1472 2578 1486 2587 1505 2597 1524 2596 1546 2603 1563 2609 1580 2617 1596M2420 1278 2398 1281 2379 1283 2360 1284 2341 1281 2322 1278 2299 1279 2277 1285 2265 1291 2253 1299 2238 1315M2104 2071 2110 2085 2118 2097 2125 2111 2135 2130 2140 2147 2141 2164M3460 1123 3446 1121 3432 1117 3418 1115 3395 1121 3379 1134 3363 1136 3347 1140M3344 1440 3357 1426 3372 1415 3385 1407 3402 1400 3418 1391 3431 1382 3443 1371 3459 1367M2965 2079 2973 2054 2981 2038 2979 2023 2980 2008 2978 1981 2984 1964 2987 1947M1861 1631 1850 1606 1836 1586 1832 1563 1829 1537 1826 1517 1821 1497 1829 1472M1943 1860 1950 1878 1962 1891 1978 1912M3043 1155 3056 1162 3068 1169 3081 1174 3098 1175 3115 1176 3130 1175 3145 1174 3166 1164M2562 2092 2572 2109 2585 2123 2593 2146 2593 2163 2583 2185 2575 2200 2565 2214 2562 2232 2561 2250M2881 2052 2873 2037 2863 2024 2851 2015 2841 2005 2829 1994 2822 1975M2252 1178 2264 1167 2278 1159 2293 1153 2311 1152 2327 1152 2343 1154M2764 1363 2745 1381 2735 1393 2726 1404 2720 1418 2709 1427 2699 1437 2687 1450 2675 1461 2657 1470 2639 1479 2612 1482M1694 1424 1682 1437 1671 1450 1666 1469 1651 1487 1637 1498 1618 1508 1598 1515 1579 1518 1561 1524M1615 1080 1605 1062 1603 1048 1603 1033 1609 1020 1614 1007 1620 993 1620 974 1622 955 1630 940 1635 922 1643 905 1644 884 1643 863 1640 843 1634 824M1840 1594 1856 1588 1871 1580 1891 1564 1907 1541 1922 1524M2192 1446 2192 1430 2189 1415 2189 1389 2195 1375 2201 1360 2209 1341 2220 1323 2220 1308 2223 1293 2223 1278M2770 1466 2774 1441 2770 1416 2757 1398 2749 1386 2742 1373 2737 1359 2728 1347 2718 1336M2159 2140 2176 2133 2192 2125 2214 2121 2230 2116 2245 2109 2268 2097 2278 2086 2286 2073 2298 2062 2304 2047 2308 2031 2311 2016 2312 2001M2587 1489 2587 1506 2586 1523 2586 1542 2576 1562 2575 1580M2786 2028 2792 2015 2800 2003 2807 1990 2807 1970 2810 1951 2818 1936 2825 1921 2834 1908 2842 1893 2850 1881 2857 1868 2861 1853M1684 1032 1697 1046 1712 1057 1728 1059 1743 1065 1758 1077 1773 1084 1789 1089M2535 1758 2541 1742 2549 1729 2556 1716 2564 1704 2574 1693 2584 1682 2603 1664M2400 2077 2420 2086 2442 2088 2465 2078 2482 2074 2500 2073 2518 2076 2536 2080 2552 2077 2568 2079 2587 2078 2606 2075 2629 2073M2793 2139 2807 2156 2824 2166 2838 2178 2848 2194 2856 2211 2868 2228 2882 2243 2899 2257 2906 2273 2914 2288 2920 2304 2923 2322M3437 1555 3438 1539 3449 1520 3465 1509 3480 1497 3492 1486 3503 1474 3518 1461 3525 1444 3535 1427 3551 1418 3566 1407M1625 1165 1616 1149 1608 1132 1594 1123 1582 1112 1565 1103 1548 1092M3132 2052 3144 2066 3160 2076 3180 2077 3200 2080 3216 2085 3231 2093 3242 2106 3256 2116 3272 2125 3291 2127 3309 2129 3333 2125M2376 1027 2384 1044 2391 1061 2392 1080 2391 1099 2388 1114 2388 1129 2390 1147 2392 1166 2389 1181M2557 1118 2536 1121 2518 1118 2501 1107M1568 1240 1564 1226 1556 1213 1548 1195 1540 1177 1531 1165 1520 1155M2229 1982 2233 2003 2232 2018 2231 2033 2236 2049 2243 2065 2257 2078 2269 2093M2898 1929 2885 1925 2872 1919 2859 1912 2845 1900 2833 1886 2820 1874 2806 1863 2786 1850 2774 1841 2759 1835M1893 2159 1879 2150 1863 2145 1850 2136 1837 2125 1821 2122 1805 2120 1785 2116 1765 2112 1749 2111 1733 2107 1719 2107 1704 2108M2883 1305 2887 1325 2889 1346 2898 1365 2910 1379 2919 1394 2924 1413 2937 1432M2190 1617 2192 1640 2187 1654 2184 1668 2177 1682 2176 1699 2176 1717 2182 1735 2196 1755M2134 1325 2153 1334 2171 1343 2185 1350 2195 1360 2205 1370M1991 2157 1992 2174 1993 2191 1997 2209 1999 2227 1993 2254M2663 1884 2646 1889 2630 1896 2613 1896 2596 1894 2574 1891 2556 1894M2393 1308 2378 1285 2371 1267 2372 1252 2371 1237 2362 1219 2352 1201 2344 1186 2336 1170 2333 1149 2332 1129M2193 1015 2195 999 2195 983 2189 965 2184 946 2184 931 2188 916M1759 1679 1744 1675 1722 1662 1705 1654 1687 1649 1672 1645 1659 1637 1644 1634 1629 1634 1614 1634 1598 1626 1581 1618 1565 1611 1552 1600 1527 1592M1684 1091 1708 1082 1726 1071 1740 1068 1753 1059 1767 1057 1788 1050 1814 1050 1832 1045 1852 1047 1872 1045 1886 1047 1901 1048M2640 1268 2660 1269 2680 1266 2707 1272 2719 1286 2735 1297 2746 1313 2759 1327 2773 1340 2785 1356M2006 1832 2003 1817 2000 1803 2000 1783 2004 1764 2004 1747 2002 1729 1998 1715 1995 1701 1993 1683 1999 1664M2145 1456 2157 1471 2168 1487 2184 1498 2201 1509 2213 1519 2227 1522 2241 1526 2255 1529 2276 1537 2296 1537 2314 1531 2332 1526M2228 1182 2240 1165 2253 1148 2265 1134 2279 1120 2296 1108 2312 1094 2330 1087 2349 1080 2364 1070 2377 1058 2392 1046 2407 1035 2422 1021 2439 1008M2627 1314 2628 1329 2631 1345 2634 1359 2636 1373 2637 1387 2635 1409 2638 1425 2644 1441M2970 1191 2960 1205 2953 1221 2933 1239 2922 1249 2914 1261 2903 1270 2896 1286 2891 1303 2884 1317 2875 1332 2864 1346 2843 1359 2828 1359 2813 1361M2492 2059 2511 2062 2528 2058 2544 2052 2561 2043 2579 2036 2593 2032 2606 2026 2618 2020 2639 2006 2650 1994 2663 1971 2675 1949M3447 2030 3434 2045 3421 2059 3407 2079 3402 2095 3395 2109 3387 2127 3376 2143M1643 1853 1664 1837 1672 1823 1685 1815 1695 1804 1710 1797 1724 1789 1738 1783 1754 1772 1770 1764 1787 1759M3241 1100 3259 1103 3278 1108 3298 1104 3312 1091 3328 1080 3345 1078 3362 1072 3380 1065 3399 1058 3414 1054 3430 1055 3453 1047 3476 1037M2389 1758 2403 1753 2417 1746 2436 1745 2455 1742 2473 1738 2490 1736M2339 1081 2335 1067 2330 1054 2325 1041 2327 1026 2328 1012 2329 994 2333 973 2331 957 2319 944 2309 929 2296 922 2284 914 2271 907M1734 2026 1749 2034 1761 2044 1778 2053 1793 2063 1808 2084M2994 1821 3005 1832 3018 1841 3031 1853 3045 1864 3051 1876 3059 1889 3065 1901M1667 1040 1681 1049 1695 1058 1717 1068 1729 1077 1741 1084 1754 1092 1766 1103 1775 1117 1786 1126 1796 1138 1808 1146 1817 1157 1825 1169 1838 1177 1850 1184 1861 1194 1876 1197 1889 1202 1904 1203M1879 1947 1862 1939 1843 1935 1820 1927 1806 1927 1791 1930 1776 1930 1757 1926 1737 1925 1720 1924 1704 1926 1685 1918 1668 1909M2715 1366 2700 1375 2685 1385 2666 1394 2648 1404 2624 1408 2606 1422M2373 1693 2377 1674 2385 1662 2396 1651 2402 1637 2408 1623 2408 1608 2413 1594M3090 1647 3090 1630 3090 1610 3093 1591 3087 1573 3084 1554 3088 1533 3092 1516 3099 1499 3105 1479M2053 1887 2059 1873 2062 1857 2065 1840 2065 1825 2066 1810 2062 1790 2059 1771 2054 1756 2048 1742 2035 1726M1742 1951 1734 1977 1727 1995 1731 2010 1730 2025 1733 2040 1737 2058 1741 2077 1742 2096 1751 2110 1757 2125 1765 2138 1774 2150M1605 1042 1621 1039 1637 1039 1655 1033 1674 1027 1687 1021 1701 1018 1714 1011 1734 1009 1753 1006 1775 1014 1795 1011 1811 1004M1663 1659 1678 1644 1691 1629 1709 1619 1728 1612 1742 1609 1755 1603 1769 1600 1786 1598 1808 1592 1818 1582 1830 1575 1841 1566M2534 1217 2548 1211 2561 1204 2574 1197 2585 1185 2599 1164 2611 1157 2623 1149 2634 1140 2650 1136M3069 1838 3052 1829 3040 1820 3030 1810 3019 1800 3005 1781 2995 1765 2984 1749 2964 1735 2947 1729M2486 1201 2481 1221 2472 1240 2466 1253 2462 1267 2459 1280 2448 1296 2434 1307M2748 1442 2756 1429 2760 1415 2767 1403 2772 1388 2772 1373 2768 1359 2768 1344 2762 1323 2747 1302 2733 1290 2720 1277M1910 1534 1932 1526 1950 1518 1965 1505 1982 1494 1996 1480 2013 1462 2030 1455M3436 1069 3452 1067 3467 1062 3486 1063 3499 1069 3513 1075 3527 1079 3549 1085 3571 1086 3598 1084 3617 1077 3635 1067 3654 1068M2789 1523 2774 1527 2759 1528 2744 1527 2730 1529 2717 1535 2695 1532 2676 1529 2658 1533 2639 1534 2618 1532M1717 1105 1706 1089 1692 1078 1676 1069 1660 1056 1647 1048 1635 1039 1624 1028 1618 1015 1609 1005 1603 991M2557 1412 2550 1425 2541 1437 2542 1451 2538 1465 2537 1479 2536 1499 2535 1520 2539 1540 2535 1566 2540 1592 2541 1607 2543 1621 2543 1635M2551 1144 2554 1124 2554 1103 2557 1083 2559 1062 2558 1044 2561 1030 2562 1015 2554 997 2550 978M1823 1289 1840 1293 1860 1294 1880 1293 1896 1284 1916 1279 1927 1267 1940 1256 1951 1245 1963 1236 1979 1228M3228 1847 3243 1852 3259 1855 3275 1864 3296 1868 3316 1869M2601 1270 2602 1289 2604 1307 2613 1325 2619 1344 2619 1370 2618 1391 2621 1411 2621 1437 2615 1455 2606 1472 2600 1494 2598 1508 2597 1522M3441 1950 3457 1946 3472 1943 3486 1939 3500 1938 3522 1944 3539 1948 3556 1950 3571 1951 3587 1951 3612 1940M2531 1027 2536 1040 2541 1053 2548 1066 2553 1085 2559 1104 2558 1124 2555 1145 2559 1162 2567 1177 2576 1192 2587 1206 2599 1216 2610 1227M3332 1734 3343 1753 3358 1764 3375 1773 3390 1772 3405 1776 3419 1775 3432 1780 3445 1786 3457 1793 3473 1795 3490 1795 3502 1802 3515 1808M2544 2045 2560 2030 2565 2015 2573 2001 2583 1988 2596 1977 2609 1966 2621 1953 2629 1937 2639 1922 2647 1908 2654 1894 2662 1882 2671 1870M2159 1287 2162 1302 2163 1317 2165 1331 2170 1344 2173 1359 2175 1373 2184 1384 2192 1396 2199 1409 2216 1427 2233 1439 2250 1450 2266 1455 2282 1454 2297 1450M2724 1412 2716 1400 2706 1390 2698 1374 2687 1364 2678 1353 2669 1341 2659 1324 2644 1304 2634 1290 2628 1274 2627 1254 2623 1235M2555 1872 2550 1856 2546 1840 2544 1822 2541 1804 2537 1786 2531 1772 2527 1756 2510 1736 2506 1717M3190 1331 3178 1324 3167 1314 3153 1303 3137 1293 3112 1283M2627 1455 2616 1465 2606 1476 2592 1491 2582 1507 2573 1521 2563 1534 2559 1547 2556 1561 2554 1575 2552 1595 2552 1616 2547 1629 2542 1643 2536 1656 2534 1684M3306 1015 3325 1030 3343 1046 3351 1057 3361 1067 3369 1084 3375 1101 3383 1114 3388 1127 3401 1139 3417 1148 3429 1157M1696 1272 1685 1283 1671 1292 1655 1304 1637 1315 1623 1318 1608 1319 1591 1322 1575 1325 1551 1317 1532 1309 1513 1304 1489 1304M3436 1975 3413 1970 3398 1970 3384 1965 3370 1966 3355 1964 3340 1962 3326 1962M2772 1619 2780 1600 2784 1584 2784 1567 2789 1542 2800 1528 2811 1516M1647 1487 1653 1472 1661 1458 1681 1441 1688 1427 1688 1407 1691 1391 1696 1376M3231 2057 3204 2053 3185 2057 3166 2056 3147 2063M2564 1972 2554 1957 2541 1945 2530 1929 2512 1915M1629 1743 1634 1723 1640 1708 1642 1681 1648 1666 1646 1644 1639 1625 1633 1606M1578 2023 1563 2025 1549 2028 1535 2031 1521 2035 1506 2036 1492 2039 1468 2050 1447 2055 1428 2065 1409 2071 1391 2079 1373 2088M2031 1206 2027 1227 2023 1247 2021 1273 2023 1293 2024 1314 2028 1331 2033 1347M3403 1499 3417 1485 3429 1466 3432 1448 3432 1431 3431 1411 3433 1394 3432 1374 3429 1354 3422 1342 3416 1329M3164 1950 3185 1968 3194 1981 3206 1992 3218 2001 3230 2010 3249 2015 3268 2024 3281 2030 3292 2039 3305 2045M3473 1704 3447 1713 3430 1719 3412 1719 3394 1722 3377 1732 3359 1741 3340 1746 3322 1750M1621 1848 1633 1861 1650 1871 1669 1879 1686 1883 1702 1890M1774 1664 1757 1676 1741 1683 1725 1694 1708 1705 1689 1722 1675 1726 1662 1732 1646 1737 1629 1740 1615 1738 1600 1737 1586 1734M1903 1434 1907 1407 1914 1390 1919 1373 1919 1352 1922 1332 1919 1316 1919 1299 1912 1282 1914 1263 1912 1245 1916 1229 1911 1209M1945 1359 1933 1371 1919 1381 1903 1386 1888 1389 1874 1395 1862 1404M2561 2092 2552 2081 2548 2062 2540 2044 2532 2030 2528 2014 2526 1997 2513 1979 2497 1968 2480 1959 2467 1954 2453 1950 2439 1948M2998 1103 3000 1087 3003 1070 3003 1055 2999 1040 2994 1026 2992 1012 2987 998 2979 974 2975 957 2967 941 2967 924 2968 907M2538 1799 2541 1813 2546 1826 2549 1840 2560 1856 2572 1871 2588 1879 2604 1887 2620 1903 2629 1915 2641 1924 2650 1936 2660 1948 2668 1962 2680 1973 2703 1988M1951 1368 1961 1378 1970 1390 1978 1403 1984 1421 1986 1439 1991 1456 2002 1471 2010 1487 2020 1507 2026 1524 2031 1538 2038 1551 2044 1564M2860 1184 2878 1188 2904 1188 2920 1183 2938 1172 2951 1168 2965 1163 2984 1147M2462 1430 2473 1439 2486 1446 2493 1459 2499 1472 2505 1496M2978 1313 2966 1298 2954 1283 2935 1266 2912 1259 2895 1253 2879 1244 2864 1234 2851 1224 2833 1218 2814 1216M1614 1468 1629 1476 1643 1487 1652 1498 1659 1510 1668 1521 1684 1532 1699 1544 1710 1559 1721 1574 1736 1588M3143 1379 3125 1388 3106 1395 3093 1405 3083 1422 3073 1439 3061 1447 3049 1456 3037 1465 3025 1476 3010 1500 2999 1510 2987 1519 2978 1531M2718 1740 2729 1748 2742 1755 2751 1770 2764 1776 2775 1785 2792 1790 2810 1794M1571 1992 1584 1973 1594 1961 1605 1951 1621 1931 1630 1916 1641 1902 1653 1895 1663 1884 1675 1877 1688 1857 1697 1844 1705 1830M2231 1232 2255 1247 2268 1257 2283 1265 2309 1272 2326 1278 2341 1288 2355 1300M2200 1778 2191 1765 2180 1755 2168 1735 2155 1718 2140 1704 2121 1696 2109 1689 2097 1681 2079 1680 2063 1676M2277 1686 2267 1696 2257 1706 2246 1725 2228 1736 2207 1742 2190 1743 2173 1741 2156 1746 2139 1751 2117 1753M2442 1640 2436 1624 2431 1609 2413 1588 2400 1582 2387 1577 2375 1567 2364 1556 2353 1540 2343 1524 2331 1516 2318 1509 2306 1499 2294 1486 2283 1462M1893 2133 1874 2131 1855 2132 1835 2140 1821 2148M2702 1253 2701 1267 2701 1281 2704 1295 2712 1308 2717 1322 2724 1335 2737 1349 2750 1371 2762 1387 2774 1402 2779 1420 2788 1437 2805 1452 2817 1460 2832 1465M2569 1422 2544 1428 2528 1433 2513 1441 2504 1451 2494 1462 2485 1472 2474 1495 2464 1508 2452 1515 2439 1520 2424 1522 2409 1524M1707 1306 1712 1323 1716 1340 1714 1357 1713 1373 1717 1387 1719 1402 1720 1417 1718 1440 1718 1456M3466 1576 3451 1573 3431 1576 3411 1577 3385 1576M2475 1188 2478 1174 2484 1161 2489 1147 2498 1123 2507 1100 2506 1083 2507 1066 2500 1048 2496 1028 2494 1003M2461 2106 2449 2128 2448 2143 2449 2157 2442 2172 2440 2189 2437 2206 2439 2230M2522 1311 2505 1301 2494 1293 2484 1282 2473 1273 2465 1257 2446 1237 2435 1223 2427 1205 2420 1187 2407 1173 2396 1156M1836 1087 1851 1088 1866 1087 1891 1091 1918 1096 1942 1090 1956 1085 1970 1078 1983 1071M2486 1435 2477 1452 2474 1473 2471 1493 2462 1519 2458 1538 2453 1556M3342 1693 3356 1706 3370 1717 3382 1726 3391 1737 3401 1747 3412 1757 3425 1763 3436 1771 3450 1782 3464 1790 3480 1794 3497 1813 3509 1838 3510 1855M2492 2061 2487 2079 2484 2098 2477 2119 2479 2135 2482 2156 2487 2176 2492 2191 2499 2204M1756 1287 1772 1294 1786 1310 1802 1323 1817 1334 1832 1340 1847 1343M3239 1756 3255 1743 3271 1731 3276 1717 3284 1704 3295 1688 3304 1670 3308 1650 3313 1630M3088 1105 3078 1080 3081 1059 3080 1038 3071 1016 3065 992 3057 976 3053 958 3052 938M1602 1250 1576 1249 1558 1251 1541 1253 1522 1248M3441 1679 3448 1696 3455 1713 3458 1732 3459 1751 3463 1770 3470 1788 3466 1802 3464 1816 3465 1831 3466 1847 3458 1864 3459 1879 3461 1893M2818 1914 2812 1932 2803 1948 2802 1964 2808 1980 2814 1994 2818 2010 2827 2021 2837 2032 2845 2044 2859 2058 2876 2065 2892 2074 2905 2089M1622 1919 1627 1932 1630 1945 1635 1959 1634 1985 1637 2004 1642 2023 1652 2037 1664 2050 1682 2058 1701 2065 1712 2078 1725 2090M2236 1271 2220 1276 2204 1282 2186 1295 2177 1306 2167 1316 2158 1335 2148 1349 2136 1361 2127 1373 2120 1386 2114 1400M1980 1673 1982 1692 1988 1709 2004 1721 2019 1736 2040 1748 2051 1758 2065 1763 2076 1773M1971 1063 1971 1044 1974 1025 1982 1006 1992 995 2004 986 2014 975 2023 962 2027 948 2030 933 2031 918 2028 905 2025 891 2019 878 2008 863 1997 848 1980 838M2871 1108 2856 1123 2842 1138 2826 1143 2810 1153 2794 1164 2779 1170 2759 1178 2742 1186 2734 1199 2723 1209 2716 1222 2708 1241 2698 1259M1796 1576 1817 1584 1832 1592 1848 1597 1861 1605 1875 1609 1888 1616 1906 1627 1924 1634 1935 1648 1939 1668 1942 1688M3424 1266 3446 1269 3462 1264 3488 1256 3513 1250 3527 1239 3540 1227 3553 1219 3566 1210 3582 1201 3597 1192 3618 1190 3638 1190M2938 1472 2932 1491 2920 1508 2909 1526 2893 1539 2877 1553 2858 1564 2846 1573 2834 1581 2820 1588 2804 1596 2786 1601M3460 1975 3455 1956 3452 1937 3456 1921 3465 1898M2801 1649 2802 1667 2804 1686 2799 1700 2796 1715 2792 1729 2785 1743 2780 1757 2780 1774 2777 1791 2769 1816 2755 1839 2746 1853 2736 1867M2860 1381 2853 1369 2842 1359 2836 1346 2829 1325 2830 1304 2829 1284 2828 1267 2824 1251 2825 1236 2823 1221 2821 1207 2812 1190 2803 1174 2790 1157M1889 1433 1886 1419 1885 1404 1886 1385 1884 1365 1890 1345 1899 1326 1897 1300M3156 1965 3171 1987 3182 2001 3194 2013 3210 2031 3222 2051M2121 1528 2135 1541 2151 1552 2163 1568 2174 1591 2183 1611 2197 1633 2207 1645 2221 1652 2233 1663 2253 1666M2938 1325 2937 1340 2932 1353 2929 1368 2924 1382 2927 1400 2920 1423M3059 2086 3053 2069 3047 2052 3032 2029 3026 2010 3017 1992 3004 1970 2996 1957 2990 1945 2985 1931 2973 1922 2964 1910 2954 1900M2926 1441 2923 1423 2918 1397 2914 1383 2910 1369 2904 1356 2902 1337 2898 1318 2888 1306 2881 1291M3353 1828 3340 1839 3327 1853 3314 1861 3301 1877 3290 1887 3281 1898 3271 1908 3257 1929M2306 1544 2319 1553 2335 1565 2352 1577 2366 1580 2378 1587M3141 1237 3132 1254 3120 1269 3104 1280 3092 1291M2763 1380 2772 1393 2783 1404 2794 1417 2807 1429 2819 1442M2137 1467 2146 1445 2159 1430 2174 1417 2194 1407 2206 1396 2226 1379 2236 1368 2248 1359 2269 1343 2289 1336M3323 1657 3340 1654 3359 1659 3378 1665 3399 1661 3419 1656 3433 1650 3445 1641 3458 1634M2733 1480 2737 1464 2741 1447 2743 1430 2737 1411 2732 1391 2722 1378 2710 1366M1910 2089 1893 2084 1878 2075 1857 2063 1838 2056 1819 2052 1804 2053 1790 2054 1776 2056M1961 1121 1975 1145 1983 1166 1980 1184 1982 1201M1862 1069 1854 1057 1844 1047 1836 1028 1827 1009 1825 991 1823 973M2941 1367 2933 1385 2923 1396 2913 1406 2905 1419 2896 1432 2888 1447 2881 1463 2878 1478 2875 1494 2879 1508 2881 1522 2881 1550M2863 1137 2876 1120 2889 1110 2898 1099 2902 1084 2909 1071M1600 1923 1613 1903 1619 1888 1625 1873 1637 1856M2465 1906 2469 1883 2474 1865 2469 1845 2455 1825M1895 1415 1874 1412 1852 1403 1837 1401 1821 1403 1806 1410 1792 1416 1776 1419 1759 1421M2448 1042 2430 1040 2412 1042 2392 1042 2372 1045 2356 1055 2340 1063M2969 1425 2957 1409 2943 1395 2939 1381 2933 1367 2921 1354M3246 1140 3221 1139 3206 1143 3190 1147 3173 1162 3150 1167 3135 1172 3121 1174 3106 1176 3088 1170 3070 1168 3049 1162M1748 1127 1764 1134 1780 1141 1799 1143 1817 1146 1840 1141 1861 1124 1879 1110 1896 1105 1918 1101 1937 1098 1956 1097M2924 1075 2928 1093 2937 1110 2945 1127 2962 1144 2980 1152 2998 1157 3016 1166 3030 1171 3044 1171 3058 1177 3071 1185M3073 1176 3049 1183 3032 1196 3017 1216 3004 1223 2989 1228 2976 1235M3079 1567 3061 1561 3044 1553 3026 1542 3010 1530 2994 1518 2983 1503 2973 1480M1876 2140 1865 2120 1858 2097 1850 2085 1839 2075 1830 2059 1823 2043 1804 2025 1794 2014 1788 2001 1778 1990 1768 1975 1756 1960 1748 1944 1738 1931M2775 1082 2784 1064 2793 1046 2796 1030 2799 1014 2803 993 2810 974 2814 960 2818 946 2824 933 2835 921M2834 1467 2822 1443 2809 1431 2796 1420 2784 1398 2776 1380 2767 1362 2765 1347M2501 1021 2513 1032 2528 1040 2549 1054 2573 1061 2588 1070 2600 1081 2617 1088 2634 1092 2652 1095M2411 1781 2414 1764 2413 1747 2413 1726 2411 1705 2407 1680M1854 1199 1842 1207 1830 1216 1817 1222 1799 1239 1781 1245 1763 1253 1743 1257 1723 1263 1697 1258 1678 1263 1658 1269 1641 1283M2646 1776 2637 1763 2632 1748 2628 1733 2628 1718 2626 1704 2619 1691 2617 1676 2620 1659 2623 1642 2619 1625 2614 1609 2608 1596 2603 1582 2599 1568 2591 1553 2584 1537 2575 1512M2564 1799 2579 1789 2594 1779 2604 1761 2613 1743 2628 1731 2645 1714 2658 1700 2669 1690 2681 1681M3378 1570 3394 1566 3409 1560 3425 1557 3443 1552 3460 1544 3483 1539 3507 1541M2606 1498 2619 1491 2631 1482 2643 1475 2656 1467 2670 1463 2696 1464 2718 1475 2729 1486 2739 1497 2753 1503 2768 1507 2784 1521 2792 1536M2155 1615 2151 1601 2145 1587 2140 1574 2138 1548 2141 1525M3269 1561 3255 1551 3241 1539 3220 1527 3211 1515 3200 1506 3187 1499 3174 1494 3161 1488 3148 1481 3135 1472 3118 1464M3271 1054 3269 1069 3267 1085 3260 1103 3255 1121 3252 1147 3246 1161 3237 1173 3232 1190 3227 1206 3224 1225 3224 1244 3233 1262 3240 1281M2649 1419 2669 1422 2690 1423 2706 1431 2723 1442 2739 1453 2749 1468 2761 1482 2766 1501M1903 1854 1909 1827 1921 1813 1932 1798 1945 1775M3106 1414 3111 1428 3117 1443 3121 1456 3121 1470 3125 1484 3139 1505 3162 1520" fill="none" stroke="#cbcbc6" stroke-width="1.5" stroke-linejoin="round" opacity="0.7"/><path d="M1566 1700C1568 1700 1576 1701 1581 1701C1586 1701 1590 1701 1595 1701C1600 1701 1605 1700 1610 1700C1615 1700 1619 1703 1623 1704C1627 1706 1632 1706 1636 1708C1640 1710 1642 1714 1645 1717C1647 1721 1649 1725 1651 1728C1654 1731 1656 1735 1660 1737C1664 1739 1669 1737 1673 1738C1678 1738 1682 1740 1687 1740C1691 1740 1696 1740 1700 1740C1704 1740 1709 1739 1713 1740C1718 1740 1722 1740 1727 1740C1731 1740 1735 1740 1740 1740C1745 1740 1750 1741 1755 1740C1760 1740 1765 1738 1771 1737C1776 1737 1782 1736 1786 1738C1790 1740 1793 1747 1796 1752C1800 1756 1803 1762 1806 1766C1809 1770 1811 1773 1814 1777C1817 1781 1820 1785 1823 1788C1825 1792 1827 1797 1830 1800C1833 1803 1838 1805 1843 1807C1847 1809 1853 1809 1857 1811C1862 1813 1867 1815 1870 1818C1873 1821 1872 1827 1873 1831C1874 1836 1877 1841 1876 1845C1875 1849 1870 1852 1866 1856C1863 1859 1856 1862 1856 1866C1856 1870 1862 1876 1864 1881C1866 1886 1867 1893 1870 1896C1873 1899 1878 1895 1882 1896C1886 1897 1890 1899 1894 1900C1898 1900 1902 1899 1906 1899C1910 1900 1914 1902 1918 1902C1922 1903 1926 1902 1930 1902C1934 1902 1938 1903 1943 1903C1947 1904 1951 1904 1955 1905C1960 1905 1964 1906 1968 1906C1972 1906 1977 1907 1981 1907C1985 1908 1989 1908 1994 1909C1998 1910 2003 1910 2006 1912C2009 1914 2012 1918 2014 1921C2017 1923 2020 1926 2023 1929C2026 1932 2029 1934 2032 1937C2035 1940 2039 1942 2042 1944C2045 1947 2047 1950 2050 1953C2053 1955 2057 1958 2060 1960C2063 1963 2066 1965 2069 1968C2072 1971 2074 1974 2077 1977C2080 1980 2084 1982 2087 1984C2090 1987 2092 1990 2096 1992C2100 1994 2108 1994 2113 1995C2119 1996 2125 1998 2130 2000C2135 2002 2137 2003 2141 2005C2144 2007 2148 2009 2152 2011C2155 2013 2159 2014 2163 2016C2166 2017 2170 2019 2174 2020C2178 2022 2181 2023 2185 2025C2189 2027 2192 2030 2196 2032C2200 2034 2205 2036 2209 2038C2213 2040 2216 2044 2220 2045C2224 2046 2230 2046 2235 2046C2240 2046 2247 2046 2250 2046" fill="none" stroke="#8c8c8c" stroke-width="2.2" stroke-linecap="round" stroke-linejoin="round" opacity="0.85"/><path d="M1731 1003C1732 1005 1735 1012 1738 1017C1740 1021 1742 1025 1745 1030C1747 1034 1748 1039 1752 1043C1756 1047 1761 1049 1766 1053C1770 1056 1774 1062 1779 1064C1784 1066 1788 1067 1793 1068C1798 1068 1803 1068 1808 1069C1813 1070 1818 1070 1822 1072C1826 1074 1828 1078 1830 1081C1833 1084 1834 1090 1838 1091C1842 1092 1847 1090 1852 1089C1857 1088 1861 1086 1866 1085C1871 1084 1876 1081 1880 1083C1884 1085 1885 1091 1889 1094C1892 1098 1897 1102 1899 1104" fill="none" stroke="#8c8c8c" stroke-width="2.2" stroke-linecap="round" stroke-linejoin="round" opacity="0.85"/><path d="M1912 1134C1910 1137 1903 1147 1899 1152C1895 1157 1894 1159 1891 1162C1888 1166 1885 1169 1883 1173C1881 1177 1880 1184 1880 1189C1880 1194 1884 1198 1885 1202C1886 1207 1886 1211 1888 1216C1890 1221 1897 1228 1899 1235C1901 1242 1901 1250 1899 1256C1897 1262 1893 1265 1890 1270C1887 1274 1884 1278 1880 1283C1876 1288 1868 1296 1867 1301C1866 1306 1871 1309 1873 1312C1875 1316 1876 1318 1880 1323C1884 1328 1890 1336 1894 1341C1898 1346 1900 1349 1903 1353C1906 1357 1910 1361 1912 1365C1914 1369 1916 1372 1917 1376C1918 1380 1917 1385 1918 1389C1919 1393 1922 1396 1923 1400C1924 1404 1922 1408 1923 1413C1924 1417 1926 1421 1927 1425C1927 1429 1926 1433 1926 1438C1926 1442 1927 1446 1928 1450C1929 1454 1930 1458 1930 1462C1930 1467 1930 1473 1930 1475" fill="none" stroke="#8c8c8c" stroke-width="2.2" stroke-linecap="round" stroke-linejoin="round" opacity="0.85"/><path d="M1654 1123C1656 1124 1662 1129 1666 1132C1670 1135 1674 1139 1678 1142C1681 1145 1688 1148 1689 1152C1690 1156 1686 1163 1684 1168C1683 1174 1680 1179 1678 1184C1676 1189 1674 1193 1672 1197C1669 1201 1666 1205 1663 1209C1661 1213 1661 1219 1659 1223C1657 1227 1652 1233 1651 1235" fill="none" stroke="#8c8c8c" stroke-width="2.2" stroke-linecap="round" stroke-linejoin="round" opacity="0.85"/><path d="M1686 1256C1685 1258 1681 1263 1678 1266C1675 1269 1673 1272 1670 1275C1667 1278 1663 1281 1662 1285C1661 1289 1665 1294 1666 1298C1668 1302 1670 1306 1672 1311C1674 1315 1677 1319 1678 1323C1679 1327 1678 1332 1678 1336C1678 1340 1678 1344 1677 1349C1676 1353 1675 1357 1674 1361C1674 1366 1674 1370 1673 1374C1673 1379 1673 1383 1673 1387C1672 1391 1670 1396 1672 1400C1674 1404 1680 1408 1685 1411C1690 1415 1696 1417 1700 1420C1704 1423 1708 1425 1712 1427C1716 1429 1720 1431 1724 1433C1728 1435 1731 1437 1735 1440C1739 1442 1744 1443 1747 1445C1751 1448 1754 1452 1758 1454C1762 1457 1766 1458 1770 1460C1774 1462 1777 1464 1781 1466C1785 1468 1788 1470 1792 1472C1796 1474 1800 1474 1803 1477C1807 1479 1810 1482 1813 1484C1817 1487 1821 1487 1825 1489C1829 1491 1832 1493 1836 1495C1840 1497 1844 1500 1847 1503C1850 1506 1852 1510 1856 1513C1859 1516 1862 1519 1865 1522C1869 1525 1873 1527 1876 1530C1879 1533 1880 1537 1881 1541C1882 1545 1881 1550 1882 1553C1883 1557 1884 1561 1886 1565C1888 1569 1892 1572 1895 1575C1897 1579 1900 1583 1902 1586C1905 1590 1906 1595 1908 1599C1911 1603 1913 1606 1916 1610C1919 1613 1924 1618 1925 1620" fill="none" stroke="#8c8c8c" stroke-width="2.2" stroke-linecap="round" stroke-linejoin="round" opacity="0.85"/><path d="M2005 1503C2006 1505 2009 1511 2010 1515C2011 1519 2010 1524 2011 1528C2012 1532 2014 1536 2016 1540C2018 1544 2023 1550 2026 1555C2029 1560 2031 1566 2034 1570C2037 1574 2039 1577 2042 1580C2045 1584 2049 1586 2051 1590C2054 1593 2056 1597 2059 1601C2062 1604 2065 1606 2068 1610C2071 1614 2072 1618 2075 1622C2078 1626 2081 1629 2084 1633C2086 1637 2087 1642 2089 1646C2091 1650 2094 1653 2096 1657C2099 1661 2102 1664 2105 1668C2107 1672 2110 1676 2112 1680C2114 1684 2116 1689 2118 1693C2120 1698 2121 1703 2123 1707C2125 1711 2126 1716 2130 1720C2134 1724 2140 1726 2145 1728C2150 1731 2155 1733 2160 1735C2165 1737 2169 1737 2173 1738C2178 1738 2182 1739 2186 1740C2191 1740 2196 1739 2200 1740C2204 1741 2208 1743 2212 1744C2216 1744 2220 1744 2224 1744C2228 1744 2232 1745 2236 1746C2240 1747 2244 1748 2248 1749C2252 1750 2256 1751 2260 1752C2264 1753 2269 1752 2273 1752C2278 1753 2282 1755 2287 1755C2291 1756 2295 1756 2300 1757C2304 1757 2309 1758 2313 1759C2318 1759 2322 1760 2327 1760C2331 1760 2338 1760 2340 1760" fill="none" stroke="#8c8c8c" stroke-width="2.2" stroke-linecap="round" stroke-linejoin="round" opacity="0.85"/><path d="M2340 1760C2342 1760 2348 1761 2352 1761C2356 1761 2360 1760 2364 1760C2368 1760 2372 1760 2376 1760C2380 1760 2384 1760 2388 1760C2392 1760 2396 1759 2400 1760C2404 1761 2409 1763 2414 1764C2418 1766 2423 1767 2427 1769C2431 1771 2436 1773 2440 1775C2444 1777 2447 1781 2450 1783C2453 1786 2456 1789 2460 1792C2463 1795 2467 1797 2470 1800C2473 1803 2474 1807 2476 1810C2478 1814 2481 1817 2484 1820C2486 1823 2489 1828 2490 1830" fill="none" stroke="#8c8c8c" stroke-width="2.2" stroke-linecap="round" stroke-linejoin="round" opacity="0.85"/><path d="M2490 1830C2491 1832 2493 1838 2494 1842C2495 1846 2497 1850 2498 1854C2499 1858 2499 1862 2501 1866C2502 1870 2504 1874 2506 1878C2508 1882 2509 1886 2510 1890C2511 1894 2512 1899 2513 1904C2514 1909 2514 1913 2514 1918C2515 1923 2514 1927 2515 1932C2515 1937 2517 1941 2518 1946C2518 1951 2519 1955 2520 1960C2521 1965 2521 1969 2522 1974C2523 1978 2526 1982 2527 1987C2528 1991 2530 1996 2530 2000C2530 2004 2529 2008 2528 2012C2528 2017 2526 2021 2526 2025C2526 2029 2528 2033 2527 2038C2527 2042 2525 2046 2524 2050C2523 2054 2523 2058 2523 2062C2522 2067 2521 2071 2521 2075C2521 2079 2523 2083 2522 2088C2522 2092 2521 2096 2520 2100C2519 2104 2519 2109 2518 2114C2516 2118 2513 2122 2512 2126C2511 2131 2511 2136 2510 2140C2509 2145 2509 2149 2507 2153C2506 2158 2504 2162 2503 2167C2502 2171 2500 2178 2500 2180" fill="none" stroke="#8c8c8c" stroke-width="2.2" stroke-linecap="round" stroke-linejoin="round" opacity="0.85"/><path d="M2900 1600C2902 1599 2907 1595 2910 1592C2913 1589 2917 1587 2920 1584C2924 1582 2927 1579 2930 1576C2933 1573 2936 1570 2939 1567C2943 1564 2947 1563 2950 1560C2953 1557 2957 1555 2960 1552C2963 1549 2966 1546 2969 1543C2973 1540 2977 1539 2980 1536C2984 1534 2986 1530 2990 1528C2993 1525 2996 1523 3000 1520C3004 1517 3008 1514 3011 1511C3014 1508 3017 1504 3020 1500C3023 1497 3027 1494 3030 1490C3034 1487 3037 1483 3040 1480C3043 1477 3046 1474 3050 1472C3053 1469 3057 1467 3060 1464C3064 1462 3067 1460 3071 1457C3074 1454 3077 1451 3080 1448C3083 1445 3087 1445 3090 1440C3093 1435 3098 1423 3100 1420" fill="none" stroke="#8c8c8c" stroke-width="2.2" stroke-linecap="round" stroke-linejoin="round" opacity="0.85"/><path d="M2500 1520C2500 1522 2500 1529 2499 1533C2499 1538 2499 1542 2499 1547C2499 1551 2500 1556 2501 1560C2501 1564 2501 1569 2501 1573C2501 1578 2501 1582 2501 1587C2501 1591 2500 1596 2500 1600C2500 1604 2501 1608 2501 1613C2501 1617 2502 1621 2502 1625C2503 1629 2503 1633 2503 1638C2504 1642 2504 1646 2505 1650C2505 1654 2506 1658 2507 1662C2507 1667 2508 1671 2508 1675C2508 1679 2507 1683 2508 1688C2508 1692 2509 1696 2510 1700C2511 1704 2511 1709 2511 1713C2512 1718 2514 1722 2515 1726C2515 1731 2515 1735 2516 1740C2516 1744 2517 1749 2517 1753C2518 1758 2518 1762 2519 1767C2519 1771 2520 1778 2520 1780" fill="none" stroke="#8c8c8c" stroke-width="2.2" stroke-linecap="round" stroke-linejoin="round" opacity="0.85"/><path d="M1566 1150C1568 1151 1574 1156 1579 1159C1583 1161 1588 1164 1592 1166C1597 1168 1602 1170 1607 1172C1611 1175 1615 1178 1620 1180C1625 1182 1630 1182 1635 1184C1640 1186 1645 1188 1650 1190C1655 1192 1660 1193 1665 1195C1670 1196 1676 1197 1680 1200C1684 1203 1684 1209 1687 1213C1690 1217 1694 1220 1697 1224C1699 1227 1702 1232 1704 1236C1707 1240 1709 1244 1712 1248C1714 1252 1717 1256 1720 1260C1723 1264 1726 1268 1729 1271C1732 1274 1736 1277 1740 1280C1744 1283 1747 1286 1751 1289C1754 1293 1758 1298 1760 1300" fill="none" stroke="#f0c58e" stroke-width="2.6" stroke-linecap="round" stroke-linejoin="round" /><path d="M1760 1200C1761 1202 1766 1208 1768 1213C1770 1217 1770 1223 1772 1227C1774 1232 1776 1236 1779 1240C1782 1245 1785 1249 1788 1253C1790 1257 1791 1262 1793 1267C1795 1271 1798 1275 1800 1280C1802 1285 1803 1290 1804 1295C1805 1300 1806 1305 1807 1310C1808 1315 1809 1320 1810 1325C1812 1330 1815 1335 1817 1340C1818 1344 1820 1349 1821 1355C1821 1360 1820 1365 1821 1370C1822 1375 1825 1380 1827 1385C1828 1390 1828 1395 1830 1400C1832 1405 1836 1409 1839 1413C1843 1416 1848 1419 1852 1423C1855 1427 1857 1432 1860 1436C1863 1440 1866 1445 1869 1449C1873 1453 1878 1458 1880 1460" fill="none" stroke="#f0c58e" stroke-width="2.6" stroke-linecap="round" stroke-linejoin="round" /><path d="M1950 1050C1952 1052 1959 1057 1963 1060C1968 1063 1972 1065 1977 1068C1982 1070 1988 1070 1993 1072C1998 1075 2002 1078 2007 1081C2011 1083 2016 1087 2020 1090C2024 1093 2027 1096 2031 1099C2035 1102 2039 1104 2043 1107C2048 1109 2051 1112 2056 1115C2060 1117 2064 1119 2068 1121C2072 1124 2076 1127 2080 1130C2084 1133 2089 1134 2094 1136C2098 1138 2103 1140 2108 1142C2113 1144 2117 1147 2122 1148C2127 1150 2132 1151 2137 1153C2141 1155 2145 1158 2150 1160C2155 1162 2160 1165 2165 1167C2170 1170 2175 1172 2180 1175C2185 1177 2190 1181 2195 1183C2200 1186 2207 1189 2210 1190" fill="none" stroke="#f0c58e" stroke-width="2.6" stroke-linecap="round" stroke-linejoin="round" /><path d="M2260 1160C2262 1159 2270 1154 2275 1152C2280 1149 2285 1148 2290 1145C2295 1143 2300 1140 2305 1137C2310 1135 2315 1132 2320 1130C2325 1128 2330 1125 2335 1123C2340 1120 2345 1118 2350 1115C2355 1113 2359 1109 2364 1106C2369 1103 2375 1102 2380 1100C2385 1098 2390 1094 2396 1092C2402 1090 2408 1090 2414 1088C2420 1086 2425 1082 2430 1080C2435 1078 2440 1076 2445 1075C2450 1073 2455 1071 2460 1070C2465 1070 2470 1070 2476 1069C2481 1068 2488 1064 2490 1063" fill="none" stroke="#f0c58e" stroke-width="2.6" stroke-linecap="round" stroke-linejoin="round" /><path d="M2200 1260C2202 1261 2208 1265 2213 1267C2217 1270 2221 1272 2225 1275C2229 1277 2232 1281 2236 1284C2240 1286 2245 1288 2249 1291C2253 1294 2256 1298 2260 1300C2264 1302 2271 1302 2276 1303C2281 1305 2285 1307 2290 1310C2295 1312 2299 1315 2304 1317C2309 1318 2315 1320 2320 1320C2325 1320 2331 1318 2336 1317C2342 1316 2347 1315 2352 1313C2357 1311 2362 1308 2368 1307C2373 1305 2379 1305 2384 1304C2389 1303 2395 1301 2400 1300C2405 1299 2409 1298 2414 1297C2419 1296 2423 1295 2428 1295C2432 1294 2437 1293 2442 1292C2446 1292 2451 1291 2456 1291C2461 1290 2468 1290 2470 1290" fill="none" stroke="#f0c58e" stroke-width="2.6" stroke-linecap="round" stroke-linejoin="round" /><path d="M2130 1600C2132 1598 2137 1594 2140 1590C2144 1587 2147 1584 2151 1581C2154 1577 2158 1574 2161 1571C2164 1567 2166 1563 2170 1560C2174 1557 2179 1556 2183 1553C2187 1551 2191 1547 2195 1545C2199 1542 2203 1540 2207 1537C2211 1534 2213 1529 2217 1526C2221 1524 2226 1523 2230 1520C2234 1517 2238 1513 2242 1510C2246 1507 2251 1505 2255 1501C2259 1498 2262 1494 2266 1490C2270 1487 2275 1485 2279 1481C2283 1478 2286 1474 2290 1470C2294 1466 2298 1462 2302 1459C2307 1455 2312 1453 2317 1450C2321 1447 2328 1442 2330 1440" fill="none" stroke="#f0c58e" stroke-width="2.6" stroke-linecap="round" stroke-linejoin="round" /><path d="M2330 1440C2333 1439 2341 1436 2347 1434C2353 1432 2358 1430 2364 1428C2369 1425 2375 1422 2380 1420C2385 1418 2390 1417 2395 1415C2400 1413 2405 1411 2410 1409C2415 1407 2419 1405 2424 1403C2429 1402 2435 1401 2440 1400C2445 1399 2450 1399 2455 1398C2460 1397 2465 1396 2470 1395C2475 1394 2480 1394 2485 1394C2490 1393 2498 1391 2500 1390" fill="none" stroke="#f0c58e" stroke-width="2.6" stroke-linecap="round" stroke-linejoin="round" /><path d="M2270 1520C2272 1522 2277 1529 2281 1533C2284 1537 2288 1541 2291 1546C2294 1550 2297 1555 2300 1560C2303 1565 2306 1569 2310 1574C2313 1578 2318 1581 2321 1586C2325 1590 2327 1596 2330 1600C2333 1604 2336 1608 2340 1613C2343 1617 2347 1621 2350 1625C2354 1629 2358 1632 2361 1636C2365 1641 2369 1648 2370 1650" fill="none" stroke="#f0c58e" stroke-width="2.6" stroke-linecap="round" stroke-linejoin="round" /><path d="M2400 1500C2403 1499 2411 1494 2416 1492C2422 1490 2428 1490 2434 1488C2440 1486 2445 1482 2450 1480C2455 1478 2459 1477 2464 1477C2468 1476 2473 1478 2478 1477C2483 1476 2487 1473 2492 1472C2496 1471 2501 1471 2506 1471C2511 1471 2515 1470 2520 1470C2525 1470 2531 1470 2536 1469C2542 1468 2546 1464 2552 1463C2557 1462 2563 1462 2568 1462C2573 1461 2579 1459 2584 1458C2589 1457 2597 1455 2600 1455" fill="none" stroke="#f0c58e" stroke-width="2.6" stroke-linecap="round" stroke-linejoin="round" /><path d="M2600 1200C2602 1201 2608 1205 2613 1207C2617 1210 2621 1212 2625 1215C2630 1217 2634 1219 2638 1221C2642 1224 2646 1227 2650 1230C2654 1233 2657 1237 2662 1239C2666 1241 2672 1241 2676 1243C2680 1246 2683 1250 2687 1253C2691 1255 2695 1258 2700 1260C2705 1262 2709 1265 2714 1267C2720 1268 2725 1267 2731 1268C2736 1270 2740 1273 2745 1275C2750 1277 2757 1279 2760 1280" fill="none" stroke="#f0c58e" stroke-width="2.6" stroke-linecap="round" stroke-linejoin="round" /><path d="M2740 1010C2740 1012 2741 1019 2742 1024C2742 1029 2744 1033 2744 1038C2745 1043 2745 1047 2746 1052C2747 1057 2748 1061 2749 1066C2750 1070 2749 1075 2750 1080C2751 1085 2752 1090 2754 1095C2755 1100 2757 1105 2759 1110C2761 1115 2763 1120 2764 1125C2766 1130 2768 1135 2770 1140C2772 1145 2775 1150 2776 1155C2778 1160 2778 1165 2780 1170C2781 1175 2784 1180 2786 1185C2787 1190 2789 1197 2790 1200" fill="none" stroke="#f0c58e" stroke-width="2.6" stroke-linecap="round" stroke-linejoin="round" /><path d="M2900 1050C2903 1050 2911 1051 2916 1052C2921 1053 2927 1053 2932 1054C2937 1055 2942 1057 2948 1058C2953 1058 2959 1057 2964 1058C2969 1058 2975 1060 2980 1060C2985 1060 2990 1057 2995 1055C3000 1053 3005 1052 3010 1050C3015 1048 3020 1046 3025 1044C3030 1042 3034 1041 3040 1040C3046 1039 3053 1037 3060 1035C3067 1033 3077 1031 3080 1030" fill="none" stroke="#f0c58e" stroke-width="2.6" stroke-linecap="round" stroke-linejoin="round" /><path d="M2890 1110C2892 1109 2900 1107 2905 1106C2910 1105 2915 1104 2920 1103C2925 1102 2930 1101 2935 1099C2940 1098 2945 1096 2950 1095C2955 1094 2960 1093 2965 1092C2970 1092 2975 1091 2980 1091C2985 1090 2990 1091 2995 1091C3000 1091 3007 1090 3010 1090" fill="none" stroke="#f0c58e" stroke-width="2.6" stroke-linecap="round" stroke-linejoin="round" /><path d="M3130 1160C3132 1162 3139 1166 3143 1169C3147 1173 3151 1177 3155 1181C3159 1184 3163 1187 3167 1191C3171 1194 3176 1197 3180 1200C3184 1203 3186 1208 3189 1211C3192 1214 3197 1216 3201 1219C3205 1222 3208 1226 3211 1229C3214 1233 3216 1237 3220 1240C3224 1243 3229 1243 3234 1245C3238 1247 3243 1250 3247 1252C3251 1255 3256 1260 3260 1260C3264 1260 3269 1257 3274 1254C3278 1252 3282 1248 3286 1245C3290 1243 3298 1241 3300 1240" fill="none" stroke="#f0c58e" stroke-width="2.6" stroke-linecap="round" stroke-linejoin="round" /><path d="M3200 1340C3202 1341 3209 1344 3213 1347C3217 1349 3220 1354 3224 1357C3227 1360 3232 1362 3236 1365C3240 1367 3243 1371 3247 1373C3251 1376 3255 1379 3260 1380C3265 1381 3270 1379 3275 1379C3280 1379 3285 1379 3290 1379C3295 1379 3300 1381 3305 1381C3310 1381 3315 1381 3320 1380C3325 1379 3330 1377 3335 1376C3340 1374 3345 1371 3350 1369C3355 1368 3360 1367 3365 1366C3370 1364 3375 1362 3380 1360C3385 1358 3390 1356 3395 1355C3400 1353 3405 1353 3410 1351C3415 1349 3420 1345 3425 1344C3429 1342 3437 1341 3440 1340" fill="none" stroke="#f0c58e" stroke-width="2.6" stroke-linecap="round" stroke-linejoin="round" /><path d="M2920 1300C2923 1299 2931 1297 2936 1294C2941 1291 2944 1286 2949 1283C2954 1281 2960 1281 2965 1278C2971 1276 2975 1272 2980 1270C2985 1268 2989 1265 2995 1264C3000 1262 3006 1264 3011 1262C3016 1260 3019 1255 3024 1253C3029 1251 3037 1251 3040 1250" fill="none" stroke="#f0c58e" stroke-width="2.6" stroke-linecap="round" stroke-linejoin="round" /><path d="M2870 1420C2872 1419 2880 1418 2885 1417C2890 1416 2895 1416 2900 1415C2905 1414 2910 1413 2915 1412C2920 1411 2925 1411 2930 1410C2935 1409 2940 1408 2945 1407C2950 1406 2955 1405 2960 1405C2965 1404 2970 1404 2975 1403C2980 1402 2988 1401 2990 1400" fill="none" stroke="#f0c58e" stroke-width="2.6" stroke-linecap="round" stroke-linejoin="round" /><path d="M3240 1420C3242 1421 3250 1423 3255 1425C3260 1427 3265 1429 3270 1431C3275 1433 3279 1435 3284 1437C3289 1438 3295 1439 3300 1440C3305 1441 3310 1442 3315 1444C3320 1446 3325 1449 3330 1451C3335 1453 3340 1454 3345 1456C3350 1457 3355 1460 3360 1460C3365 1460 3370 1456 3375 1453C3380 1450 3384 1446 3389 1444C3394 1441 3399 1438 3404 1436C3409 1434 3417 1431 3420 1430" fill="none" stroke="#f0c58e" stroke-width="2.6" stroke-linecap="round" stroke-linejoin="round" /><path d="M3170 1490C3172 1489 3180 1487 3185 1486C3190 1486 3195 1486 3200 1486C3205 1485 3210 1483 3215 1482C3220 1481 3225 1480 3230 1480C3235 1480 3240 1482 3245 1484C3250 1486 3255 1488 3260 1490C3265 1492 3270 1493 3275 1495C3280 1497 3288 1499 3290 1500" fill="none" stroke="#f0c58e" stroke-width="2.6" stroke-linecap="round" stroke-linejoin="round" /><path d="M2600 1600C2603 1601 2611 1605 2616 1607C2622 1610 2627 1612 2633 1614C2639 1617 2645 1618 2650 1620C2655 1622 2658 1625 2662 1628C2667 1630 2671 1633 2675 1635C2679 1637 2684 1640 2688 1642C2692 1645 2696 1648 2700 1650C2704 1652 2710 1654 2715 1654C2720 1655 2725 1654 2730 1654C2735 1654 2740 1655 2745 1656C2750 1657 2758 1659 2760 1660" fill="none" stroke="#f0c58e" stroke-width="2.6" stroke-linecap="round" stroke-linejoin="round" /><path d="M2830 1700C2831 1703 2834 1711 2836 1716C2838 1721 2842 1725 2844 1730C2847 1735 2849 1741 2852 1745C2854 1750 2858 1755 2860 1760C2862 1765 2862 1771 2863 1776C2865 1780 2869 1785 2871 1790C2873 1795 2873 1800 2874 1805C2876 1810 2879 1815 2880 1820C2881 1825 2879 1830 2878 1835C2878 1840 2878 1845 2879 1850C2879 1855 2879 1860 2880 1865C2880 1870 2880 1878 2880 1880" fill="none" stroke="#f0c58e" stroke-width="2.6" stroke-linecap="round" stroke-linejoin="round" /><path d="M2930 1720C2931 1722 2935 1728 2936 1733C2938 1737 2938 1742 2939 1747C2941 1751 2943 1756 2944 1760C2946 1765 2948 1769 2950 1773C2952 1778 2954 1782 2956 1786C2958 1791 2958 1796 2960 1800C2962 1804 2965 1809 2967 1813C2970 1817 2972 1821 2975 1825C2978 1829 2981 1832 2984 1836C2987 1840 2989 1844 2992 1848C2995 1852 2997 1856 3000 1860C3003 1864 3006 1870 3008 1875C3011 1879 3014 1884 3017 1889C3019 1894 3021 1900 3023 1905C3025 1910 3029 1917 3030 1920" fill="none" stroke="#f0c58e" stroke-width="2.6" stroke-linecap="round" stroke-linejoin="round" /><path d="M3200 1900C3201 1902 3205 1908 3209 1911C3212 1914 3217 1916 3221 1919C3225 1922 3228 1925 3231 1929C3234 1932 3235 1938 3239 1941C3242 1945 3246 1947 3250 1950C3254 1953 3257 1958 3261 1962C3265 1966 3268 1970 3271 1974C3274 1978 3276 1984 3280 1988C3283 1992 3287 1996 3290 2000C3293 2004 3296 2010 3298 2015C3300 2020 3301 2026 3304 2031C3306 2036 3311 2040 3313 2045C3316 2049 3319 2057 3320 2060" fill="none" stroke="#f0c58e" stroke-width="2.6" stroke-linecap="round" stroke-linejoin="round" /><path d="M1700 1800C1702 1802 1707 1808 1711 1811C1715 1815 1719 1818 1723 1821C1727 1825 1731 1828 1735 1831C1739 1834 1745 1836 1749 1839C1753 1842 1757 1846 1760 1850C1763 1854 1766 1859 1770 1863C1773 1867 1777 1871 1780 1875C1784 1879 1787 1883 1790 1888C1793 1892 1796 1897 1800 1900C1804 1903 1809 1904 1813 1907C1817 1909 1821 1912 1825 1915C1829 1918 1832 1921 1836 1924C1840 1926 1845 1928 1849 1931C1853 1934 1857 1937 1860 1940C1863 1943 1865 1948 1868 1952C1871 1956 1875 1959 1878 1963C1880 1967 1883 1971 1885 1975C1888 1979 1889 1984 1891 1988C1894 1993 1899 1998 1900 2000" fill="none" stroke="#f0c58e" stroke-width="2.6" stroke-linecap="round" stroke-linejoin="round" /><path d="M1566 1800C1568 1802 1573 1807 1576 1811C1580 1814 1583 1818 1587 1821C1591 1824 1596 1826 1599 1829C1603 1832 1604 1838 1608 1841C1611 1845 1615 1848 1620 1850C1625 1852 1631 1854 1636 1856C1640 1859 1645 1863 1650 1866C1655 1868 1661 1869 1666 1871C1671 1873 1676 1877 1680 1880C1684 1883 1686 1888 1689 1891C1693 1894 1698 1896 1701 1899C1704 1902 1706 1907 1709 1911C1713 1914 1718 1918 1720 1920" fill="none" stroke="#f0c58e" stroke-width="2.6" stroke-linecap="round" stroke-linejoin="round" /><path d="M1800 2000C1803 2001 1810 2003 1815 2005C1820 2006 1825 2010 1829 2012C1834 2014 1839 2015 1845 2016C1850 2018 1855 2020 1860 2020C1865 2020 1870 2017 1876 2017C1881 2016 1887 2018 1892 2017C1898 2017 1903 2016 1908 2015C1913 2013 1918 2011 1924 2010C1929 2009 1935 2011 1940 2010C1945 2009 1951 2009 1956 2007C1961 2005 1965 2001 1970 1999C1975 1997 1980 1996 1985 1994C1990 1993 1995 1992 2000 1990C2005 1988 2010 1985 2015 1982C2020 1980 2025 1978 2030 1975C2035 1973 2039 1969 2044 1966C2049 1964 2057 1961 2060 1960" fill="none" stroke="#f0c58e" stroke-width="2.6" stroke-linecap="round" stroke-linejoin="round" /><path d="M1970 1850C1971 1852 1972 1860 1973 1864C1975 1869 1977 1873 1979 1878C1981 1882 1982 1887 1983 1892C1984 1896 1984 1901 1986 1906C1987 1911 1989 1915 1990 1920C1991 1925 1993 1930 1994 1936C1994 1941 1993 1947 1993 1952C1993 1958 1994 1963 1995 1968C1996 1973 1999 1978 2000 1984C2001 1989 1999 1995 2000 2000C2001 2005 2002 2011 2003 2016C2005 2022 2007 2027 2008 2032C2009 2037 2010 2043 2011 2048C2013 2054 2013 2059 2014 2064C2016 2070 2019 2075 2020 2080C2021 2085 2020 2090 2021 2095C2022 2099 2025 2104 2026 2109C2027 2113 2027 2118 2027 2123C2028 2128 2029 2133 2030 2137C2031 2142 2031 2147 2032 2152C2034 2156 2038 2161 2039 2165C2040 2170 2040 2178 2040 2180" fill="none" stroke="#f0c58e" stroke-width="2.6" stroke-linecap="round" stroke-linejoin="round" /><path d="M2120 2000C2121 2003 2123 2010 2124 2015C2126 2020 2128 2025 2129 2030C2131 2035 2131 2041 2133 2046C2135 2051 2138 2055 2140 2060C2142 2065 2144 2070 2146 2075C2148 2080 2150 2084 2152 2089C2153 2095 2152 2100 2154 2105C2155 2111 2158 2115 2160 2120C2162 2125 2164 2130 2166 2135C2167 2140 2169 2145 2170 2150C2172 2155 2172 2160 2174 2165C2175 2170 2179 2178 2180 2180" fill="none" stroke="#f0c58e" stroke-width="2.6" stroke-linecap="round" stroke-linejoin="round" /><path d="M2400 1960C2402 1961 2408 1966 2411 1969C2415 1972 2418 1975 2421 1979C2424 1983 2427 1987 2430 1990C2433 1994 2436 1997 2440 2000C2444 2003 2447 2006 2451 2009C2454 2012 2458 2015 2461 2019C2464 2022 2467 2026 2470 2030C2473 2033 2476 2037 2480 2040C2484 2043 2489 2044 2493 2046C2498 2048 2503 2050 2507 2052C2512 2055 2515 2058 2520 2060C2525 2062 2530 2063 2535 2065C2540 2066 2545 2070 2550 2071C2555 2073 2560 2072 2565 2074C2571 2075 2578 2079 2580 2080" fill="none" stroke="#f0c58e" stroke-width="2.6" stroke-linecap="round" stroke-linejoin="round" /><path d="M2620 2000C2621 2003 2623 2010 2625 2015C2627 2020 2629 2025 2631 2030C2632 2035 2632 2040 2634 2045C2635 2050 2638 2055 2640 2060C2642 2065 2644 2070 2646 2075C2647 2080 2648 2085 2650 2090C2652 2095 2654 2100 2656 2105C2657 2110 2658 2115 2660 2120C2662 2125 2666 2130 2668 2135C2670 2140 2671 2146 2673 2151C2676 2156 2681 2159 2684 2164C2687 2169 2689 2177 2690 2180" fill="none" stroke="#f0c58e" stroke-width="2.6" stroke-linecap="round" stroke-linejoin="round" /><path d="M2960 1900C2962 1902 2966 1907 2970 1910C2973 1913 2977 1916 2981 1919C2984 1922 2988 1925 2991 1929C2994 1932 2996 1937 3000 1940C3003 1944 3007 1946 3011 1949C3014 1952 3017 1957 3020 1960C3023 1963 3027 1966 3031 1969C3034 1973 3037 1976 3040 1980C3043 1983 3046 1987 3050 1990C3053 1994 3058 1998 3060 2000" fill="none" stroke="#f0c58e" stroke-width="2.6" stroke-linecap="round" stroke-linejoin="round" /><path d="M3360 1700C3362 1701 3368 1705 3371 1709C3375 1712 3378 1715 3381 1719C3384 1722 3387 1726 3390 1730C3393 1733 3397 1737 3400 1740C3403 1743 3406 1747 3409 1751C3413 1754 3417 1756 3421 1759C3425 1762 3428 1765 3431 1769C3434 1772 3436 1777 3440 1780C3444 1783 3449 1783 3453 1786C3457 1788 3460 1792 3464 1794C3468 1797 3475 1799 3477 1800" fill="none" stroke="#f0c58e" stroke-width="2.6" stroke-linecap="round" stroke-linejoin="round" /><path d="M2338 1238 2351 1250 2361 1262 2368 1276 2375 1292 2380 1312M2946 1695 2956 1677 2969 1661 2974 1648 2977 1634 2978 1618 2977 1602 2968 1586 2961 1569 2957 1552M2171 1052 2156 1049 2141 1050 2126 1049 2112 1049 2097 1046 2082 1040 2068 1030 2054 1009 2043 1000 2031 991 2021 982 2003 975 1985 968M2704 2160 2718 2148 2727 2133 2737 2118 2744 2106 2749 2092 2757 2080 2768 2065 2786 2045 2796 2020 2806 2008 2815 1997 2827 1988 2837 1978 2849 1970M2608 1974 2620 1986 2629 2002 2640 2017 2645 2035 2642 2054 2648 2077 2640 2103 2627 2119 2614 2135 2606 2148 2599 2161M2013 1305 2019 1289 2020 1273 2024 1257 2018 1237 2009 1219 2002 1200 1989 1176M2275 1111 2298 1097 2318 1084 2334 1075 2350 1069 2366 1057 2383 1045 2403 1037M3113 1796 3112 1811 3113 1826 3115 1840 3107 1866 3095 1879 3087 1895 3078 1910 3071 1923 3068 1938M1809 2058 1793 2065 1779 2075 1758 2084 1742 2088 1725 2092 1709 2087 1692 2083 1666 2078M3262 1409 3248 1394 3235 1379 3228 1363 3224 1345 3223 1323 3219 1304 3218 1285 3220 1258 3226 1242 3235 1227 3234 1212 3233 1197 3228 1182 3222 1168M3381 2154 3395 2159 3409 2161 3428 2160 3446 2158 3461 2160 3475 2163 3492 2165 3508 2170 3526 2174 3544 2182 3561 2194 3579 2196M2154 1686 2167 1680 2181 1674 2193 1667 2211 1663 2228 1655 2248 1650 2264 1638 2281 1626 2295 1613 2309 1600 2323 1579M3244 2064 3266 2048 3286 2045 3307 2035 3327 2029 3346 2021 3364 2012 3382 2003 3396 2001 3411 2002 3431 2009 3450 2017 3469 2023M1709 1284 1693 1296 1678 1307 1669 1323 1661 1338 1662 1355 1660 1373M2092 1016 2091 1032 2089 1049 2094 1064 2105 1083 2110 1102 2116 1119 2121 1136M2364 1951 2380 1958 2395 1968 2409 1970 2423 1968 2437 1971 2456 1978 2470 1982 2485 1984 2499 1987M2588 1878 2598 1895 2614 1904 2629 1917 2643 1931 2650 1948 2658 1964M2741 1898 2731 1880 2718 1863 2713 1850 2710 1837 2703 1819 2692 1804 2680 1792 2667 1781 2655 1772 2647 1760 2636 1751M2008 2082 2015 2065 2020 2047 2027 2028 2038 2009 2052 1996 2071 1989M2414 1300 2393 1289 2378 1288 2364 1287 2350 1284 2333 1274 2315 1266 2297 1260 2281 1257 2264 1257 2247 1254 2223 1257M2191 1979 2206 1982 2221 1989 2234 1996 2249 2015 2260 2025 2271 2036 2279 2056M2568 2170 2576 2189 2586 2206 2598 2216 2605 2234 2615 2252 2626 2261 2637 2271 2646 2282 2657 2295 2663 2315 2664 2334 2658 2349M2322 2170 2298 2177 2286 2184 2274 2192 2263 2201 2256 2214 2248 2227 2245 2243 2239 2258M1964 2009 1944 2009 1923 2008 1902 2010 1885 2015 1869 2022 1857 2032 1845 2041M3096 2082 3103 2068 3107 2054 3122 2030 3131 2016M2045 1906 2044 1923 2040 1939 2032 1951 2025 1963 2022 1977 2013 1989 2009 2003 1999 2020M3286 1793 3304 1789 3323 1788 3345 1776 3360 1757 3365 1743 3372 1731 3385 1721 3395 1708 3404 1694 3426 1679M2252 1377 2244 1392 2245 1414 2249 1436 2245 1452 2241 1469 2238 1486 2234 1503 2238 1523 2243 1542 2244 1557 2243 1572M2633 1445 2615 1442 2597 1440 2576 1430 2562 1426 2548 1424 2534 1422 2509 1424 2491 1434 2473 1444 2452 1452 2439 1457 2426 1464 2415 1478 2403 1493M1714 1454 1712 1439 1713 1425 1711 1411 1713 1397 1717 1383 1725 1366 1736 1350 1747 1331 1756 1320 1764 1309 1775 1299M3222 2081 3216 2094 3208 2106 3202 2119 3197 2133 3189 2145 3174 2156 3167 2170 3160 2184M2778 2018 2782 2034 2785 2050 2797 2064 2809 2080 2824 2089 2838 2100 2845 2113 2853 2126 2859 2139 2867 2150 2880 2166 2895 2180 2903 2196 2910 2212 2908 2230 2908 2248M1766 1994 1769 1977 1782 1957 1797 1946 1812 1935 1828 1927 1846 1921 1857 1909 1868 1897 1871 1882 1877 1869M1811 1345 1798 1349 1784 1353 1768 1358 1752 1362 1733 1369 1717 1378 1703 1387 1687 1394 1672 1401 1653 1407 1635 1414M2661 1400 2666 1383 2672 1356 2670 1341 2673 1324 2672 1303 2663 1282M2159 1975 2145 1963 2126 1959 2106 1955 2081 1954 2066 1963 2050 1969M2044 1641 2038 1658 2035 1676 2029 1690 2021 1704 2008 1722 2002 1740 1995 1759 1986 1785M2476 1195 2461 1208 2446 1222 2434 1232 2413 1246 2404 1259M2586 2127 2561 2126 2545 2119 2530 2109 2512 2093 2496 2074 2480 2063M1901 1111 1880 1127 1868 1133 1855 1140 1843 1147 1834 1158 1821 1165 1812 1176 1787 1182 1774 1194 1760 1205 1735 1212 1715 1222M1803 1784 1800 1803 1798 1818 1790 1831 1786 1845 1787 1860 1790 1874 1789 1889 1785 1908 1784 1927 1774 1939 1768 1954M2588 1170 2574 1189 2560 1200 2545 1204 2530 1206 2516 1211 2500 1223 2484 1236 2476 1249 2465 1260 2461 1274 2460 1288M3079 2090 3071 2078 3060 2069 3051 2057 3036 2047 3023 2033 3017 2018 3017 1999 3014 1981M3347 1533 3337 1518 3325 1505 3311 1495 3297 1490 3283 1487 3269 1481 3249 1474 3229 1470 3217 1462 3209 1450 3197 1441 3181 1425M2729 1909 2722 1894 2717 1878 2715 1862 2711 1846 2712 1832 2715 1818 2718 1804M2518 1162 2506 1149 2495 1135 2472 1126 2459 1117 2448 1106 2423 1095 2406 1084 2386 1079 2368 1070 2341 1064 2331 1053 2319 1045 2309 1035M2146 1002 2152 1023 2149 1044 2147 1064 2142 1079M2576 1264 2578 1284 2583 1302 2591 1320 2602 1332 2614 1341 2629 1352 2643 1365 2662 1381 2679 1399M1836 1729 1816 1725 1799 1712 1782 1708 1765 1703 1751 1690 1737 1677 1719 1660 1704 1651 1688 1648 1671 1644M2039 2166 2045 2179 2051 2193 2055 2207 2065 2221 2080 2229 2101 2244M2959 1310 2944 1318 2930 1329 2902 1330 2889 1326 2875 1322M2095 2134 2076 2116 2068 2104 2062 2090 2056 2077 2058 2063 2057 2048 2056 2033 2056 2018M2707 1355 2692 1355 2677 1357 2664 1353 2652 1345 2639 1340 2621 1334 2596 1324 2578 1308 2559 1302M3244 1145 3258 1143 3272 1141 3286 1140 3300 1146 3319 1145 3338 1146 3358 1138 3373 1137 3390 1139M1649 1238 1646 1260 1638 1279 1635 1304 1636 1318 1635 1332 1634 1346 1637 1370 1637 1388 1636 1404M3231 2039 3246 2022 3269 2008 3282 1996 3292 1982 3304 1961 3316 1949 3327 1935 3330 1920M2590 1108 2599 1124 2606 1141 2605 1159 2606 1177 2600 1191M2278 1432 2266 1440 2253 1446 2242 1455 2228 1458 2214 1460 2199 1461 2181 1469 2164 1472 2146 1471 2132 1467 2117 1465 2104 1460M1717 1789 1731 1800 1753 1812 1774 1818M3167 1654 3168 1637 3167 1619 3176 1596 3181 1582 3183 1567 3194 1550 3207 1536 3220 1522 3233 1511 3247 1501M1863 1362 1858 1385 1856 1407 1859 1429 1869 1455M1782 1707 1779 1691 1777 1674 1771 1661 1765 1648 1755 1636 1747 1623 1740 1610 1736 1590 1730 1570M2011 2097 2012 2083 2017 2069 2019 2054 2025 2041 2034 2030 2039 2012 2045 1994 2050 1977 2056 1960 2065 1947 2075 1937 2084 1925 2102 1914M2624 1847 2639 1862 2650 1878 2667 1885 2684 1883 2699 1875M2948 2086 2959 2069 2966 2055 2969 2034 2971 2020 2973 2006 2974 1992 2972 1974 2972 1956" fill="none" stroke="#f2c891" stroke-width="2.3" stroke-linejoin="round" opacity="0.75"/><path d="M1566 1088C1581 1089 1631 1096 1654 1093C1677 1090 1688 1075 1704 1067C1720 1059 1738 1050 1752 1043C1766 1036 1784 1026 1790 1023" fill="none" stroke="#eb9a81" stroke-width="3" stroke-linecap="round" stroke-linejoin="round" /><path d="M1779 1003C1785 1009 1802 1030 1814 1038C1826 1046 1841 1046 1854 1054C1867 1062 1881 1076 1891 1083C1901 1090 1908 1096 1912 1099" fill="none" stroke="#eb9a81" stroke-width="3" stroke-linecap="round" stroke-linejoin="round" /><path d="M1938 1003C1937 1010 1932 1021 1934 1043C1936 1065 1946 1113 1950 1135C1954 1157 1950 1165 1958 1175C1966 1185 1988 1184 2000 1195C2012 1206 2014 1230 2027 1243C2040 1256 2066 1266 2075 1276C2084 1286 2064 1287 2079 1300C2094 1313 2150 1344 2167 1356C2184 1368 2178 1368 2180 1370" fill="none" stroke="#eb9a81" stroke-width="3" stroke-linecap="round" stroke-linejoin="round" /><path d="M2000 1275C1994 1284 1972 1314 1966 1331C1960 1348 1965 1367 1962 1379C1959 1391 1955 1394 1950 1403C1945 1412 1941 1422 1934 1431C1927 1440 1914 1455 1910 1460" fill="none" stroke="#eb9a81" stroke-width="3" stroke-linecap="round" stroke-linejoin="round" /><path d="M1750 1531C1754 1529 1758 1522 1774 1519C1790 1516 1827 1515 1846 1511C1865 1507 1874 1500 1886 1495C1898 1490 1899 1483 1918 1479C1937 1475 1986 1472 2000 1471" fill="none" stroke="#eb9a81" stroke-width="3" stroke-linecap="round" stroke-linejoin="round" /><path d="M1750 1535C1749 1545 1748 1578 1746 1595C1744 1612 1741 1632 1740 1640" fill="none" stroke="#eb9a81" stroke-width="3" stroke-linecap="round" stroke-linejoin="round" /><path d="M2600 1138C2606 1137 2626 1130 2639 1131C2652 1132 2668 1138 2677 1142C2686 1146 2690 1155 2693 1158" fill="none" stroke="#eb9a81" stroke-width="3" stroke-linecap="round" stroke-linejoin="round" /><path d="M2180 1370C2184 1373 2200 1377 2205 1390C2210 1403 2212 1422 2210 1450C2208 1478 2202 1532 2195 1560C2188 1588 2174 1610 2170 1620" fill="none" stroke="#eb9a81" stroke-width="3" stroke-linecap="round" stroke-linejoin="round" /><path d="M1680 1720C1683 1713 1693 1693 1700 1680C1707 1667 1712 1648 1720 1640C1728 1632 1745 1632 1750 1630" fill="none" stroke="#eb9a81" stroke-width="3" stroke-linecap="round" stroke-linejoin="round" /><path d="M2797 1316C2798 1323 2806 1348 2805 1360C2804 1372 2791 1377 2790 1390C2789 1403 2797 1425 2800 1440C2803 1455 2808 1473 2810 1480" fill="none" stroke="#eb9a81" stroke-width="3" stroke-linecap="round" stroke-linejoin="round" /><path d="M3100 1350C3108 1342 3133 1312 3150 1300C3167 1288 3192 1283 3200 1280" fill="none" stroke="#eb9a81" stroke-width="3" stroke-linecap="round" stroke-linejoin="round" /><path d="M2280 1740C2283 1753 2293 1798 2300 1820C2307 1842 2317 1862 2320 1870" fill="none" stroke="#eb9a81" stroke-width="3" stroke-linecap="round" stroke-linejoin="round" /><path d="M1698 1003C1697 1007 1692 1017 1694 1027C1696 1037 1705 1051 1710 1063C1715 1075 1722 1082 1726 1099C1730 1116 1730 1144 1734 1163C1738 1182 1743 1196 1750 1211C1757 1226 1766 1242 1774 1251C1782 1260 1788 1254 1798 1263C1808 1272 1826 1289 1834 1303C1842 1317 1842 1332 1846 1347C1850 1362 1856 1380 1858 1395C1860 1410 1854 1427 1858 1439C1862 1451 1873 1462 1882 1467C1891 1472 1901 1468 1910 1471C1919 1474 1923 1483 1938 1487C1953 1491 1983 1491 2000 1495C2017 1499 2031 1501 2040 1512C2049 1523 2050 1545 2055 1560C2060 1575 2063 1582 2070 1600C2077 1618 2084 1652 2099 1670C2114 1688 2134 1697 2159 1706C2184 1715 2227 1715 2247 1722C2267 1729 2270 1742 2279 1750C2288 1758 2288 1766 2300 1770C2312 1774 2327 1772 2352 1774C2377 1776 2420 1777 2448 1782C2476 1787 2501 1797 2520 1802C2539 1807 2547 1810 2560 1810C2573 1810 2593 1802 2600 1800" fill="none" stroke="#df7a94" stroke-width="3.2" stroke-linecap="round" stroke-linejoin="round" /><path d="M2199 1003C2202 1016 2207 1066 2215 1083C2223 1100 2240 1094 2247 1107C2254 1120 2257 1148 2259 1163C2261 1178 2262 1184 2259 1195C2256 1206 2243 1216 2239 1227C2235 1238 2243 1242 2235 1260C2227 1278 2202 1308 2191 1332C2180 1356 2178 1379 2167 1404C2156 1429 2145 1465 2127 1484C2109 1503 2070 1514 2059 1520" fill="none" stroke="#df7a94" stroke-width="3.2" stroke-linecap="round" stroke-linejoin="round" /><path d="M2693 1158C2694 1162 2694 1172 2701 1185C2708 1198 2722 1214 2735 1235C2748 1256 2768 1296 2782 1313C2796 1330 2807 1330 2817 1336C2827 1342 2828 1345 2840 1346C2852 1347 2872 1342 2886 1344C2900 1346 2907 1352 2921 1357C2935 1362 2954 1365 2968 1371C2982 1377 2994 1385 3007 1394C3020 1403 3030 1420 3045 1425C3060 1430 3091 1425 3100 1425" fill="none" stroke="#df7a94" stroke-width="3.2" stroke-linecap="round" stroke-linejoin="round" /><path d="M2497 1003C2499 1008 2501 1020 2510 1030C2519 1040 2535 1053 2550 1060C2565 1067 2588 1067 2600 1070C2612 1073 2617 1078 2620 1080" fill="none" stroke="#df7a94" stroke-width="3.2" stroke-linecap="round" stroke-linejoin="round" /><path d="M3014 1061C3016 1066 3019 1081 3026 1092C3033 1103 3050 1117 3057 1127C3064 1137 3067 1142 3065 1154C3063 1166 3050 1182 3045 1196C3040 1210 3033 1222 3034 1235C3035 1248 3042 1262 3049 1274C3056 1286 3069 1295 3076 1305C3083 1315 3089 1324 3092 1332C3095 1340 3097 1342 3096 1351C3095 1360 3094 1374 3088 1386C3082 1398 3066 1411 3057 1425C3048 1439 3040 1454 3034 1468C3028 1482 3030 1494 3022 1506C3014 1518 2999 1528 2987 1537C2975 1546 2962 1551 2948 1560C2934 1569 2918 1581 2902 1591C2886 1601 2859 1615 2850 1620" fill="none" stroke="#df7a94" stroke-width="3.2" stroke-linecap="round" stroke-linejoin="round" /><path d="M3065 1154C3072 1151 3092 1143 3106 1136C3120 1129 3136 1118 3147 1111C3158 1104 3163 1094 3175 1095C3187 1096 3206 1118 3219 1119C3232 1120 3244 1106 3255 1103C3266 1100 3275 1106 3283 1099C3291 1092 3293 1075 3303 1063C3313 1051 3326 1037 3343 1027C3360 1017 3394 1007 3404 1003" fill="none" stroke="#df7a94" stroke-width="3.2" stroke-linecap="round" stroke-linejoin="round" /><path d="M2520 1771C2533 1768 2577 1756 2600 1750C2623 1744 2633 1740 2657 1733C2681 1726 2726 1719 2745 1710C2764 1701 2761 1688 2770 1678C2779 1668 2787 1661 2800 1652C2813 1643 2835 1631 2850 1624C2865 1617 2878 1615 2890 1612C2902 1609 2913 1610 2922 1606C2931 1602 2937 1593 2945 1590C2953 1587 2955 1585 2970 1590C2985 1595 3019 1605 3034 1618C3049 1631 3054 1649 3062 1670C3070 1691 3077 1723 3082 1743C3087 1763 3082 1777 3090 1791C3098 1805 3124 1814 3131 1827C3138 1840 3136 1850 3135 1871C3134 1892 3125 1928 3123 1952C3121 1976 3119 1997 3123 2012C3127 2027 3142 2031 3147 2044C3152 2057 3146 2074 3155 2092C3164 2110 3192 2137 3203 2152C3214 2167 3217 2175 3220 2180" fill="none" stroke="#df7a94" stroke-width="3.2" stroke-linecap="round" stroke-linejoin="round" /><path d="M3131 1827C3143 1828 3181 1833 3203 1831C3225 1829 3243 1812 3263 1815C3283 1818 3310 1840 3323 1851C3336 1862 3330 1873 3343 1883C3356 1893 3388 1900 3404 1911C3420 1922 3424 1941 3436 1952C3448 1963 3470 1972 3477 1976" fill="none" stroke="#df7a94" stroke-width="3.2" stroke-linecap="round" stroke-linejoin="round" /><path d="M2681 1943C2686 1942 2700 1930 2713 1935C2726 1940 2740 1964 2761 1971C2782 1978 2824 1972 2841 1975C2858 1978 2854 1982 2861 1991C2868 2000 2872 2020 2882 2031C2892 2042 2905 2048 2918 2060C2931 2072 2948 2095 2962 2104C2976 2113 2982 2114 3002 2112C3022 2110 3058 2095 3082 2092C3106 2089 3123 2091 3143 2096C3163 2101 3180 2119 3203 2124C3226 2129 3256 2132 3283 2128C3310 2124 3331 2114 3363 2100C3395 2086 3458 2053 3477 2044" fill="none" stroke="#df7a94" stroke-width="3.2" stroke-linecap="round" stroke-linejoin="round" /><path d="M1566 1676C1574 1680 1601 1692 1614 1698C1627 1704 1641 1708 1646 1710" fill="none" stroke="#df7a94" stroke-width="3.2" stroke-linecap="round" stroke-linejoin="round" /><path d="M2288 1931C2298 1941 2331 1971 2348 1991C2365 2011 2378 2031 2388 2051C2398 2071 2399 2090 2408 2111C2417 2132 2435 2168 2440 2180" fill="none" stroke="#df7a94" stroke-width="3.2" stroke-linecap="round" stroke-linejoin="round" /><path d="M2475 1620C2476 1630 2476 1663 2480 1680C2484 1697 2495 1703 2500 1720C2505 1737 2505 1765 2510 1780C2515 1795 2530 1795 2530 1810C2530 1825 2514 1848 2510 1870C2506 1892 2508 1918 2505 1940C2502 1962 2499 1973 2495 2000C2491 2027 2484 2070 2480 2100C2476 2130 2472 2167 2470 2180" fill="none" stroke="#df7a94" stroke-width="3.2" stroke-linecap="round" stroke-linejoin="round" /><path d="M2380 1880C2388 1873 2413 1852 2430 1840C2447 1828 2465 1816 2480 1810C2495 1804 2513 1803 2520 1802" fill="none" stroke="#df7a94" stroke-width="3.2" stroke-linecap="round" stroke-linejoin="round" /><path d="M2520 1802C2523 1795 2533 1774 2540 1760C2547 1746 2553 1730 2560 1720C2567 1710 2577 1703 2580 1700" fill="none" stroke="#df7a94" stroke-width="3.2" stroke-linecap="round" stroke-linejoin="round" /><path d="M2386 1167 2387 1174 2386 1182 2383 1189 2383 1196 2382 1204 2378 1211 2377 1219 2370 1222 2363 1226 2355 1227 2348 1229 2345 1236 2341 1243 2335 1248 2333 1256 2330 1263 2328 1271 2323 1277 2316 1281 2312 1287 2310 1297 2306 1306 2307 1316 2309 1326 2304 1333 2299 1340 2293 1345 2287 1350 2280 1355 2283 1363 2287 1369 2289 1377 2293 1384 2288 1389 2282 1393 2277 1397 2270 1400 2263 1404 2255 1408 2248 1413 2247 1421 2245 1429 2242 1437 2242 1447 2238 1455 2234 1462 2228 1467 2223 1473 2219 1480 2224 1486 2231 1489 2235 1495 2241 1500 2231 1500 2231 1508 2228 1516 2227 1523 2226 1531 2224 1539 2224 1547 2224 1555 2227 1562 2227 1569 2230 1576 2230 1584 2234 1590 2234 1598 2240 1603 2246 1607 2252 1610 2259 1614 2264 1619 2271 1622 2273 1629 2277 1636 2282 1642 2285 1648 2288 1655 2289 1662 2286 1669 2285 1676 2293 1677 2300 1680 2308 1679 2315 1682" fill="none" stroke="#aaa6ad" stroke-width="7.5" stroke-linecap="round" stroke-linejoin="round" opacity="0.55"/><path d="M2386 1167 2387 1174 2386 1182 2383 1189 2383 1196 2382 1204 2378 1211 2377 1219 2370 1222 2363 1226 2355 1227 2348 1229 2345 1236 2341 1243 2335 1248 2333 1256 2330 1263 2328 1271 2323 1277 2316 1281 2312 1287 2310 1297 2306 1306 2307 1316 2309 1326 2304 1333 2299 1340 2293 1345 2287 1350 2280 1355 2283 1363 2287 1369 2289 1377 2293 1384 2288 1389 2282 1393 2277 1397 2270 1400 2263 1404 2255 1408 2248 1413 2247 1421 2245 1429 2242 1437 2242 1447 2238 1455 2234 1462 2228 1467 2223 1473 2219 1480 2224 1486 2231 1489 2235 1495 2241 1500 2231 1500 2231 1508 2228 1516 2227 1523 2226 1531 2224 1539 2224 1547 2224 1555 2227 1562 2227 1569 2230 1576 2230 1584 2234 1590 2234 1598 2240 1603 2246 1607 2252 1610 2259 1614 2264 1619 2271 1622 2273 1629 2277 1636 2282 1642 2285 1648 2288 1655 2289 1662 2286 1669 2285 1676 2293 1677 2300 1680 2308 1679 2315 1682" fill="none" stroke="#8c8c8c" stroke-width="3.6" stroke-linecap="round" stroke-linejoin="round" /><path d="M2386 1167 2393 1164 2400 1164 2407 1161 2414 1161 2421 1161 2428 1159 2431 1168 2435 1177 2442 1181 2449 1186 2457 1190 2462 1184 2469 1178 2473 1171 2480 1176 2489 1179 2496 1184 2499 1194 2503 1203 2515 1209" fill="none" stroke="#aaa6ad" stroke-width="7.5" stroke-linecap="round" stroke-linejoin="round" opacity="0.55"/><path d="M2386 1167 2393 1164 2400 1164 2407 1161 2414 1161 2421 1161 2428 1159 2431 1168 2435 1177 2442 1181 2449 1186 2457 1190 2462 1184 2469 1178 2473 1171 2480 1176 2489 1179 2496 1184 2499 1194 2503 1203 2515 1209" fill="none" stroke="#8c8c8c" stroke-width="3.6" stroke-linecap="round" stroke-linejoin="round" /><path d="M2515 1209 2515 1201 2514 1193 2512 1185 2512 1177 2519 1170 2528 1164 2538 1162 2548 1158 2550 1148 2548 1138 2546 1129 2544 1119 2541 1112 2535 1106 2544 1096 2549 1090 2556 1087 2561 1081 2567 1077 2575 1074 2583 1071 2591 1068 2599 1064 2605 1060 2611 1057 2616 1051 2622 1048 2622 1038 2625 1029 2628 1022 2632 1016 2635 1009 2638 1003" fill="none" stroke="#aaa6ad" stroke-width="7.5" stroke-linecap="round" stroke-linejoin="round" opacity="0.55"/><path d="M2515 1209 2515 1201 2514 1193 2512 1185 2512 1177 2519 1170 2528 1164 2538 1162 2548 1158 2550 1148 2548 1138 2546 1129 2544 1119 2541 1112 2535 1106 2544 1096 2549 1090 2556 1087 2561 1081 2567 1077 2575 1074 2583 1071 2591 1068 2599 1064 2605 1060 2611 1057 2616 1051 2622 1048 2622 1038 2625 1029 2628 1022 2632 1016 2635 1009 2638 1003" fill="none" stroke="#8c8c8c" stroke-width="3.6" stroke-linecap="round" stroke-linejoin="round" /><path d="M2638 1003 2647 1002 2655 1004 2664 1003 2670 1008 2677 1011 2683 1016 2690 1010 2696 1003" fill="none" stroke="#aaa6ad" stroke-width="7.5" stroke-linecap="round" stroke-linejoin="round" opacity="0.55"/><path d="M2638 1003 2647 1002 2655 1004 2664 1003 2670 1008 2677 1011 2683 1016 2690 1010 2696 1003" fill="none" stroke="#8c8c8c" stroke-width="3.6" stroke-linecap="round" stroke-linejoin="round" /><path d="M2515 1209 2512 1219 2509 1229 2508 1237 2504 1245 2503 1253 2499 1261 2498 1270 2498 1278 2496 1287 2497 1296 2501 1304 2502 1313 2503 1322 2508 1329 2511 1337 2512 1345 2515 1355 2519 1364 2524 1372 2532 1377 2532 1387 2535 1396 2539 1403 2544 1409 2551 1416 2561 1418 2570 1422 2573 1430 2574 1438 2577 1445 2579 1453 2580 1461 2583 1470 2583 1480 2590 1484 2596 1489 2602 1493 2607 1499 2614 1503 2622 1507 2631 1508 2638 1513 2640 1521 2643 1529 2644 1539 2647 1548 2652 1542 2659 1538 2668 1538 2677 1534 2682 1541 2687 1547 2692 1553 2696 1560 2702 1566 2713 1573 2720 1573 2728 1573 2735 1575 2742 1572 2749 1573 2757 1575 2764 1573 2769 1578 2776 1581 2784 1591 2789 1586 2793 1579 2797 1585 2790 1592 2784 1601" fill="none" stroke="#aaa6ad" stroke-width="7.5" stroke-linecap="round" stroke-linejoin="round" opacity="0.55"/><path d="M2515 1209 2512 1219 2509 1229 2508 1237 2504 1245 2503 1253 2499 1261 2498 1270 2498 1278 2496 1287 2497 1296 2501 1304 2502 1313 2503 1322 2508 1329 2511 1337 2512 1345 2515 1355 2519 1364 2524 1372 2532 1377 2532 1387 2535 1396 2539 1403 2544 1409 2551 1416 2561 1418 2570 1422 2573 1430 2574 1438 2577 1445 2579 1453 2580 1461 2583 1470 2583 1480 2590 1484 2596 1489 2602 1493 2607 1499 2614 1503 2622 1507 2631 1508 2638 1513 2640 1521 2643 1529 2644 1539 2647 1548 2652 1542 2659 1538 2668 1538 2677 1534 2682 1541 2687 1547 2692 1553 2696 1560 2702 1566 2713 1573 2720 1573 2728 1573 2735 1575 2742 1572 2749 1573 2757 1575 2764 1573 2769 1578 2776 1581 2784 1591 2789 1586 2793 1579 2797 1585 2790 1592 2784 1601" fill="none" stroke="#8c8c8c" stroke-width="3.6" stroke-linecap="round" stroke-linejoin="round" /><path d="M2281 1875 2271 1868 2263 1865 2255 1861 2247 1858 2242 1865 2236 1871 2231 1878 2224 1876 2216 1878 2209 1875 2202 1876 2194 1877 2187 1875 2180 1875 2173 1873 2166 1870 2159 1872 2153 1877 2148 1882 2140 1883 2135 1888 2135 1896 2131 1903 2134 1911 2131 1919 2126 1906 2118 1906 2110 1904 2102 1904 2095 1903 2087 1901 2081 1905 2074 1907 2067 1909 2062 1914 2055 1915 2048 1919 2042 1921 2035 1923 2029 1928 2025 1919 2020 1910 2021 1903 2023 1895 2025 1888 2021 1882 2017 1876 2013 1870 2007 1866 2005 1859 2003 1852 2003 1844 2000 1837 1993 1832 1990 1825 1984 1820 1981 1813 1977 1806 1972 1800 1966 1796 1958 1795 1951 1792 1944 1789 1937 1787 1930 1793 1923 1799 1915 1804 1913 1796 1912 1789 1912 1781 1910 1773 1915 1768 1917 1761 1923 1756 1917 1750 1913 1744 1907 1738 1901 1733 1895 1727 1890 1722 1884 1716 1875 1714 1866 1716 1857 1716 1849 1716 1841 1715 1833 1714 1825 1714 1817 1713 1809 1712 1806 1703 1804 1694 1797 1691 1788 1691 1780 1689 1773 1685 1769 1679 1765 1672 1765 1664 1761 1658 1758 1651 1752 1646 1751 1638 1747 1632 1738 1631 1729 1632 1721 1629 1713 1624 1706 1619 1701 1614 1696 1609 1691 1604 1686 1599 1679 1597 1672 1594 1665 1592 1658 1591 1650 1592 1643 1594 1636 1598 1629 1599 1622 1602 1614 1603 1607 1602 1600 1602 1593 1599 1585 1600 1578 1599 1581 1592 1583 1585 1587 1578 1590 1571 1589 1564 1585 1558 1586 1550 1583 1544 1580 1537 1581 1530 1578 1523 1580 1515 1585 1509 1587 1502 1590 1495 1595 1488 1597 1478 1602 1471 1600 1463 1596 1457 1594 1450 1590 1443 1584 1437 1578 1431 1572 1425 1566 1419" fill="none" stroke="#aaa6ad" stroke-width="7.5" stroke-linecap="round" stroke-linejoin="round" opacity="0.55"/><path d="M2281 1875 2271 1868 2263 1865 2255 1861 2247 1858 2242 1865 2236 1871 2231 1878 2224 1876 2216 1878 2209 1875 2202 1876 2194 1877 2187 1875 2180 1875 2173 1873 2166 1870 2159 1872 2153 1877 2148 1882 2140 1883 2135 1888 2135 1896 2131 1903 2134 1911 2131 1919 2126 1906 2118 1906 2110 1904 2102 1904 2095 1903 2087 1901 2081 1905 2074 1907 2067 1909 2062 1914 2055 1915 2048 1919 2042 1921 2035 1923 2029 1928 2025 1919 2020 1910 2021 1903 2023 1895 2025 1888 2021 1882 2017 1876 2013 1870 2007 1866 2005 1859 2003 1852 2003 1844 2000 1837 1993 1832 1990 1825 1984 1820 1981 1813 1977 1806 1972 1800 1966 1796 1958 1795 1951 1792 1944 1789 1937 1787 1930 1793 1923 1799 1915 1804 1913 1796 1912 1789 1912 1781 1910 1773 1915 1768 1917 1761 1923 1756 1917 1750 1913 1744 1907 1738 1901 1733 1895 1727 1890 1722 1884 1716 1875 1714 1866 1716 1857 1716 1849 1716 1841 1715 1833 1714 1825 1714 1817 1713 1809 1712 1806 1703 1804 1694 1797 1691 1788 1691 1780 1689 1773 1685 1769 1679 1765 1672 1765 1664 1761 1658 1758 1651 1752 1646 1751 1638 1747 1632 1738 1631 1729 1632 1721 1629 1713 1624 1706 1619 1701 1614 1696 1609 1691 1604 1686 1599 1679 1597 1672 1594 1665 1592 1658 1591 1650 1592 1643 1594 1636 1598 1629 1599 1622 1602 1614 1603 1607 1602 1600 1602 1593 1599 1585 1600 1578 1599 1581 1592 1583 1585 1587 1578 1590 1571 1589 1564 1585 1558 1586 1550 1583 1544 1580 1537 1581 1530 1578 1523 1580 1515 1585 1509 1587 1502 1590 1495 1595 1488 1597 1478 1602 1471 1600 1463 1596 1457 1594 1450 1590 1443 1584 1437 1578 1431 1572 1425 1566 1419" fill="none" stroke="#8c8c8c" stroke-width="3.6" stroke-linecap="round" stroke-linejoin="round" /><path d="M1566 1191 1574 1191 1582 1193 1590 1195 1597 1202 1606 1207 1602 1213 1599 1220 1598 1227 1594 1234 1594 1243 1590 1251 1587 1257 1582 1263 1577 1270 1571 1276 1566 1283" fill="none" stroke="#aaa6ad" stroke-width="7.5" stroke-linecap="round" stroke-linejoin="round" opacity="0.55"/><path d="M1566 1191 1574 1191 1582 1193 1590 1195 1597 1202 1606 1207 1602 1213 1599 1220 1598 1227 1594 1234 1594 1243 1590 1251 1587 1257 1582 1263 1577 1270 1571 1276 1566 1283" fill="none" stroke="#8c8c8c" stroke-width="3.6" stroke-linecap="round" stroke-linejoin="round" /><path d="M2680 1969 2689 1966 2698 1963 2706 1959 2715 1963 2724 1963 2733 1966 2740 1968 2745 1973 2752 1976 2757 1980 2763 1984 2770 1986 2778 1988 2785 1993 2793 1995 2800 2000 2806 2005 2810 2012 2817 2016 2821 2023 2823 2030 2827 2037 2830 2044 2833 2050 2837 2057 2837 2065 2841 2072 2842 2080 2845 2088 2845 2096 2846 2104 2849 2112 2854 2118 2857 2125 2863 2131 2866 2138 2870 2144 2874 2151 2877 2158 2882 2164 2889 2169 2896 2174 2902 2180" fill="none" stroke="#aaa6ad" stroke-width="7.5" stroke-linecap="round" stroke-linejoin="round" opacity="0.55"/><path d="M2680 1969 2689 1966 2698 1963 2706 1959 2715 1963 2724 1963 2733 1966 2740 1968 2745 1973 2752 1976 2757 1980 2763 1984 2770 1986 2778 1988 2785 1993 2793 1995 2800 2000 2806 2005 2810 2012 2817 2016 2821 2023 2823 2030 2827 2037 2830 2044 2833 2050 2837 2057 2837 2065 2841 2072 2842 2080 2845 2088 2845 2096 2846 2104 2849 2112 2854 2118 2857 2125 2863 2131 2866 2138 2870 2144 2874 2151 2877 2158 2882 2164 2889 2169 2896 2174 2902 2180" fill="none" stroke="#8c8c8c" stroke-width="3.6" stroke-linecap="round" stroke-linejoin="round" /><path d="M2315 1682 2320 1688 2326 1694 2333 1699 2337 1706 2342 1713 2340 1720 2342 1728 2341 1735 2342 1743 2340 1751 2340 1758 2341 1766 2339 1773 2335 1779 2331 1785 2325 1790 2325 1800 2328 1810 2320 1815 2313 1819 2305 1824 2302 1831 2301 1838 2308 1845 2315 1851 2309 1856 2301 1859 2295 1865 2288 1870 2281 1875 2288 1885 2288 1895 2291 1905 2297 1911 2303 1918 2308 1925 2317 1927 2325 1932 2330 1938 2336 1942 2342 1947 2349 1950 2353 1957 2360 1960 2367 1965 2374 1969 2382 1970 2388 1976 2396 1979 2404 1980 2412 1978 2419 1976 2427 1975 2435 1973 2443 1973 2451 1973 2458 1977 2466 1978 2474 1979 2480 1974 2484 1967 2490 1962 2496 1958 2500 1951 2506 1946 2512 1940 2517 1935 2523 1928 2531 1922 2538 1922 2546 1921 2553 1919 2561 1920 2568 1918 2577 1919 2585 1915 2594 1918 2602 1915 2609 1918 2615 1923 2621 1926 2628 1929 2633 1934 2640 1937 2646 1942 2652 1947 2656 1953 2663 1958 2669 1962 2680 1969" fill="none" stroke="#b0a2bb" stroke-width="7.5" stroke-linecap="round" stroke-linejoin="round" opacity="0.6"/><path d="M2315 1682 2320 1688 2326 1694 2333 1699 2337 1706 2342 1713 2340 1720 2342 1728 2341 1735 2342 1743 2340 1751 2340 1758 2341 1766 2339 1773 2335 1779 2331 1785 2325 1790 2325 1800 2328 1810 2320 1815 2313 1819 2305 1824 2302 1831 2301 1838 2308 1845 2315 1851 2309 1856 2301 1859 2295 1865 2288 1870 2281 1875 2288 1885 2288 1895 2291 1905 2297 1911 2303 1918 2308 1925 2317 1927 2325 1932 2330 1938 2336 1942 2342 1947 2349 1950 2353 1957 2360 1960 2367 1965 2374 1969 2382 1970 2388 1976 2396 1979 2404 1980 2412 1978 2419 1976 2427 1975 2435 1973 2443 1973 2451 1973 2458 1977 2466 1978 2474 1979 2480 1974 2484 1967 2490 1962 2496 1958 2500 1951 2506 1946 2512 1940 2517 1935 2523 1928 2531 1922 2538 1922 2546 1921 2553 1919 2561 1920 2568 1918 2577 1919 2585 1915 2594 1918 2602 1915 2609 1918 2615 1923 2621 1926 2628 1929 2633 1934 2640 1937 2646 1942 2652 1947 2656 1953 2663 1958 2669 1962 2680 1969" fill="none" stroke="#8d7b99" stroke-width="3.6" stroke-linecap="round" stroke-linejoin="round" /><path d="M2784 1601 2786 1608 2787 1616 2788 1626 2791 1636 2782 1645 2781 1652 2779 1660 2778 1667 2782 1673 2784 1680 2779 1686 2775 1693 2768 1697 2764 1704 2758 1711 2750 1715 2745 1723 2741 1729 2735 1733 2730 1738 2725 1743 2721 1752 2722 1760 2725 1766 2729 1773 2731 1780 2725 1785 2720 1790 2711 1794 2703 1800 2701 1807 2697 1813 2694 1820 2691 1827 2690 1834 2687 1843 2683 1851 2680 1858 2679 1865 2675 1871 2674 1878 2673 1885 2676 1894 2673 1903 2676 1912 2674 1920 2676 1928 2673 1936 2675 1944 2673 1952 2675 1961 2680 1969" fill="none" stroke="#b0a2bb" stroke-width="7.5" stroke-linecap="round" stroke-linejoin="round" opacity="0.6"/><path d="M2784 1601 2786 1608 2787 1616 2788 1626 2791 1636 2782 1645 2781 1652 2779 1660 2778 1667 2782 1673 2784 1680 2779 1686 2775 1693 2768 1697 2764 1704 2758 1711 2750 1715 2745 1723 2741 1729 2735 1733 2730 1738 2725 1743 2721 1752 2722 1760 2725 1766 2729 1773 2731 1780 2725 1785 2720 1790 2711 1794 2703 1800 2701 1807 2697 1813 2694 1820 2691 1827 2690 1834 2687 1843 2683 1851 2680 1858 2679 1865 2675 1871 2674 1878 2673 1885 2676 1894 2673 1903 2676 1912 2674 1920 2676 1928 2673 1936 2675 1944 2673 1952 2675 1961 2680 1969" fill="none" stroke="#8d7b99" stroke-width="3.6" stroke-linecap="round" stroke-linejoin="round" /><path d="M2760 1885 2768 1887 2776 1889 2783 1894 2791 1895 2798 1893 2806 1891 2813 1887 2820 1885 2827 1890 2834 1893 2842 1895 2848 1900 2856 1902 2861 1890 2868 1886 2875 1883 2883 1882 2890 1878 2897 1883 2906 1887 2914 1890 2919 1882 2922 1873 2928 1866 2935 1862 2943 1861 2949 1855 2957 1854 2963 1849 2970 1844 2978 1841 2983 1834 2990 1830 2997 1830 3005 1832 3011 1835 3019 1835 3026 1830 3033 1826 3039 1821 3046 1817 3053 1812 3058 1806 3066 1805 3074 1801 3082 1799 3091 1799 3095 1791 3096 1782 3103 1781 3111 1782 3118 1779 3125 1780 3132 1777 3140 1776 3148 1777 3155 1777 3163 1775 3169 1780 3176 1781 3183 1784 3189 1789 3196 1792 3203 1794 3209 1799 3216 1803 3222 1806 3230 1807 3236 1812 3243 1815 3250 1818 3258 1819 3266 1820 3273 1822 3280 1825 3288 1828 3296 1828 3303 1831 3306 1838 3312 1843 3315 1849 3318 1856 3322 1861 3328 1866 3331 1873 3335 1879 3342 1884 3349 1889 3356 1895 3363 1899 3359 1905 3357 1913 3352 1919 3350 1926 3347 1933 3343 1939 3340 1946 3337 1954 3333 1961 3330 1968 3329 1976 3326 1984 3323 1991 3327 1997 3332 2002 3338 2007 3341 2014 3347 2019 3350 2026 3355 2031 3359 2037 3361 2044 3363 2051 3366 2058 3368 2065 3369 2073 3372 2080 3376 2086 3377 2093 3380 2100" fill="none" stroke="#9a90a0" stroke-width="2.6" stroke-linecap="round" stroke-linejoin="round" opacity="0.8"/><path d="M2875 1123 2876 1130 2877 1137 2876 1144 2877 1151 2879 1158 2874 1164 2870 1171 2864 1177 2862 1185 2856 1190 2852 1197 2851 1205 2853 1212 2850 1220 2851 1228 2854 1235 2852 1243 2851 1251 2850 1258 2850 1266 2851 1274 2849 1282 2847 1289 2848 1297 2844 1304 2843 1313 2840 1320 2835 1328 2833 1337 2828 1344 2827 1351 2828 1358 2826 1365 2827 1372 2825 1379 2824 1386 2829 1391 2834 1396 2837 1403 2842 1409 2848 1413 2854 1419 2860 1424 2867 1429 2866 1437 2864 1445 2866 1452 2865 1460 2863 1468 2861 1475 2857 1481 2855 1488 2852 1495 2857 1502 2864 1508 2871 1514 2874 1521 2877 1529 2879 1537 2883 1544 2887 1550 2894 1554 2897 1561 2903 1567 2905 1574 2910 1580 2908 1588 2911 1597 2909 1605 2909 1614 2903 1618 2900 1625 2896 1631 2889 1634 2884 1639 2879 1644 2875 1650 2868 1654 2864 1661 2858 1666 2851 1670 2848 1678 2842 1683 2835 1687 2830 1693 2830 1701 2826 1708 2825 1716 2825 1724 2830 1729 2836 1734 2842 1739 2839 1746 2840 1755 2838 1762 2836 1770 2832 1777 2828 1783 2824 1789 2822 1796 2822 1804 2822 1812 2820 1820 2822 1828 2824 1836 2827 1844 2834 1847 2842 1847 2849 1850 2856 1854 2855 1862 2850 1870 2849 1878 2849 1886 2854 1892 2853 1900 2856 1907 2851 1912 2847 1919 2844 1926 2846 1934 2845 1943 2849 1951 2849 1960 2853 1968 2855 1976 2857 1984 2856 1992 2860 2000" fill="none" stroke="#9a90a0" stroke-width="2.6" stroke-linecap="round" stroke-linejoin="round" opacity="0.8"/><g font-family="Liberation Sans" font-size="20.5" letter-spacing="0.4" fill="#4f4f4f" stroke="#f5f5ef" stroke-width="3.5" stroke-opacity="0.8" paint-order="stroke"><text x="1756.7" y="1036" text-anchor="middle">Ciney</text><text x="1932" y="1102.5" text-anchor="middle">Marche-en-</text><text x="1932" y="1128" text-anchor="middle">Famenne</text><text x="1844.5" y="1192" text-anchor="middle">Rochefort</text><text x="2101" y="1154" text-anchor="middle">La Roche-</text><text x="2101" y="1180" text-anchor="middle">en-Ardenne</text><text x="2258" y="1222" text-anchor="middle">Houffalize</text><text x="1650.7" y="1249" text-anchor="middle">Beauraing</text><text x="2413" y="1236" text-anchor="middle">Troisvierges</text><text x="2432" y="1312" text-anchor="middle">Clervaux</text><text x="1956.5" y="1346" text-anchor="middle">Saint-Hubert</text><text x="2206" y="1372" text-anchor="middle">Bastogne</text><text x="2361" y="1411" text-anchor="middle">Wiltz</text><text x="2628" y="1362" text-anchor="middle">Neuerburg</text><text x="2794" y="1404" text-anchor="middle">Bitburg</text><text x="2876" y="1448" text-anchor="middle">Speicher</text><text x="1958" y="1456" text-anchor="middle">Libramont-</text><text x="1958" y="1481" text-anchor="middle">Chevigny</text><text x="2482" y="1547" text-anchor="middle">Ettelbruck</text><text x="2001" y="1553" text-anchor="middle">Neufchâteau</text><text x="2958" y="1574" text-anchor="middle">Schweich</text><text x="3229" y="1587" text-anchor="middle">Morbach</text><text x="2721" y="1585" text-anchor="middle">Echternach</text><text x="1732.5" y="1604.6" text-anchor="middle">Bouillon</text><text x="2880.7" y="1646" text-anchor="middle">Trier</text><text x="1642" y="1708" text-anchor="middle">Sedan</text><text x="1909" y="1712" text-anchor="middle">Florenville</text><text x="2278" y="1729.5" text-anchor="middle">Arlon</text><text x="2829" y="1714" text-anchor="middle">Konz</text><text x="3367" y="1701" text-anchor="middle">Idar-Oberstein</text><text x="3102" y="1762" text-anchor="middle">Hermeskeil</text><text x="3260" y="1770" text-anchor="middle">Birkenfeld</text><text x="2811" y="1815.6" text-anchor="middle">Saarburg</text><text x="3384" y="1807" text-anchor="middle">Baumholder</text><text x="2070" y="1861" text-anchor="middle">Virton</text><text x="2322.6" y="1874" text-anchor="middle">Pétange</text><text x="3059" y="1890.6" text-anchor="middle">Wadern</text><text x="2680" y="1887" text-anchor="middle">Remich</text><text x="3432" y="1891" text-anchor="middle">Kusel</text><text x="2242.5" y="1921.6" text-anchor="middle">Longwy</text><text x="2390" y="1940.5" text-anchor="middle">Esch-sur-Alzette</text><text x="2843.7" y="1947.4" text-anchor="middle">Mettlach</text><text x="3264" y="1975" text-anchor="middle">Sankt Wendel</text><text x="2363" y="1973" text-anchor="middle">Villerupt</text><text x="2120" y="1997" text-anchor="middle">Longuyon</text><text x="2876" y="2001.7" text-anchor="middle">Merzig</text><text x="3032" y="2001.7" text-anchor="middle">Schmelz</text><text x="3042" y="2034" text-anchor="middle">Lebach</text><text x="3281" y="2045.6" text-anchor="middle">Ottweiler</text><text x="3384.6" y="2063" text-anchor="middle">Waldmohr</text><text x="2938.4" y="2087" text-anchor="middle">Dillingen/</text><text x="3272.6" y="2092" text-anchor="middle">Neunkirchen</text><text x="2938" y="2111" text-anchor="middle">Saar</text><text x="3272.6" y="2116" text-anchor="middle">(Saar)</text><text x="2533.6" y="2095.5" text-anchor="middle">Thionville</text><text x="2458.7" y="2127" text-anchor="middle">Hayange</text><text x="2959" y="2141" text-anchor="middle">Saarlouis</text><text x="2488.8" y="2154" text-anchor="middle">Fameck</text><text x="2898" y="1040.4" text-anchor="middle">Hillesheim</text><text x="3367" y="1032.7" text-anchor="middle">Polch</text><text x="3412" y="1092" text-anchor="middle">Münstermaifeld</text><text x="3246" y="1110" text-anchor="middle">Kaisersesch</text><text x="2892.7" y="1119.7" text-anchor="middle">Gerolstein</text><text x="2721" y="1137.8" text-anchor="middle">Prüm</text><text x="3016" y="1150" text-anchor="middle">Daun</text><text x="3125" y="1137" text-anchor="middle">Ulmen</text><text x="3261.4" y="1205" text-anchor="middle">Cochem</text><text x="3452" y="1292" text-anchor="middle">Kastell</text><text x="3271.7" y="1342.8" text-anchor="middle">Zell (Mosel)</text><text x="2503" y="1054" text-anchor="middle">Sankt Vith</text><text x="3057" y="1389" text-anchor="middle">Wittlich</text><text x="3229.6" y="1426" text-anchor="middle">Traben-Trarbach</text><text x="3190.8" y="1455.6" text-anchor="middle">Bernkastel-</text><text x="3190.8" y="1480.6" text-anchor="middle">Kues</text><text x="3440" y="1437.5" text-anchor="middle">Kirchberg</text><text x="3475" y="1612" text-anchor="middle">Ki</text></g><g font-family="Liberation Sans" font-style="italic" font-size="22" fill="#4e9a40" stroke="#eef3e4" stroke-width="3" stroke-opacity="0.6" paint-order="stroke"><text x="2127" y="1215" text-anchor="middle">Parc naturel</text><text x="2127" y="1244.6" text-anchor="middle">des deux</text><text x="2127" y="1274" text-anchor="middle">Ourthes</text><text x="1725.7" y="1439" text-anchor="middle">Parc naturel</text><text x="1725.7" y="1467.7" text-anchor="middle">de l'Ardenne</text><text x="1725.7" y="1496" text-anchor="middle">méridionale</text><text x="2133" y="1454" text-anchor="middle">Parc naturel</text><text x="2133" y="1482" text-anchor="middle">Haute-Sûre</text><text x="2133" y="1511.6" text-anchor="middle">Forêt d'Anlier</text><text x="2601" y="1406" text-anchor="middle">Naturpark</text><text x="2601" y="1430" text-anchor="middle">Südeifel</text><text x="1855" y="1584" text-anchor="middle">Parc national</text><text x="1855" y="1607" text-anchor="middle">de la Vallée</text><text x="1855" y="1630" text-anchor="middle">de la Semois</text><text x="2064" y="1764" text-anchor="middle">Parc naturel</text><text x="2064" y="1792" text-anchor="middle">de Gaume</text></g><g font-family="Liberation Sans" font-style="italic" font-size="29" fill="#4a8f3a" stroke="#eef3e4" stroke-width="3" stroke-opacity="0.6" paint-order="stroke" text-anchor="middle"><text x="3027" y="1834">Naturpark</text><text x="3027" y="1868">Saar-Hunsrück</text></g><g font-family="Liberation Sans" font-style="italic" font-size="25" fill="#8a6f9a" text-anchor="middle"><text x="3118" y="2077">Saarland</text></g><g font-family="Liberation Sans" font-size="33" fill="#6e5a7d" opacity="0.85" text-anchor="middle"><text x="2473" y="1593">Lëtzebuerg</text><text x="2482" y="1826">Luxembourg</text></g><path d="M2389.05 1246.15 L2392.65 1242.55 L2399.90 1242.55 L2405.90 1235.65 L2419.90 1235.65 L2425.50 1242.55 L2432.35 1242.55 L2435.95 1246.15 L2435.95 1269.05 L2432.35 1272.65 L2392.65 1272.65 L2389.05 1269.05Z" fill="#a3c6f7" stroke="#2a3eab" stroke-width="4.7" stroke-linejoin="miter"/><circle cx="2412.50" cy="1256.30" r="7" fill="none" stroke="#2a3eab" stroke-width="3.8"/><path d="M2461.55 1246.15 L2465.15 1242.55 L2472.40 1242.55 L2478.40 1235.65 L2492.40 1235.65 L2498.00 1242.55 L2504.85 1242.55 L2508.45 1246.15 L2508.45 1269.05 L2504.85 1272.65 L2465.15 1272.65 L2461.55 1269.05Z" fill="#a3c6f7" stroke="#2a3eab" stroke-width="4.7" stroke-linejoin="miter"/><circle cx="2485.00" cy="1256.30" r="7" fill="none" stroke="#2a3eab" stroke-width="3.8"/><path d="M2316.05 1357.85 L2319.65 1354.25 L2326.90 1354.25 L2332.90 1347.35 L2346.90 1347.35 L2352.50 1354.25 L2359.35 1354.25 L2362.95 1357.85 L2362.95 1380.75 L2359.35 1384.35 L2319.65 1384.35 L2316.05 1380.75Z" fill="#a3c6f7" stroke="#2a3eab" stroke-width="4.7" stroke-linejoin="miter"/><circle cx="2339.50" cy="1368.00" r="7" fill="none" stroke="#2a3eab" stroke-width="3.8"/><path d="M2389.05 1357.85 L2392.65 1354.25 L2399.90 1354.25 L2405.90 1347.35 L2419.90 1347.35 L2425.50 1354.25 L2432.35 1354.25 L2435.95 1357.85 L2435.95 1380.75 L2432.35 1384.35 L2392.65 1384.35 L2389.05 1380.75Z" fill="#a3c6f7" stroke="#2a3eab" stroke-width="4.7" stroke-linejoin="miter"/><circle cx="2412.50" cy="1368.00" r="7" fill="none" stroke="#2a3eab" stroke-width="3.8"/><path d="M2461.55 1357.85 L2465.15 1354.25 L2472.40 1354.25 L2478.40 1347.35 L2492.40 1347.35 L2498.00 1354.25 L2504.85 1354.25 L2508.45 1357.85 L2508.45 1380.75 L2504.85 1384.35 L2465.15 1384.35 L2461.55 1380.75Z" fill="#a3c6f7" stroke="#2a3eab" stroke-width="4.7" stroke-linejoin="miter"/><circle cx="2485.00" cy="1368.00" r="7" fill="none" stroke="#2a3eab" stroke-width="3.8"/><path d="M2533.55 1357.85 L2537.15 1354.25 L2544.40 1354.25 L2550.40 1347.35 L2564.40 1347.35 L2570.00 1354.25 L2576.85 1354.25 L2580.45 1357.85 L2580.45 1380.75 L2576.85 1384.35 L2537.15 1384.35 L2533.55 1380.75Z" fill="#a3c6f7" stroke="#2a3eab" stroke-width="4.7" stroke-linejoin="miter"/><circle cx="2557.00" cy="1368.00" r="7" fill="none" stroke="#2a3eab" stroke-width="3.8"/><path d="M2243.55 1471.85 L2247.15 1468.25 L2254.40 1468.25 L2260.40 1461.35 L2274.40 1461.35 L2280.00 1468.25 L2286.85 1468.25 L2290.45 1471.85 L2290.45 1494.75 L2286.85 1498.35 L2247.15 1498.35 L2243.55 1494.75Z" fill="#a3c6f7" stroke="#2a3eab" stroke-width="4.7" stroke-linejoin="miter"/><circle cx="2267.00" cy="1482.00" r="7" fill="none" stroke="#2a3eab" stroke-width="3.8"/><path d="M2316.05 1471.85 L2319.65 1468.25 L2326.90 1468.25 L2332.90 1461.35 L2346.90 1461.35 L2352.50 1468.25 L2359.35 1468.25 L2362.95 1471.85 L2362.95 1494.75 L2359.35 1498.35 L2319.65 1498.35 L2316.05 1494.75Z" fill="#a3c6f7" stroke="#2a3eab" stroke-width="4.7" stroke-linejoin="miter"/><circle cx="2339.50" cy="1482.00" r="7" fill="none" stroke="#2a3eab" stroke-width="3.8"/><path d="M2389.05 1471.85 L2392.65 1468.25 L2399.90 1468.25 L2405.90 1461.35 L2419.90 1461.35 L2425.50 1468.25 L2432.35 1468.25 L2435.95 1471.85 L2435.95 1494.75 L2432.35 1498.35 L2392.65 1498.35 L2389.05 1494.75Z" fill="#a3c6f7" stroke="#2a3eab" stroke-width="4.7" stroke-linejoin="miter"/><circle cx="2412.50" cy="1482.00" r="7" fill="none" stroke="#2a3eab" stroke-width="3.8"/><path d="M2461.55 1471.85 L2465.15 1468.25 L2472.40 1468.25 L2478.40 1461.35 L2492.40 1461.35 L2498.00 1468.25 L2504.85 1468.25 L2508.45 1471.85 L2508.45 1494.75 L2504.85 1498.35 L2465.15 1498.35 L2461.55 1494.75Z" fill="#a3c6f7" stroke="#2a3eab" stroke-width="4.7" stroke-linejoin="miter"/><circle cx="2485.00" cy="1482.00" r="7" fill="none" stroke="#2a3eab" stroke-width="3.8"/><path d="M2533.55 1471.85 L2537.15 1468.25 L2544.40 1468.25 L2550.40 1461.35 L2564.40 1461.35 L2570.00 1468.25 L2576.85 1468.25 L2580.45 1471.85 L2580.45 1494.75 L2576.85 1498.35 L2537.15 1498.35 L2533.55 1494.75Z" fill="#a3c6f7" stroke="#2a3eab" stroke-width="4.7" stroke-linejoin="miter"/><circle cx="2557.00" cy="1482.00" r="7" fill="none" stroke="#2a3eab" stroke-width="3.8"/><path d="M2243.55 1583.85 L2247.15 1580.25 L2254.40 1580.25 L2260.40 1573.35 L2274.40 1573.35 L2280.00 1580.25 L2286.85 1580.25 L2290.45 1583.85 L2290.45 1606.75 L2286.85 1610.35 L2247.15 1610.35 L2243.55 1606.75Z" fill="#a3c6f7" stroke="#2a3eab" stroke-width="4.7" stroke-linejoin="miter"/><circle cx="2267.00" cy="1594.00" r="7" fill="none" stroke="#2a3eab" stroke-width="3.8"/><path d="M2316.05 1583.85 L2319.65 1580.25 L2326.90 1580.25 L2332.90 1573.35 L2346.90 1573.35 L2352.50 1580.25 L2359.35 1580.25 L2362.95 1583.85 L2362.95 1606.75 L2359.35 1610.35 L2319.65 1610.35 L2316.05 1606.75Z" fill="#a3c6f7" stroke="#2a3eab" stroke-width="4.7" stroke-linejoin="miter"/><circle cx="2339.50" cy="1594.00" r="7" fill="none" stroke="#2a3eab" stroke-width="3.8"/><path d="M2389.05 1583.85 L2392.65 1580.25 L2399.90 1580.25 L2405.90 1573.35 L2419.90 1573.35 L2425.50 1580.25 L2432.35 1580.25 L2435.95 1583.85 L2435.95 1606.75 L2432.35 1610.35 L2392.65 1610.35 L2389.05 1606.75Z" fill="#a3c6f7" stroke="#2a3eab" stroke-width="4.7" stroke-linejoin="miter"/><circle cx="2412.50" cy="1594.00" r="7" fill="none" stroke="#2a3eab" stroke-width="3.8"/><path d="M2461.55 1583.85 L2465.15 1580.25 L2472.40 1580.25 L2478.40 1573.35 L2492.40 1573.35 L2498.00 1580.25 L2504.85 1580.25 L2508.45 1583.85 L2508.45 1606.75 L2504.85 1610.35 L2465.15 1610.35 L2461.55 1606.75Z" fill="#a3c6f7" stroke="#2a3eab" stroke-width="4.7" stroke-linejoin="miter"/><circle cx="2485.00" cy="1594.00" r="7" fill="none" stroke="#2a3eab" stroke-width="3.8"/><path d="M2533.55 1583.85 L2537.15 1580.25 L2544.40 1580.25 L2550.40 1573.35 L2564.40 1573.35 L2570.00 1580.25 L2576.85 1580.25 L2580.45 1583.85 L2580.45 1606.75 L2576.85 1610.35 L2537.15 1610.35 L2533.55 1606.75Z" fill="#a3c6f7" stroke="#2a3eab" stroke-width="4.7" stroke-linejoin="miter"/><circle cx="2557.00" cy="1594.00" r="7" fill="none" stroke="#2a3eab" stroke-width="3.8"/><path d="M2607.05 1583.85 L2610.65 1580.25 L2617.90 1580.25 L2623.90 1573.35 L2637.90 1573.35 L2643.50 1580.25 L2650.35 1580.25 L2653.95 1583.85 L2653.95 1606.75 L2650.35 1610.35 L2610.65 1610.35 L2607.05 1606.75Z" fill="#a3c6f7" stroke="#2a3eab" stroke-width="4.7" stroke-linejoin="miter"/><circle cx="2630.50" cy="1594.00" r="7" fill="none" stroke="#2a3eab" stroke-width="3.8"/><path d="M2679.05 1583.85 L2682.65 1580.25 L2689.90 1580.25 L2695.90 1573.35 L2709.90 1573.35 L2715.50 1580.25 L2722.35 1580.25 L2725.95 1583.85 L2725.95 1606.75 L2722.35 1610.35 L2682.65 1610.35 L2679.05 1606.75Z" fill="#a3c6f7" stroke="#2a3eab" stroke-width="4.7" stroke-linejoin="miter"/><circle cx="2702.50" cy="1594.00" r="7" fill="none" stroke="#2a3eab" stroke-width="3.8"/><path d="M2316.05 1697.85 L2319.65 1694.25 L2326.90 1694.25 L2332.90 1687.35 L2346.90 1687.35 L2352.50 1694.25 L2359.35 1694.25 L2362.95 1697.85 L2362.95 1720.75 L2359.35 1724.35 L2319.65 1724.35 L2316.05 1720.75Z" fill="#a3c6f7" stroke="#2a3eab" stroke-width="4.7" stroke-linejoin="miter"/><circle cx="2339.50" cy="1708.00" r="7" fill="none" stroke="#2a3eab" stroke-width="3.8"/><path d="M2389.05 1697.85 L2392.65 1694.25 L2399.90 1694.25 L2405.90 1687.35 L2419.90 1687.35 L2425.50 1694.25 L2432.35 1694.25 L2435.95 1697.85 L2435.95 1720.75 L2432.35 1724.35 L2392.65 1724.35 L2389.05 1720.75Z" fill="#a3c6f7" stroke="#2a3eab" stroke-width="4.7" stroke-linejoin="miter"/><circle cx="2412.50" cy="1708.00" r="7" fill="none" stroke="#2a3eab" stroke-width="3.8"/><path d="M2461.55 1697.85 L2465.15 1694.25 L2472.40 1694.25 L2478.40 1687.35 L2492.40 1687.35 L2498.00 1694.25 L2504.85 1694.25 L2508.45 1697.85 L2508.45 1720.75 L2504.85 1724.35 L2465.15 1724.35 L2461.55 1720.75Z" fill="#a3c6f7" stroke="#2a3eab" stroke-width="4.7" stroke-linejoin="miter"/><circle cx="2485.00" cy="1708.00" r="7" fill="none" stroke="#2a3eab" stroke-width="3.8"/><path d="M2533.55 1697.85 L2537.15 1694.25 L2544.40 1694.25 L2550.40 1687.35 L2564.40 1687.35 L2570.00 1694.25 L2576.85 1694.25 L2580.45 1697.85 L2580.45 1720.75 L2576.85 1724.35 L2537.15 1724.35 L2533.55 1720.75Z" fill="#a3c6f7" stroke="#2a3eab" stroke-width="4.7" stroke-linejoin="miter"/><circle cx="2557.00" cy="1708.00" r="7" fill="none" stroke="#2a3eab" stroke-width="3.8"/><path d="M2679.05 1697.85 L2682.65 1694.25 L2689.90 1694.25 L2695.90 1687.35 L2709.90 1687.35 L2715.50 1694.25 L2722.35 1694.25 L2725.95 1697.85 L2725.95 1720.75 L2722.35 1724.35 L2682.65 1724.35 L2679.05 1720.75Z" fill="#a3c6f7" stroke="#2a3eab" stroke-width="4.7" stroke-linejoin="miter"/><circle cx="2702.50" cy="1708.00" r="7" fill="none" stroke="#2a3eab" stroke-width="3.8"/><path d="M2752.55 1697.85 L2756.15 1694.25 L2763.40 1694.25 L2769.40 1687.35 L2783.40 1687.35 L2789.00 1694.25 L2795.85 1694.25 L2799.45 1697.85 L2799.45 1720.75 L2795.85 1724.35 L2756.15 1724.35 L2752.55 1720.75Z" fill="#a3c6f7" stroke="#2a3eab" stroke-width="4.7" stroke-linejoin="miter"/><circle cx="2776.00" cy="1708.00" r="7" fill="none" stroke="#2a3eab" stroke-width="3.8"/><path d="M2316.05 1810.25 L2319.65 1806.65 L2326.90 1806.65 L2332.90 1799.75 L2346.90 1799.75 L2352.50 1806.65 L2359.35 1806.65 L2362.95 1810.25 L2362.95 1833.15 L2359.35 1836.75 L2319.65 1836.75 L2316.05 1833.15Z" fill="#a3c6f7" stroke="#2a3eab" stroke-width="4.7" stroke-linejoin="miter"/><circle cx="2339.50" cy="1820.40" r="7" fill="none" stroke="#2a3eab" stroke-width="3.8"/><path d="M2389.05 1810.25 L2392.65 1806.65 L2399.90 1806.65 L2405.90 1799.75 L2419.90 1799.75 L2425.50 1806.65 L2432.35 1806.65 L2435.95 1810.25 L2435.95 1833.15 L2432.35 1836.75 L2392.65 1836.75 L2389.05 1833.15Z" fill="#a3c6f7" stroke="#2a3eab" stroke-width="4.7" stroke-linejoin="miter"/><circle cx="2412.50" cy="1820.40" r="7" fill="none" stroke="#2a3eab" stroke-width="3.8"/><path d="M2461.55 1810.25 L2465.15 1806.65 L2472.40 1806.65 L2478.40 1799.75 L2492.40 1799.75 L2498.00 1806.65 L2504.85 1806.65 L2508.45 1810.25 L2508.45 1833.15 L2504.85 1836.75 L2465.15 1836.75 L2461.55 1833.15Z" fill="#a3c6f7" stroke="#2a3eab" stroke-width="4.7" stroke-linejoin="miter"/><circle cx="2485.00" cy="1820.40" r="7" fill="none" stroke="#2a3eab" stroke-width="3.8"/><path d="M2533.55 1810.25 L2537.15 1806.65 L2544.40 1806.65 L2550.40 1799.75 L2564.40 1799.75 L2570.00 1806.65 L2576.85 1806.65 L2580.45 1810.25 L2580.45 1833.15 L2576.85 1836.75 L2537.15 1836.75 L2533.55 1833.15Z" fill="#a3c6f7" stroke="#2a3eab" stroke-width="4.7" stroke-linejoin="miter"/><circle cx="2557.00" cy="1820.40" r="7" fill="none" stroke="#2a3eab" stroke-width="3.8"/><path d="M2607.05 1810.25 L2610.65 1806.65 L2617.90 1806.65 L2623.90 1799.75 L2637.90 1799.75 L2643.50 1806.65 L2650.35 1806.65 L2653.95 1810.25 L2653.95 1833.15 L2650.35 1836.75 L2610.65 1836.75 L2607.05 1833.15Z" fill="#a3c6f7" stroke="#2a3eab" stroke-width="4.7" stroke-linejoin="miter"/><circle cx="2630.50" cy="1820.40" r="7" fill="none" stroke="#2a3eab" stroke-width="3.8"/><path d="M2389.05 1922.35 L2392.65 1918.75 L2399.90 1918.75 L2405.90 1911.85 L2419.90 1911.85 L2425.50 1918.75 L2432.35 1918.75 L2435.95 1922.35 L2435.95 1945.25 L2432.35 1948.85 L2392.65 1948.85 L2389.05 1945.25Z" fill="#a3c6f7" stroke="#2a3eab" stroke-width="4.7" stroke-linejoin="miter"/><circle cx="2412.50" cy="1932.50" r="7" fill="none" stroke="#2a3eab" stroke-width="3.8"/><path d="M2461.55 1922.35 L2465.15 1918.75 L2472.40 1918.75 L2478.40 1911.85 L2492.40 1911.85 L2498.00 1918.75 L2504.85 1918.75 L2508.45 1922.35 L2508.45 1945.25 L2504.85 1948.85 L2465.15 1948.85 L2461.55 1945.25Z" fill="#a3c6f7" stroke="#2a3eab" stroke-width="4.7" stroke-linejoin="miter"/><circle cx="2485.00" cy="1932.50" r="7" fill="none" stroke="#2a3eab" stroke-width="3.8"/><path d="M2607.05 1922.35 L2610.65 1918.75 L2617.90 1918.75 L2623.90 1911.85 L2637.90 1911.85 L2643.50 1918.75 L2650.35 1918.75 L2653.95 1922.35 L2653.95 1945.25 L2650.35 1948.85 L2610.65 1948.85 L2607.05 1945.25Z" fill="#a3c6f7" stroke="#2a3eab" stroke-width="4.7" stroke-linejoin="miter"/><circle cx="2630.50" cy="1932.50" r="7" fill="none" stroke="#2a3eab" stroke-width="3.8"/></svg><div style="position:absolute;left:21px;top:22px;width:68px;height:128px;box-sizing:border-box;border:4px solid rgba(0,0,0,0.2);border-radius:8px;background-clip:padding-box;"><div style="position:absolute;left:0;top:0;width:60px;height:60px;background:#fff;border-radius:4px 4px 0 0;border-bottom:2px solid #ccc;box-sizing:border-box"></div><div style="position:absolute;left:0;top:60px;width:60px;height:60px;background:#fff;border-radius:0 0 4px 4px"></div><div style="position:absolute;left:19px;top:32px;width:24px;height:4px;background:#000"></div><div style="position:absolute;left:29px;top:22px;width:4px;height:24px;background:#000"></div><div style="position:absolute;left:19px;top:92px;width:24px;height:4px;background:#000"></div></div><div style="position:absolute;left:1434px;top:1142px;width:476px;height:36px;background:rgba(255,255,255,0.8)"></div><svg style="position:absolute;left:1444px;top:1151px" width="24" height="16"><rect width="24" height="8" fill="#4C7BE1"/><rect y="8" width="24" height="8" fill="#FFD500"/></svg><div class="t" style="left:1473.50px;top:1141.00px;height:36px;line-height:36px;font-size:24px;font-weight:400;letter-spacing:-0.067px;color:#0078a8;-webkit-text-stroke:0.35px #0078a8;">Leaflet</div>
<div class="t" style="left:1552.30px;top:1141.00px;height:36px;line-height:36px;font-size:24px;font-weight:400;letter-spacing:0.700px;color:#333333;-webkit-text-stroke:0.35px #333333;">|</div>
<div class="t" style="left:1565.00px;top:1141.00px;height:36px;line-height:36px;font-size:24px;font-weight:400;letter-spacing:1.300px;color:#333333;-webkit-text-stroke:0.35px #333333;">©</div>
<div class="t" style="left:1590.40px;top:1141.00px;height:36px;line-height:36px;font-size:24px;font-weight:400;letter-spacing:0.092px;color:#0078a8;-webkit-text-stroke:0.35px #0078a8;">OpenStreetMap</div>
<div class="t" style="left:1767.60px;top:1141.00px;height:36px;line-height:36px;font-size:24px;font-weight:400;letter-spacing:0.418px;color:#333333;-webkit-text-stroke:0.35px #333333;">contributors</div><div style="position:absolute;left:0;top:0;width:1911px;height:1178px;box-sizing:border-box;border:2px solid #e5e7eb;border-radius:12px"></div></div>
<div class="t" style="left:1650.00px;top:7.00px;height:40px;line-height:40px;font-size:27px;font-weight:700;letter-spacing:-0.143px;color:#4d4d4d;-webkit-text-stroke:0.35px #4d4d4d;">Biowatch</div>
<div class="t" style="left:48.00px;top:95.60px;height:46px;line-height:46px;font-size:30.5px;font-weight:400;letter-spacing:-0.267px;color:#0a0a0a;-webkit-text-stroke:1.2px #0a0a0a;">Studies</div>
<div class="t" style="left:90.00px;top:161.00px;height:44px;line-height:44px;font-size:29px;font-weight:400;letter-spacing:1.235px;color:#3f3f46;-webkit-text-stroke:1.1px #3f3f46;">luxvalmoni20223025</div>
<div class="t" style="left:90.00px;top:226.00px;height:44px;line-height:44px;font-size:29px;font-weight:400;letter-spacing:0.000px;color:#3f3f46;-webkit-text-stroke:0.35px #3f3f46;">awd_pilots_3</div>
<div class="t" style="left:163.40px;top:2002.40px;height:44px;line-height:44px;font-size:29px;font-weight:400;letter-spacing:0.538px;color:#0a0a0a;-webkit-text-stroke:0.6000000000000001px #0a0a0a;">Add study</div>
<div class="t" style="left:504.00px;top:98.00px;height:44px;line-height:44px;font-size:29px;font-weight:400;letter-spacing:0.429px;color:#0a0a0a;-webkit-text-stroke:0.6000000000000001px #0a0a0a;">Overview</div>
<div class="t" style="left:752.00px;top:98.00px;height:44px;line-height:44px;font-size:29px;font-weight:400;letter-spacing:0.857px;color:#0a0a0a;-webkit-text-stroke:0.6000000000000001px #0a0a0a;">Activity</div>
<div class="t" style="left:972.00px;top:97.50px;height:44px;line-height:44px;font-size:29px;font-weight:400;letter-spacing:0.500px;color:#0a0a0a;-webkit-text-stroke:0.6000000000000001px #0a0a0a;">Media</div>
<div class="t" style="left:1176.00px;top:97.50px;height:44px;line-height:44px;font-size:29px;font-weight:400;letter-spacing:0.300px;color:#0a0a0a;-webkit-text-stroke:0.6000000000000001px #0a0a0a;">Deployments</div>
<div class="t" style="left:448.00px;top:192.40px;height:50px;line-height:50px;font-size:33px;font-weight:400;letter-spacing:0.880px;color:#0a0a0a;-webkit-text-stroke:1.1px #0a0a0a;">Luxembourg national monitoring (valerian) 2023-2025</div>
<div class="t" style="left:449.00px;top:240.00px;height:44px;line-height:44px;font-size:29px;font-weight:400;letter-spacing:0.783px;color:#6b7280;-webkit-text-stroke:0.35px #6b7280;">2023-01-24 to 2024-07-18</div>
<div class="t" style="left:450.00px;top:295.50px;height:44px;line-height:44px;font-size:29px;font-weight:400;letter-spacing:0.513px;color:#1f2937;-webkit-text-stroke:0.35px #1f2937;">This dataset contains the Luxembourg occurence records from 2023 to 2025 of the</div>
<div class="t" style="left:448.00px;top:335.50px;height:44px;line-height:44px;font-size:29px;font-weight:400;letter-spacing:0.375px;color:#1f2937;-webkit-text-stroke:0.35px #1f2937;">national monitoring using hair traps with valerian, in forest, targeting Felis silvestris</div>
<div class="t" style="left:449.00px;top:375.50px;height:44px;line-height:44px;font-size:29px;font-weight:400;letter-spacing:0.321px;color:#1f2937;-webkit-text-stroke:0.35px #1f2937;">silvestris, Martes martes and Mustela putorius. Selection of 72 1km-squares with >10%</div>
<div class="t" style="left:449.00px;top:415.50px;height:44px;line-height:44px;font-size:29px;font-weight:400;letter-spacing:0.429px;color:#1f2937;-webkit-text-stroke:0.35px #1f2937;">of forest coverage using a stratified random sampling. 3 camera traps on game routes,</div>
<div class="t" style="left:448.00px;top:455.50px;height:44px;line-height:44px;font-size:29px;font-weight:400;letter-spacing:0.376px;color:#1f2937;-webkit-text-stroke:0.35px #1f2937;">1 camera trap on Polecat habitats (pond and/or river bank and/or forest edge), from...</div>
<div class="t" style="left:448.00px;top:493.80px;height:38px;line-height:38px;font-size:25px;font-weight:400;letter-spacing:0.125px;color:#6b7280;-webkit-text-stroke:0.35px #6b7280;">Show more</div>
<div class="t" style="left:473.00px;top:955.00px;height:44px;line-height:44px;font-size:29px;font-weight:400;letter-spacing:0.133px;color:#0a0a0a;-webkit-text-stroke:0.35px #0a0a0a;">Rodents</div>
<div class="t" style="left:601.00px;top:955.00px;height:44px;line-height:44px;font-size:29px;font-weight:400;font-style:italic;letter-spacing:0.000px;color:#6b7280;-webkit-text-stroke:0.35px #6b7280;">(Rodentia)</div>
<div class="t" style="left:1325.00px;top:956.00px;height:38px;line-height:38px;font-size:25px;font-weight:400;letter-spacing:0.000px;color:#6b7280;-webkit-text-stroke:0.35px #6b7280;">10386</div>
<div class="t" style="left:473.00px;top:1059.00px;height:44px;line-height:44px;font-size:29px;font-weight:400;letter-spacing:0.433px;color:#0a0a0a;-webkit-text-stroke:0.35px #0a0a0a;">Raccoon</div>
<div class="t" style="left:608.80px;top:1059.00px;height:44px;line-height:44px;font-size:29px;font-weight:400;font-style:italic;letter-spacing:0.350px;color:#6b7280;-webkit-text-stroke:0.35px #6b7280;">(Procyon lotor)</div>
<div class="t" style="left:1339.00px;top:1060.00px;height:38px;line-height:38px;font-size:25px;font-weight:400;letter-spacing:0.000px;color:#6b7280;-webkit-text-stroke:0.35px #6b7280;">4677</div>
<div class="t" style="left:473.00px;top:1163.00px;height:44px;line-height:44px;font-size:29px;font-weight:400;letter-spacing:0.193px;color:#0a0a0a;-webkit-text-stroke:0.35px #0a0a0a;">European Badger</div>
<div class="t" style="left:722.40px;top:1163.00px;height:44px;line-height:44px;font-size:29px;font-weight:400;font-style:italic;letter-spacing:0.217px;color:#6b7280;-webkit-text-stroke:0.35px #6b7280;">(Meles meles)</div>
<div class="t" style="left:1339.00px;top:1164.00px;height:38px;line-height:38px;font-size:25px;font-weight:400;letter-spacing:0.000px;color:#6b7280;-webkit-text-stroke:0.35px #6b7280;">4008</div>
<div class="t" style="left:473.00px;top:1267.00px;height:44px;line-height:44px;font-size:29px;font-weight:400;letter-spacing:-0.286px;color:#0a0a0a;-webkit-text-stroke:0.35px #0a0a0a;">Roe Deer</div>
<div class="t" style="left:615.00px;top:1267.00px;height:44px;line-height:44px;font-size:29px;font-weight:400;font-style:italic;letter-spacing:0.300px;color:#6b7280;-webkit-text-stroke:0.35px #6b7280;">(Capreolus capreolus)</div>
<div class="t" style="left:1339.00px;top:1268.00px;height:38px;line-height:38px;font-size:25px;font-weight:400;letter-spacing:0.000px;color:#6b7280;-webkit-text-stroke:0.35px #6b7280;">3521</div>
<div class="t" style="left:475.00px;top:1371.00px;height:44px;line-height:44px;font-size:29px;font-weight:400;letter-spacing:0.333px;color:#0a0a0a;-webkit-text-stroke:0.35px #0a0a0a;">True Thrushes</div>
<div class="t" style="left:685.00px;top:1371.00px;height:44px;line-height:44px;font-size:29px;font-weight:400;font-style:italic;letter-spacing:0.429px;color:#6b7280;-webkit-text-stroke:0.35px #6b7280;">(Turdus)</div>
<div class="t" style="left:1339.00px;top:1372.00px;height:38px;line-height:38px;font-size:25px;font-weight:400;letter-spacing:0.000px;color:#6b7280;-webkit-text-stroke:0.35px #6b7280;">2514</div>
<div class="t" style="left:473.00px;top:1475.00px;height:44px;line-height:44px;font-size:29px;font-weight:400;letter-spacing:0.333px;color:#0a0a0a;-webkit-text-stroke:0.35px #0a0a0a;">European Wildcat</div>
<div class="t" style="left:726.40px;top:1475.00px;height:44px;line-height:44px;font-size:29px;font-weight:400;font-style:italic;letter-spacing:0.247px;color:#6b7280;-webkit-text-stroke:0.35px #6b7280;">(Felis silvestris)</div>
<div class="t" style="left:1339.00px;top:1476.00px;height:38px;line-height:38px;font-size:25px;font-weight:400;letter-spacing:0.000px;color:#6b7280;-webkit-text-stroke:0.35px #6b7280;">2345</div>
<div class="t" style="left:473.00px;top:1579.00px;height:44px;line-height:44px;font-size:29px;font-weight:400;letter-spacing:-0.500px;color:#0a0a0a;-webkit-text-stroke:0.35px #0a0a0a;">Red Fox</div>
<div class="t" style="left:598.00px;top:1579.00px;height:44px;line-height:44px;font-size:29px;font-weight:400;font-style:italic;letter-spacing:0.479px;color:#6b7280;-webkit-text-stroke:0.35px #6b7280;">(Vulpes vulpes)</div>
<div class="t" style="left:1339.00px;top:1580.00px;height:38px;line-height:38px;font-size:25px;font-weight:400;letter-spacing:0.000px;color:#6b7280;-webkit-text-stroke:0.35px #6b7280;">2091</div>
<div class="t" style="left:475.00px;top:1683.00px;height:44px;line-height:44px;font-size:29px;font-weight:400;letter-spacing:-0.025px;color:#0a0a0a;-webkit-text-stroke:0.35px #0a0a0a;">Wild Boar</div>
<div class="t" style="left:621.00px;top:1683.00px;height:44px;line-height:44px;font-size:29px;font-weight:400;font-style:italic;letter-spacing:0.273px;color:#6b7280;-webkit-text-stroke:0.35px #6b7280;">(Sus scrofa)</div>
<div class="t" style="left:1339.00px;top:1684.00px;height:38px;line-height:38px;font-size:25px;font-weight:400;letter-spacing:0.000px;color:#6b7280;-webkit-text-stroke:0.35px #6b7280;">1919</div>
<div class="t" style="left:474.00px;top:1787.00px;height:44px;line-height:44px;font-size:29px;font-weight:400;letter-spacing:0.427px;color:#0a0a0a;-webkit-text-stroke:0.35px #0a0a0a;">Common Blackbird</div>
<div class="t" style="left:744.00px;top:1787.00px;height:44px;line-height:44px;font-size:29px;font-weight:400;font-style:italic;letter-spacing:0.286px;color:#6b7280;-webkit-text-stroke:0.35px #6b7280;">(Turdus merula)</div>
<div class="t" style="left:1339.00px;top:1788.00px;height:38px;line-height:38px;font-size:25px;font-weight:400;letter-spacing:0.000px;color:#6b7280;-webkit-text-stroke:0.35px #6b7280;">1665</div>
<div class="t" style="left:473.00px;top:1891.00px;height:44px;line-height:44px;font-size:29px;font-weight:400;letter-spacing:0.200px;color:#0a0a0a;-webkit-text-stroke:0.35px #0a0a0a;">European Pine Marten</div>
<div class="t" style="left:786.40px;top:1891.00px;height:44px;line-height:44px;font-size:29px;font-weight:400;font-style:italic;letter-spacing:0.364px;color:#6b7280;-webkit-text-stroke:0.35px #6b7280;">(Martes martes)</div>
<div class="t" style="left:1339.00px;top:1892.00px;height:38px;line-height:38px;font-size:25px;font-weight:400;letter-spacing:0.000px;color:#6b7280;-webkit-text-stroke:0.35px #6b7280;">1483</div>
<div class="t" style="left:473.00px;top:1995.00px;height:44px;line-height:44px;font-size:29px;font-weight:400;letter-spacing:0.136px;color:#0a0a0a;-webkit-text-stroke:0.35px #0a0a0a;">Red Squirrel</div>
<div class="t" style="left:655.00px;top:1995.00px;height:44px;line-height:44px;font-size:29px;font-weight:400;font-style:italic;letter-spacing:0.353px;color:#6b7280;-webkit-text-stroke:0.35px #6b7280;">(Sciurus vulgaris)</div>
<div class="t" style="left:1353.00px;top:1996.00px;height:38px;line-height:38px;font-size:25px;font-weight:400;letter-spacing:0.000px;color:#6b7280;-webkit-text-stroke:0.35px #6b7280;">906</div>
</div>
</body></html>
